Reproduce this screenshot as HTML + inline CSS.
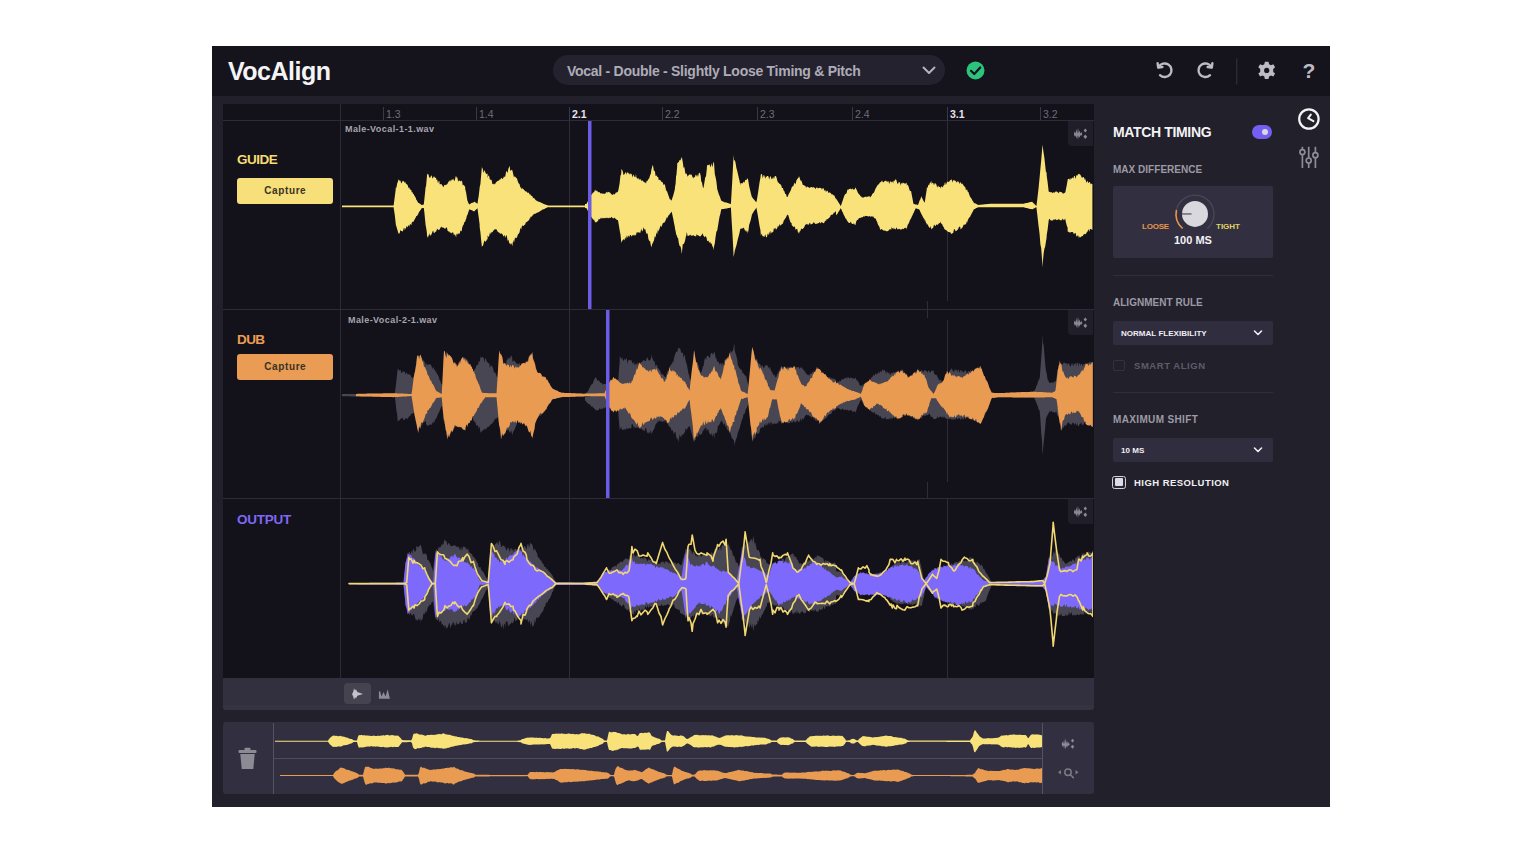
<!DOCTYPE html>
<html><head><meta charset="utf-8">
<style>
*{box-sizing:border-box;margin:0;padding:0}
html,body{width:1540px;height:850px;background:#fff;overflow:hidden;font-family:"Liberation Sans",sans-serif}
.a{position:absolute}
#win{left:212px;top:46px;width:1118px;height:761px;background:#22202b}
#hdr{left:212px;top:46px;width:1118px;height:50px;background:#15131c}
#logo{left:228px;top:56.7px;font-size:25px;font-weight:bold;color:#f4f3f6;letter-spacing:-0.5px}
#preset{left:553px;top:55px;width:392px;height:30px;border-radius:15px;background:#24222e}
#presettxt{left:567px;top:62.5px;font-size:14px;font-weight:bold;color:#aeacb7;letter-spacing:-0.27px;white-space:nowrap}
#lp{left:223px;top:104px;width:871px;height:606px;background:#131119;border-radius:3px;overflow:hidden}
#ruler{left:223px;top:104px;width:871px;height:17px;background:#131119;border-bottom:1px solid #2d2b37}
.tick{width:1px;background:#3a3845;top:107px;height:13px}
.tl{top:107.5px;font-size:10.5px;color:#6f6c7a}
.tlb{top:107.5px;font-size:10.5px;color:#e6e4ea;font-weight:bold}
.vline{width:1px;background:#2e2c38}
.hline{height:1px;background:#2e2c39}
.tname{font-size:13.5px;font-weight:bold}
.cap{width:96px;height:26px;border-radius:3px;font-size:10px;font-weight:bold;color:#3a3325;text-align:center;line-height:26px;letter-spacing:0.6px;text-indent:0.6px}
.fname{font-size:9px;font-weight:bold;color:#a7a5b0;letter-spacing:0.42px}
.ibox{width:25px;height:25px;background:#201e29;border-radius:0 0 0 4px}
#tb{left:223px;top:678px;width:871px;height:32px;background:#322f3e;border-radius:0 0 3px 3px}
#ov{left:223px;top:722px;width:871px;height:72px;background:#322f40;border-radius:3px}
.lbl{font-size:10px;font-weight:bold;color:#9c9aa5;letter-spacing:0.02px}
.dd{width:160px;height:24px;background:#302d3e;border-radius:2px}
.ddt{font-size:8px;font-weight:bold;color:#f0eff3;letter-spacing:0.03px}
</style></head><body>
<div id="win" class="a"></div>
<div id="hdr" class="a"></div>
<div id="logo" class="a">VocAlign</div>
<div id="preset" class="a"></div>
<div id="presettxt" class="a">Vocal - Double - Slightly Loose Timing &amp; Pitch</div>
<svg class="a" style="left:0;top:0" width="1540" height="850" viewBox="0 0 1540 850">
  <!-- chevron preset -->
  <path d="M923.5,67.5 L929,73 L934.5,67.5" fill="none" stroke="#b4b2bc" stroke-width="2" stroke-linecap="round" stroke-linejoin="round"/>
  <!-- green check -->
  <circle cx="975.5" cy="70.5" r="9" fill="#2cc47c"/>
  <path d="M971,70.8 L974.3,74 L980.2,67.5" fill="none" stroke="#15131c" stroke-width="2.2" stroke-linecap="round" stroke-linejoin="round"/>
  <!-- undo -->
  <g fill="none" stroke="#bdbbc3" stroke-width="2.4" stroke-linecap="round" stroke-linejoin="round">
    <path d="M1158.6,67.2 A6.8,6.8 0 1 1 1160,75.2"/>
    <path d="M1157.6,63.2 L1158.2,67.6 L1162.4,67"/>
    <path d="M1211.4,67.2 A6.8,6.8 0 1 0 1210,75.2"/>
    <path d="M1212.4,63.2 L1211.8,67.6 L1207.6,67"/>
  </g>
  <rect x="1236" y="58.5" width="1.5" height="26" fill="#2b2935"/>
  <!-- gear -->
  <g transform="translate(1266.7,70.4)" fill="#bdbbc3">
    <path d="M-1.8,-8.6 L1.8,-8.6 L2.4,-6.2 L4.3,-5.2 L6.6,-6.2 L8.4,-3.1 L6.5,-1.5 L6.5,1.5 L8.4,3.1 L6.6,6.2 L4.3,5.2 L2.4,6.2 L1.8,8.6 L-1.8,8.6 L-2.4,6.2 L-4.3,5.2 L-6.6,6.2 L-8.4,3.1 L-6.5,1.5 L-6.5,-1.5 L-8.4,-3.1 L-6.6,-6.2 L-4.3,-5.2 L-2.4,-6.2 Z"/>
    <circle r="2.6" fill="#15131c"/>
  </g>
  <!-- ? -->
  <text x="1309" y="78.4" font-family="Liberation Sans" font-weight="bold" font-size="21" fill="#bdbbc3" text-anchor="middle">?</text>
</svg>

<div id="lp" class="a"></div>
<div id="ruler" class="a"></div>

<!-- ruler ticks -->
<div class="a tick" style="left:383px"></div><div class="a tl" style="left:386px">1.3</div>
<div class="a tick" style="left:476px"></div><div class="a tl" style="left:479px">1.4</div>
<div class="a tick" style="left:569px"></div><div class="a tlb" style="left:572px">2.1</div>
<div class="a tick" style="left:662px"></div><div class="a tl" style="left:665px">2.2</div>
<div class="a tick" style="left:757px"></div><div class="a tl" style="left:760px">2.3</div>
<div class="a tick" style="left:852px"></div><div class="a tl" style="left:855px">2.4</div>
<div class="a tick" style="left:947px"></div><div class="a tlb" style="left:950px">3.1</div>
<div class="a tick" style="left:1040px"></div><div class="a tl" style="left:1043px">3.2</div>

<!-- column divider + gridlines -->
<div class="a vline" style="left:340px;top:104px;height:574px;background:#2c2a36"></div>
<div class="a vline" style="left:569px;top:121px;height:557px"></div>
<div class="a vline" style="left:947px;top:121px;height:180px"></div>
<div class="a vline" style="left:947px;top:320px;height:162px"></div>
<div class="a vline" style="left:947px;top:499px;height:179px"></div>
<div class="a hline" style="left:223px;top:309px;width:871px"></div>
<div class="a hline" style="left:223px;top:498px;width:871px"></div>
<div class="a vline" style="left:927px;top:301px;height:17px"></div>
<div class="a vline" style="left:927px;top:482px;height:17px"></div>

<svg class="a" style="left:0;top:0" width="1540" height="850" viewBox="0 0 1540 850">
  <defs>
    <clipPath id="cg"><rect x="341" y="121" width="752" height="187"/></clipPath>
    <clipPath id="cd"><rect x="341" y="310" width="752" height="187"/></clipPath>
    <clipPath id="co"><rect x="341" y="499" width="752" height="179"/></clipPath>
  </defs>
  <g clip-path="url(#cg)"><path d="M342.0,205.4 342.8,205.4 343.6,205.4 344.4,205.4 345.2,205.4 346.0,205.4 346.8,205.4 347.6,205.4 348.4,205.4 349.2,205.4 350.0,205.4 350.8,205.4 351.6,205.4 352.4,205.4 353.2,205.4 354.0,205.4 354.8,205.4 355.6,205.4 356.4,205.4 357.2,205.4 358.0,205.4 358.8,205.4 359.6,205.4 360.4,205.4 361.2,205.4 362.0,205.4 362.8,205.4 363.6,205.4 364.4,205.4 365.2,205.4 366.0,205.4 366.8,205.4 367.6,205.4 368.4,205.4 369.2,205.4 370.0,205.4 370.8,205.4 371.6,205.4 372.4,205.4 373.2,205.4 374.0,205.4 374.8,205.4 375.6,205.4 376.4,205.4 377.2,205.4 378.0,205.4 378.8,205.4 379.6,205.4 380.4,205.4 381.2,205.4 382.0,205.4 382.8,205.4 383.6,205.4 384.4,205.4 385.2,205.4 386.0,205.4 386.8,205.4 387.6,205.4 388.4,205.4 389.2,205.4 390.0,205.4 390.8,205.4 391.6,205.4 392.4,205.4 393.2,205.4 393.6,205.4 394.0,202.6 394.8,196.4 395.6,190.3 395.9,187.1 396.4,188.0 397.2,183.2 398.0,181.6 398.6,179.2 398.8,179.4 399.6,180.8 400.4,180.4 401.2,183.6 402.0,182.2 402.8,180.8 403.6,181.0 404.4,183.0 404.8,181.5 405.2,181.9 406.0,183.7 406.8,184.2 407.6,184.9 408.4,187.5 409.2,188.4 409.3,187.1 410.0,189.7 410.8,189.6 411.5,190.4 411.6,192.3 412.4,192.1 413.2,194.3 413.8,193.8 414.0,194.9 414.8,196.3 415.6,197.4 416.4,200.0 417.1,200.5 417.2,201.0 418.0,202.5 418.2,202.7 418.8,203.1 419.6,203.6 420.4,204.1 421.2,204.7 421.6,204.9 422.0,204.9 422.8,204.7 423.6,204.5 423.8,204.5 424.4,199.1 425.2,191.3 425.6,187.1 426.0,186.4 426.8,177.8 427.2,173.6 427.6,174.3 428.4,174.2 429.2,177.2 430.0,178.0 430.8,176.3 431.6,175.2 432.4,178.4 433.2,177.8 433.9,175.9 434.0,176.3 434.8,177.6 435.6,177.8 436.1,178.1 436.4,179.9 437.2,179.6 438.0,183.5 438.8,180.8 439.5,181.5 439.6,184.2 440.4,184.3 441.2,184.1 442.0,184.8 442.8,186.5 442.8,185.9 443.6,187.3 444.4,184.7 445.2,185.2 446.0,184.6 446.8,184.8 447.6,183.5 448.4,182.1 449.2,180.6 449.5,180.4 450.0,181.9 450.8,179.8 451.6,180.8 451.8,178.9 452.4,179.9 453.2,178.5 454.0,180.7 454.8,180.4 455.6,176.4 456.2,175.9 456.4,177.6 457.2,177.2 458.0,180.4 458.8,181.4 459.6,180.2 460.4,181.2 461.2,181.3 461.8,180.4 462.0,180.8 462.8,185.5 463.6,184.8 464.4,185.8 465.2,187.1 465.2,189.0 466.0,191.9 466.3,193.8 466.8,197.1 467.4,200.5 467.6,201.0 468.4,203.0 469.2,204.5 469.2,204.5 470.0,204.0 470.8,203.4 471.6,203.0 471.9,202.7 472.4,202.8 473.2,202.5 474.0,202.2 474.1,201.6 474.8,202.1 475.6,202.6 476.4,203.1 477.2,203.6 477.5,203.8 478.0,200.1 478.8,195.2 479.6,188.1 479.7,187.1 480.4,184.0 481.2,174.6 482.0,165.8 482.0,167.5 482.8,169.0 483.6,173.1 484.4,170.1 485.2,171.9 486.0,173.8 486.8,174.0 487.6,173.6 487.6,177.9 488.4,175.2 489.2,176.2 490.0,180.0 490.8,179.4 491.6,179.9 492.4,183.9 493.2,184.2 494.0,183.4 494.3,183.7 494.8,184.7 495.6,182.9 496.4,181.9 497.2,181.2 498.0,180.7 498.8,180.8 499.6,179.6 500.4,179.4 501.2,177.8 502.0,178.6 502.8,179.3 503.2,175.9 503.6,178.4 504.4,176.5 505.2,176.7 506.0,172.2 506.8,170.7 507.6,173.3 508.4,168.4 509.2,167.3 509.9,165.8 510.0,169.9 510.8,170.8 511.6,169.8 512.1,169.9 512.4,170.4 513.2,174.1 514.0,177.6 514.8,175.9 515.6,177.3 516.4,177.9 516.6,178.1 517.2,179.3 518.0,182.0 518.8,183.6 519.6,184.2 520.4,187.7 521.1,187.1 521.2,189.4 522.0,187.8 522.8,188.9 523.6,189.2 524.4,190.2 525.2,190.9 526.0,191.8 526.8,191.4 527.6,193.0 528.4,192.6 529.2,193.6 530.0,195.1 530.0,193.8 530.8,195.3 531.6,195.9 532.3,196.0 532.4,196.6 533.2,198.2 534.0,197.8 534.8,199.1 535.6,200.0 536.4,200.8 536.7,200.5 537.2,201.1 538.0,201.5 538.8,201.8 539.6,202.0 540.4,202.3 541.2,202.7 542.0,203.1 542.8,203.5 543.4,203.8 543.6,203.9 544.4,204.2 545.2,204.4 546.0,204.7 546.8,205.0 547.6,205.3 547.9,205.4 548.4,205.4 549.2,205.4 550.0,205.4 550.8,205.4 551.6,205.4 552.4,205.4 553.2,205.4 554.0,205.4 554.8,205.4 555.6,205.4 556.4,205.4 557.2,205.4 558.0,205.4 558.8,205.4 559.6,205.4 560.4,205.4 561.2,205.4 562.0,205.4 562.8,205.4 563.6,205.4 564.4,205.4 565.2,205.4 566.0,205.4 566.8,205.4 567.6,205.4 568.4,205.4 569.2,205.4 570.0,205.4 570.8,205.4 571.6,205.4 572.4,205.4 573.2,205.4 574.0,205.4 574.8,205.4 575.6,205.4 576.4,205.4 577.2,205.4 578.0,205.4 578.8,205.4 579.6,205.4 580.4,205.4 581.2,205.4 582.0,205.4 582.8,205.4 583.6,205.4 584.4,205.4 585.0,205.4 585.0,204.1 585.2,204.1 586.0,203.9 586.7,203.8 586.8,203.6 587.6,201.7 588.4,199.9 589.2,198.4 590.0,196.5 590.1,196.0 590.8,195.1 591.6,194.7 592.4,193.4 593.2,192.3 594.0,192.4 594.8,190.3 595.6,190.9 595.6,189.3 596.4,191.1 597.2,190.7 598.0,192.3 598.8,192.3 599.6,192.1 600.4,193.5 601.2,193.3 602.0,193.5 602.4,193.8 602.8,193.6 603.6,193.8 604.4,193.8 605.2,193.8 606.0,192.4 606.8,192.0 607.6,192.7 607.9,191.5 608.4,191.9 609.2,192.3 610.0,192.6 610.8,193.6 611.6,194.5 612.4,194.8 613.2,194.7 613.5,193.8 614.0,193.7 614.8,194.7 615.6,192.8 616.4,192.6 617.2,192.2 618.0,191.6 618.0,191.5 618.8,188.0 619.6,183.4 620.4,175.7 621.2,174.1 621.4,169.2 622.0,169.6 622.8,171.5 623.6,175.2 624.4,174.2 625.2,172.9 626.0,172.0 626.8,175.0 627.0,172.5 627.6,172.6 628.4,172.8 629.2,174.8 630.0,173.1 630.8,174.3 631.6,173.8 632.4,177.5 633.2,174.4 634.0,175.8 634.8,177.3 635.6,176.7 635.9,173.6 636.4,177.4 637.2,178.0 638.0,179.6 638.8,177.7 639.6,179.9 640.4,178.8 641.2,181.0 642.0,180.3 642.8,180.7 643.6,181.7 644.4,182.2 644.8,182.6 645.2,182.3 646.0,183.5 646.8,180.6 647.6,181.1 648.4,179.0 649.2,178.4 649.3,178.1 650.0,175.6 650.8,173.8 651.5,169.2 651.6,169.1 652.4,165.9 652.7,164.7 653.2,166.6 654.0,171.6 654.8,170.4 655.6,176.0 656.4,175.4 657.1,175.9 657.2,176.9 658.0,176.9 658.2,177.2 658.8,180.3 659.6,179.8 660.4,179.9 661.2,182.1 662.0,181.4 662.8,182.8 663.6,184.9 664.4,184.3 665.0,184.8 665.2,185.9 666.0,189.9 666.8,191.3 667.2,191.5 667.6,192.9 668.4,195.2 669.2,197.6 669.4,198.2 670.0,199.5 670.8,199.6 671.6,200.8 671.7,200.5 672.4,197.8 673.2,195.8 674.0,192.6 674.8,189.5 675.0,187.1 675.6,183.8 676.1,175.3 676.4,175.7 677.2,165.8 677.2,163.6 678.0,162.6 678.8,161.9 679.6,160.1 680.4,160.3 681.2,158.5 681.7,156.9 682.0,158.0 682.8,162.3 683.6,168.0 684.4,166.9 685.2,172.5 686.0,174.4 686.2,173.6 686.8,173.7 687.6,176.7 688.4,175.6 689.2,174.6 690.0,174.5 690.8,174.8 691.6,174.5 692.4,176.7 693.2,178.4 694.0,176.8 694.8,177.6 695.6,174.8 696.2,174.8 696.4,176.7 697.2,174.4 698.0,176.9 698.8,173.3 699.6,172.9 700.0,172.5 700.4,174.9 700.7,175.6 701.2,181.2 702.0,182.5 702.8,187.1 703.4,188.2 703.6,187.3 704.4,182.4 705.2,177.4 706.0,176.3 706.8,168.9 707.0,165.4 707.6,165.1 708.4,165.3 709.2,164.3 710.0,165.4 710.8,167.5 711.6,163.1 712.4,167.5 713.2,162.9 713.9,161.8 714.0,162.6 714.8,173.9 715.6,177.3 716.4,181.5 717.2,188.7 717.5,190.0 718.0,191.4 718.8,194.2 719.6,196.1 720.4,198.3 721.2,200.5 721.3,200.7 722.0,201.0 722.8,201.4 723.6,201.7 724.4,202.3 725.2,202.4 726.0,202.3 726.8,202.7 727.6,202.9 728.4,203.2 729.2,203.5 730.0,203.7 730.8,204.0 730.9,204.0 731.6,192.1 732.4,178.3 733.2,162.6 733.6,154.7 734.0,160.8 734.8,159.9 735.6,163.0 736.4,168.0 737.2,170.8 738.0,174.2 738.8,177.7 739.6,181.0 740.4,185.6 740.5,183.0 741.2,183.2 742.0,183.2 742.8,183.3 743.6,181.6 744.4,182.7 745.2,180.1 746.0,180.1 746.8,179.4 747.6,178.5 747.7,177.7 748.4,181.3 749.2,186.2 750.0,189.6 750.8,193.0 751.6,196.0 751.9,196.9 752.4,197.5 753.2,198.7 754.0,199.4 754.8,200.6 755.6,201.4 756.4,202.3 756.4,202.2 757.2,198.1 758.0,192.9 758.8,187.4 759.6,182.0 760.4,178.1 760.9,173.9 761.2,174.0 762.0,174.3 762.8,178.5 763.6,175.0 764.4,175.5 765.2,178.8 766.0,176.3 766.8,177.3 766.9,175.9 767.6,175.9 768.4,176.3 769.2,179.6 770.0,176.8 770.8,176.3 771.6,179.3 772.4,178.8 773.2,176.8 774.0,179.1 774.8,176.1 775.6,176.0 775.8,175.9 776.4,176.9 777.2,180.3 778.0,182.6 778.8,182.8 779.6,184.0 780.4,184.3 781.2,185.2 782.0,187.9 782.8,187.9 783.0,188.2 783.6,190.4 784.4,191.2 785.2,194.0 786.0,194.1 786.8,196.9 787.5,196.9 787.6,196.7 788.4,194.8 789.2,193.3 790.0,191.7 790.8,190.2 791.6,187.7 791.7,187.3 792.4,186.2 793.2,186.6 794.0,183.9 794.8,182.5 795.6,184.5 796.4,180.6 797.2,179.1 798.0,178.3 798.8,177.3 798.9,175.9 799.6,177.5 800.4,180.6 801.2,180.4 802.0,182.3 802.8,184.9 803.6,185.0 804.4,185.4 805.2,186.0 805.8,186.4 806.0,188.1 806.8,186.6 807.6,186.7 808.4,187.3 809.2,187.7 810.0,187.7 810.8,187.0 811.6,187.0 812.4,187.5 813.2,187.3 814.0,187.2 814.8,188.1 815.6,189.0 816.4,187.5 817.2,187.5 818.0,188.6 818.8,187.9 819.6,187.8 820.4,187.9 821.2,188.0 822.0,189.7 822.8,188.1 823.6,188.5 823.7,188.2 824.4,191.0 825.2,189.8 826.0,192.0 826.8,190.8 827.6,190.8 828.4,193.0 829.2,192.2 830.0,192.8 830.8,193.0 831.6,194.6 832.4,194.2 833.2,195.1 834.0,195.5 834.2,195.3 834.8,196.5 835.6,198.8 836.0,198.3 836.0,198.3 836.4,198.9 837.2,200.4 837.5,200.5 838.0,201.4 838.8,203.0 839.6,204.0 840.4,205.4 840.8,206.1 841.2,204.9 842.0,202.6 842.8,200.2 843.6,197.8 844.2,196.0 844.4,195.6 845.2,194.1 845.3,193.8 846.0,194.2 846.8,192.3 847.5,189.3 847.6,189.6 848.4,190.2 848.6,189.0 849.2,189.0 850.0,188.7 850.8,188.7 851.6,189.4 852.4,188.2 853.2,189.9 854.0,189.0 854.8,189.4 855.4,187.1 855.6,187.8 856.4,189.2 857.2,191.0 858.0,192.9 858.7,193.8 858.8,194.1 859.6,194.7 860.4,196.0 861.2,196.4 862.0,197.4 862.1,197.1 862.8,197.7 863.6,197.6 864.4,196.9 865.2,196.8 866.0,196.8 866.5,196.6 866.8,197.5 867.6,196.5 868.4,196.4 869.2,196.2 870.0,196.6 870.8,197.4 871.0,196.0 871.6,195.7 872.4,193.8 873.2,193.2 874.0,192.6 874.8,190.6 875.5,188.5 875.6,188.8 876.4,187.0 877.2,186.0 877.7,184.8 878.0,184.8 878.8,184.2 879.6,183.0 880.0,182.6 880.4,182.3 881.2,181.7 882.0,180.6 882.2,180.4 882.8,182.2 883.6,182.3 884.4,181.2 885.2,180.7 886.0,180.8 886.6,180.9 886.8,182.1 887.6,181.4 888.4,181.1 889.2,184.0 890.0,181.6 890.8,181.5 891.1,181.5 891.6,182.5 892.4,181.3 893.2,183.6 893.4,180.4 894.0,181.5 894.8,180.3 895.6,179.2 896.4,180.1 897.2,183.2 898.0,183.9 898.8,181.7 899.6,182.6 900.1,182.6 900.4,185.7 901.2,182.7 902.0,184.1 902.8,182.6 903.6,183.1 904.4,183.4 905.2,183.6 906.0,183.6 906.8,182.6 906.8,185.7 907.6,184.6 908.4,186.1 909.2,188.7 910.0,191.2 910.8,190.7 911.2,191.6 911.6,193.9 912.4,198.0 913.2,202.6 913.5,203.8 914.0,204.0 914.8,204.2 915.6,204.4 915.7,204.4 916.4,204.6 917.2,204.8 918.0,204.9 918.0,204.8 918.8,203.0 919.1,202.0 919.6,200.6 920.4,199.2 921.2,196.4 921.3,196.0 922.0,198.2 922.4,198.2 922.8,199.5 923.6,201.0 924.4,202.2 924.7,202.7 925.2,199.6 926.0,193.9 926.8,189.0 926.9,187.1 927.6,187.9 928.4,184.8 929.2,185.0 930.0,182.5 930.8,182.4 931.4,180.4 931.6,183.9 932.4,182.8 933.2,183.1 934.0,185.2 934.8,182.9 935.6,183.6 936.4,184.4 937.2,187.7 938.0,185.6 938.8,186.8 939.6,186.9 940.3,187.1 940.4,188.7 941.2,186.4 942.0,186.5 942.8,187.5 943.6,185.3 944.4,185.0 944.8,182.6 945.2,182.5 946.0,184.9 946.8,182.4 947.6,181.5 948.4,181.9 949.2,181.8 950.0,180.2 950.8,180.1 951.5,179.2 951.6,179.3 952.4,182.4 953.2,179.7 954.0,180.7 954.8,180.2 955.6,181.1 956.4,182.8 957.2,180.7 958.0,182.4 958.8,181.3 959.6,183.9 960.4,182.1 960.4,181.5 961.2,184.1 962.0,183.3 962.8,184.3 963.6,185.5 964.4,186.4 965.2,187.0 966.0,190.3 966.8,189.6 967.1,189.3 967.6,191.6 968.4,192.1 969.2,194.6 970.0,196.5 970.8,197.8 971.6,198.8 972.4,200.5 973.2,201.6 973.8,202.7 974.0,202.9 974.8,203.2 975.6,203.6 976.4,204.0 977.2,204.4 978.0,204.8 978.3,204.9 978.8,204.9 979.6,204.8 980.4,204.7 981.2,204.7 982.0,204.6 982.8,204.5 983.6,204.4 984.4,204.3 985.2,204.3 986.0,204.2 986.8,204.1 987.6,204.0 988.4,203.9 989.2,203.9 989.5,203.8 990.0,203.8 990.8,203.8 991.6,203.8 992.4,203.8 993.2,203.8 994.0,203.8 994.8,203.8 995.6,203.8 996.4,203.8 997.2,203.8 998.0,203.8 998.8,203.8 999.6,203.8 1000.4,203.8 1001.2,203.8 1002.0,203.8 1002.8,203.8 1003.6,203.8 1004.4,203.8 1005.2,203.8 1006.0,203.8 1006.8,203.8 1007.6,203.8 1008.4,203.8 1009.2,203.8 1010.0,203.8 1010.8,203.8 1011.6,203.8 1012.4,203.8 1013.2,203.8 1014.0,203.8 1014.8,203.8 1015.6,203.8 1016.4,203.8 1017.2,203.8 1018.0,203.8 1018.8,203.8 1019.6,203.8 1020.4,203.8 1021.2,203.8 1022.0,203.8 1022.8,203.8 1023.0,203.8 1023.6,203.7 1024.4,203.5 1025.2,203.3 1026.0,203.1 1026.8,202.9 1027.6,203.0 1028.4,202.5 1029.2,202.4 1030.0,202.1 1030.8,202.1 1031.6,201.9 1032.0,201.6 1032.4,202.0 1033.2,203.0 1034.0,203.6 1034.8,204.4 1035.6,205.2 1036.4,206.0 1036.4,206.1 1037.2,200.1 1038.0,193.0 1038.7,187.1 1038.8,185.7 1039.6,177.5 1040.4,168.7 1041.2,160.5 1042.0,150.8 1042.5,144.6 1042.8,147.2 1043.6,152.7 1044.4,158.0 1045.2,165.5 1046.0,172.7 1046.5,171.4 1046.8,176.6 1047.6,182.0 1048.4,188.9 1048.7,191.5 1049.2,191.9 1050.0,191.7 1050.8,192.4 1051.6,191.9 1052.4,193.2 1053.2,191.9 1054.0,192.9 1054.8,192.2 1055.6,191.5 1056.4,191.5 1057.2,191.8 1058.0,192.4 1058.8,193.2 1059.6,191.5 1060.4,192.0 1061.2,192.0 1062.0,192.4 1062.8,193.4 1063.6,193.5 1064.4,192.9 1065.2,192.5 1065.5,191.5 1066.0,188.8 1066.8,184.9 1067.6,180.2 1067.7,179.2 1068.4,179.1 1069.2,178.6 1070.0,180.3 1070.8,177.8 1071.6,178.9 1072.4,177.2 1073.2,178.7 1074.0,176.2 1074.8,175.7 1075.6,179.1 1076.4,174.9 1077.2,175.8 1078.0,174.2 1078.8,174.1 1078.9,173.6 1079.6,174.2 1080.4,174.7 1081.2,176.3 1082.0,178.3 1082.8,177.0 1083.6,177.0 1084.4,178.6 1085.2,180.7 1085.6,178.1 1086.0,181.2 1086.8,182.7 1087.6,180.5 1088.4,183.3 1089.2,182.0 1090.0,182.2 1090.8,184.6 1091.6,183.6 1092.4,184.3 1092.4,229.9 1091.6,229.4 1090.8,229.1 1090.0,229.0 1089.2,231.8 1088.4,228.9 1087.6,231.4 1086.8,232.2 1086.0,233.7 1085.6,234.0 1085.2,234.2 1084.4,234.0 1083.6,234.5 1082.8,235.9 1082.0,236.2 1081.2,236.6 1080.4,237.4 1079.6,236.6 1078.9,238.5 1078.8,237.2 1078.0,235.1 1077.2,236.2 1076.4,236.4 1075.6,233.1 1074.8,232.9 1074.0,234.6 1073.2,232.6 1072.4,231.9 1071.6,231.9 1070.8,232.0 1070.0,233.1 1069.2,232.1 1068.4,231.7 1067.7,231.8 1067.6,227.6 1066.8,225.8 1066.0,222.6 1065.5,220.6 1065.2,218.6 1064.4,219.7 1063.6,220.3 1062.8,218.6 1062.0,219.8 1061.2,220.4 1060.4,220.3 1059.6,219.8 1058.8,218.7 1058.0,220.3 1057.2,219.5 1056.4,220.3 1055.6,218.9 1054.8,220.0 1054.0,219.1 1053.2,220.3 1052.4,220.5 1051.6,220.6 1050.8,220.5 1050.0,219.6 1049.2,218.7 1048.7,220.6 1048.4,223.1 1047.6,229.7 1046.8,234.5 1046.5,238.5 1046.0,241.3 1045.2,246.6 1044.4,248.8 1043.6,253.7 1042.8,262.4 1042.5,267.5 1042.0,258.6 1041.2,248.1 1040.4,244.4 1039.6,234.2 1038.8,227.4 1038.7,227.2 1038.0,220.9 1037.2,213.9 1036.4,207.2 1036.4,207.2 1035.6,207.6 1034.8,208.0 1034.0,208.4 1033.2,208.8 1032.4,209.2 1032.0,209.4 1031.6,209.1 1030.8,209.1 1030.0,208.9 1029.2,208.7 1028.4,208.5 1027.6,208.3 1026.8,208.1 1026.0,207.9 1025.2,207.7 1024.4,207.5 1023.6,207.3 1023.0,207.2 1022.8,207.2 1022.0,207.2 1021.2,207.2 1020.4,207.2 1019.6,207.2 1018.8,207.2 1018.0,207.2 1017.2,207.2 1016.4,207.2 1015.6,207.2 1014.8,207.2 1014.0,207.2 1013.2,207.2 1012.4,207.2 1011.6,207.2 1010.8,207.2 1010.0,207.2 1009.2,207.2 1008.4,207.2 1007.6,207.2 1006.8,207.2 1006.0,207.2 1005.2,207.2 1004.4,207.2 1003.6,207.2 1002.8,207.2 1002.0,207.2 1001.2,207.2 1000.4,207.2 999.6,207.2 998.8,207.2 998.0,207.2 997.2,207.2 996.4,207.2 995.6,207.2 994.8,207.2 994.0,207.2 993.2,207.2 992.4,207.2 991.6,207.2 990.8,207.2 990.0,207.2 989.5,207.2 989.2,207.2 988.4,207.2 987.6,207.2 986.8,207.2 986.0,207.2 985.2,207.2 984.4,207.2 983.6,207.2 982.8,207.2 982.0,207.2 981.2,207.2 980.4,207.2 979.6,207.2 978.8,207.2 978.3,207.2 978.0,207.3 977.2,207.7 976.4,208.1 975.6,208.5 974.8,208.9 974.0,209.3 973.8,209.4 973.2,210.7 972.4,212.3 971.6,213.8 970.8,215.3 970.0,217.1 969.2,217.6 968.4,219.0 967.6,220.7 967.1,222.8 966.8,221.6 966.0,224.0 965.2,224.6 964.4,224.8 963.6,224.7 962.8,227.1 962.0,227.9 961.2,228.7 960.4,229.5 960.4,227.3 959.6,226.6 958.8,227.3 958.0,229.4 957.2,230.1 956.4,231.0 955.6,231.3 954.8,229.6 954.0,229.0 953.2,233.0 952.4,233.2 951.6,233.9 951.5,234.0 950.8,233.3 950.0,232.1 949.2,232.2 948.4,231.9 947.6,231.4 946.8,230.8 946.0,230.1 945.2,229.8 944.8,229.5 944.4,228.9 943.6,226.9 942.8,226.1 942.0,223.8 941.2,223.8 940.4,221.3 940.3,222.8 939.6,223.1 938.8,223.4 938.0,224.6 937.2,225.1 936.4,224.3 935.6,226.3 934.8,225.5 934.0,224.6 933.2,227.7 932.4,228.2 931.6,229.3 931.4,229.5 930.8,226.1 930.0,228.2 929.2,227.2 928.4,226.2 927.6,224.0 926.9,225.1 926.8,223.8 926.0,222.8 925.2,220.2 924.7,220.6 924.4,218.9 923.6,218.3 922.8,216.8 922.4,216.1 922.0,215.1 921.3,213.9 921.2,213.4 920.4,212.1 919.6,210.0 919.1,209.4 918.8,209.2 918.0,209.0 918.0,209.0 917.2,208.8 916.4,208.5 915.7,208.3 915.6,208.6 914.8,210.3 914.0,212.1 913.5,213.3 913.2,213.6 912.4,215.6 911.6,217.0 911.2,218.3 910.8,218.7 910.0,220.0 909.2,222.3 908.4,224.1 907.6,225.1 906.8,229.1 906.8,229.5 906.0,227.3 905.2,228.2 904.4,228.1 903.6,229.3 902.8,228.6 902.0,229.3 901.2,229.4 900.4,229.5 900.1,229.5 899.6,229.1 898.8,228.7 898.0,229.5 897.2,229.0 896.4,227.3 895.6,229.5 894.8,229.0 894.0,228.3 893.4,229.5 893.2,227.6 892.4,228.7 891.6,227.0 891.1,230.3 890.8,229.6 890.0,229.1 889.2,229.8 888.4,230.8 887.6,231.2 886.8,230.9 886.6,231.8 886.0,230.7 885.2,230.7 884.4,230.5 883.6,230.7 882.8,229.4 882.2,230.3 882.0,229.1 881.2,229.3 880.4,229.7 880.0,229.5 879.6,227.3 878.8,226.0 878.0,224.6 877.7,223.9 877.2,222.1 876.4,220.4 875.6,218.4 875.5,218.4 874.8,218.2 874.0,217.9 873.2,216.3 872.4,216.8 871.6,216.0 871.0,217.2 870.8,217.0 870.0,216.0 869.2,216.2 868.4,216.6 867.6,216.2 866.8,216.1 866.5,216.1 866.0,216.1 865.2,215.8 864.4,216.7 863.6,216.3 862.8,217.1 862.1,217.4 862.0,217.4 861.2,217.3 860.4,217.9 859.6,218.1 858.8,218.2 858.7,218.4 858.0,219.8 857.2,220.1 856.4,221.1 855.6,224.2 855.4,225.1 854.8,224.9 854.0,223.2 853.2,224.0 852.4,224.0 851.6,223.6 850.8,221.4 850.0,223.1 849.2,223.0 848.6,222.8 848.4,222.2 847.6,221.4 847.5,221.3 846.8,220.3 846.0,218.4 845.3,218.4 845.2,217.8 844.4,216.0 844.2,215.8 843.6,214.5 842.8,212.5 842.0,210.9 841.2,208.9 840.8,208.3 840.4,208.7 839.6,210.2 838.8,211.4 838.0,212.5 837.5,213.9 837.2,214.1 836.4,214.7 836.0,215.4 836.0,211.3 835.6,211.4 834.8,212.3 834.2,213.0 834.0,212.3 833.2,213.9 832.4,214.7 831.6,214.8 830.8,214.9 830.0,217.1 829.2,217.7 828.4,218.6 827.6,219.3 826.8,219.1 826.0,221.0 825.2,220.5 824.4,222.6 823.7,223.3 823.6,223.2 822.8,223.0 822.0,221.9 821.2,222.4 820.4,223.5 819.6,222.1 818.8,223.0 818.0,223.2 817.2,223.8 816.4,223.8 815.6,224.0 814.8,223.5 814.0,222.2 813.2,222.8 812.4,224.0 811.6,224.0 810.8,224.7 810.0,222.8 809.2,223.5 808.4,225.0 807.6,224.2 806.8,224.5 806.0,223.6 805.8,225.3 805.2,224.4 804.4,226.9 803.6,228.0 802.8,229.0 802.0,229.1 801.2,228.6 800.4,231.1 799.6,231.4 798.9,234.0 798.8,232.3 798.0,232.8 797.2,228.8 796.4,229.0 795.6,229.9 794.8,226.3 794.0,227.0 793.2,226.7 792.4,225.7 791.7,225.1 791.6,223.1 790.8,222.7 790.0,220.9 789.2,218.5 788.4,215.5 787.6,214.6 787.5,214.8 786.8,215.4 786.0,217.5 785.2,218.5 784.4,219.8 783.6,220.9 783.0,223.5 782.8,223.5 782.0,224.3 781.2,224.8 780.4,225.7 779.6,223.9 778.8,227.1 778.0,225.5 777.2,228.3 776.4,229.2 775.8,229.8 775.6,227.4 774.8,229.3 774.0,227.8 773.2,232.0 772.4,232.3 771.6,233.3 770.8,230.8 770.0,234.7 769.2,231.6 768.4,235.2 767.6,233.5 766.9,237.6 766.8,237.5 766.0,236.8 765.2,234.2 764.4,236.9 763.6,236.3 762.8,236.5 762.0,235.1 761.2,233.5 760.9,236.0 760.4,230.0 759.6,226.3 758.8,221.4 758.0,216.6 757.2,211.9 756.4,207.7 756.4,207.6 755.6,208.9 754.8,210.1 754.0,211.1 753.2,212.6 752.4,213.8 751.9,214.8 751.6,216.2 750.8,219.7 750.0,222.6 749.2,224.7 748.4,230.7 747.7,234.0 747.6,230.8 746.8,232.3 746.0,229.7 745.2,231.5 744.4,229.0 743.6,227.6 742.8,228.6 742.0,228.3 741.2,228.8 740.5,228.9 740.4,228.2 739.6,232.5 738.8,235.8 738.0,238.6 737.2,242.0 736.4,245.4 735.6,247.9 734.8,250.7 734.0,255.3 733.6,257.0 733.2,247.8 732.4,233.0 731.6,220.3 730.9,207.6 730.8,207.6 730.0,207.8 729.2,207.9 728.4,208.1 727.6,208.2 726.8,208.4 726.0,208.5 725.2,208.7 724.4,208.8 723.6,209.0 722.8,209.0 722.0,208.9 721.3,209.4 721.2,209.4 720.4,213.7 719.6,216.6 718.8,221.1 718.0,226.1 717.5,228.9 717.2,230.4 716.4,231.7 715.6,236.7 714.8,243.4 714.0,246.5 713.9,250.1 713.2,247.6 712.4,246.3 711.6,243.6 710.8,243.8 710.0,241.5 709.2,243.0 708.4,240.5 707.6,241.1 707.0,240.8 706.8,238.8 706.0,236.6 705.2,236.2 704.4,237.3 703.6,235.8 703.4,236.0 702.8,233.2 702.0,234.4 701.2,235.4 700.7,236.2 700.4,236.2 700.0,236.2 699.6,236.2 698.8,236.0 698.0,234.7 697.2,235.6 696.4,234.1 696.2,236.2 695.6,236.2 694.8,236.2 694.0,235.8 693.2,234.9 692.4,235.8 691.6,236.1 690.8,234.4 690.0,235.8 689.2,235.0 688.4,235.9 687.6,236.1 686.8,232.1 686.2,236.2 686.0,236.1 685.2,239.9 684.4,242.7 683.6,244.2 682.8,244.1 682.0,252.0 681.7,254.1 681.2,249.2 680.4,246.3 679.6,246.0 678.8,243.1 678.0,237.4 677.2,238.0 677.2,236.6 676.4,234.8 676.1,234.0 675.6,231.3 675.0,228.4 674.8,226.8 674.0,223.1 673.2,218.7 672.4,215.1 671.7,211.6 671.6,211.7 670.8,212.9 670.0,213.4 669.4,215.0 669.2,214.5 668.4,215.7 667.6,217.3 667.2,218.4 666.8,217.1 666.0,219.6 665.2,221.2 665.0,221.7 664.4,222.5 663.6,222.8 662.8,223.3 662.0,225.5 661.2,227.2 660.4,225.4 659.6,228.8 658.8,230.4 658.2,231.8 658.0,229.0 657.2,234.0 657.1,234.4 656.4,232.2 655.6,237.4 654.8,236.1 654.0,240.5 653.2,242.0 652.7,244.8 652.4,242.2 651.6,246.8 651.5,247.4 650.8,245.2 650.0,240.6 649.3,241.4 649.2,240.9 648.4,239.0 647.6,233.3 646.8,233.9 646.0,232.5 645.2,229.1 644.8,229.5 644.4,229.5 643.6,227.2 642.8,230.4 642.0,231.6 641.2,228.6 640.4,232.8 639.6,232.8 638.8,232.1 638.0,233.0 637.2,232.0 636.4,233.1 635.9,236.2 635.6,234.4 634.8,235.8 634.0,234.6 633.2,235.7 632.4,235.1 631.6,236.8 630.8,234.9 630.0,235.1 629.2,237.6 628.4,235.6 627.6,236.5 627.0,238.5 626.8,234.9 626.0,239.2 625.2,236.9 624.4,240.5 623.6,239.1 622.8,240.2 622.0,241.1 621.4,242.9 621.2,241.5 620.4,234.1 619.6,230.1 618.8,225.1 618.0,220.6 618.0,219.9 617.2,219.9 616.4,219.5 615.6,219.1 614.8,217.5 614.0,218.3 613.5,218.4 613.2,218.2 612.4,218.0 611.6,216.8 610.8,217.8 610.0,218.3 609.2,217.4 608.4,218.3 607.9,218.4 607.6,217.5 606.8,218.2 606.0,217.6 605.2,218.3 604.4,218.2 603.6,217.9 602.8,218.3 602.4,218.4 602.0,217.2 601.2,218.9 600.4,218.0 599.6,219.6 598.8,218.7 598.0,221.0 597.2,221.6 596.4,222.2 595.6,222.8 595.6,221.9 594.8,221.8 594.0,219.4 593.2,219.7 592.4,218.5 591.6,217.3 590.8,216.3 590.1,216.1 590.0,216.0 589.2,214.1 588.4,212.1 587.6,210.4 586.8,208.5 586.7,208.3 586.0,208.2 585.2,208.1 585.0,208.1 585.0,207.2 584.4,207.2 583.6,207.2 582.8,207.2 582.0,207.2 581.2,207.2 580.4,207.2 579.6,207.2 578.8,207.2 578.0,207.2 577.2,207.2 576.4,207.2 575.6,207.2 574.8,207.2 574.0,207.2 573.2,207.2 572.4,207.2 571.6,207.2 570.8,207.2 570.0,207.2 569.2,207.2 568.4,207.2 567.6,207.2 566.8,207.2 566.0,207.2 565.2,207.2 564.4,207.2 563.6,207.2 562.8,207.2 562.0,207.2 561.2,207.2 560.4,207.2 559.6,207.2 558.8,207.2 558.0,207.2 557.2,207.2 556.4,207.2 555.6,207.2 554.8,207.2 554.0,207.2 553.2,207.2 552.4,207.2 551.6,207.2 550.8,207.2 550.0,207.2 549.2,207.2 548.4,207.2 547.9,207.2 547.6,207.3 546.8,207.7 546.0,208.1 545.2,208.5 544.4,208.9 543.6,209.3 543.4,209.4 542.8,209.3 542.0,209.9 541.2,210.5 540.4,210.9 539.6,211.4 538.8,212.0 538.0,212.4 537.2,212.5 536.7,213.3 536.4,212.7 535.6,213.8 534.8,213.8 534.0,214.0 533.2,214.7 532.4,215.7 532.3,216.1 531.6,216.7 530.8,216.6 530.0,218.8 530.0,217.7 529.2,219.8 528.4,220.7 527.6,221.3 526.8,222.2 526.0,221.9 525.2,224.6 524.4,225.0 523.6,225.9 522.8,225.7 522.0,225.6 521.2,229.4 521.1,229.5 520.4,227.4 519.6,232.2 518.8,233.7 518.0,234.2 517.2,236.8 516.6,237.9 516.4,238.3 515.6,237.6 514.8,238.5 514.0,242.7 513.2,239.9 512.4,245.6 512.1,246.3 511.6,243.1 510.8,244.7 510.0,242.9 509.9,243.8 509.2,242.9 508.4,239.4 507.6,241.1 506.8,235.5 506.0,235.4 505.2,238.0 504.4,234.7 503.6,236.5 503.2,236.2 502.8,234.4 502.0,234.2 501.2,233.1 500.4,234.0 499.6,232.9 498.8,232.2 498.0,232.2 497.2,230.8 496.4,229.3 495.6,229.2 494.8,229.6 494.3,229.5 494.0,229.7 493.2,231.1 492.4,232.2 491.6,231.9 490.8,234.2 490.0,232.3 489.2,236.1 488.4,237.0 487.6,235.2 487.6,239.3 486.8,239.5 486.0,241.5 485.2,241.5 484.4,240.5 483.6,243.6 482.8,246.2 482.0,245.9 482.0,247.4 481.2,240.4 480.4,232.3 479.7,227.3 479.6,224.2 478.8,217.9 478.0,212.5 477.5,208.3 477.2,208.6 476.4,209.3 475.6,209.9 474.8,210.8 474.1,211.6 474.0,211.6 473.2,211.0 472.4,210.5 471.9,210.5 471.6,210.1 470.8,210.1 470.0,209.4 469.2,209.4 469.2,209.5 468.4,211.9 467.6,214.4 467.4,214.9 466.8,216.0 466.3,218.4 466.0,218.9 465.2,221.4 465.2,221.7 464.4,222.0 463.6,224.7 462.8,225.8 462.0,228.4 461.8,231.8 461.2,230.5 460.4,230.7 459.6,233.8 458.8,233.9 458.0,233.0 457.2,235.0 456.4,233.6 456.2,237.4 455.6,236.0 454.8,234.1 454.0,235.6 453.2,232.5 452.4,232.2 451.8,234.0 451.6,232.8 450.8,232.8 450.0,232.5 449.5,232.3 449.2,231.3 448.4,231.4 447.6,230.7 446.8,227.1 446.0,228.2 445.2,228.4 444.4,228.5 443.6,227.7 442.8,227.3 442.8,227.3 442.0,227.8 441.2,226.4 440.4,227.9 439.6,229.4 439.5,229.5 438.8,230.0 438.0,229.8 437.2,228.6 436.4,230.7 436.1,231.8 435.6,231.5 434.8,232.5 434.0,233.3 433.9,233.4 433.2,230.4 432.4,231.7 431.6,234.2 430.8,235.3 430.0,235.7 429.2,233.3 428.4,236.7 427.6,236.2 427.2,238.5 426.8,231.9 426.0,226.9 425.6,225.0 425.2,220.9 424.4,212.8 423.8,207.8 423.6,207.9 422.8,208.1 422.0,208.2 421.6,208.3 421.2,209.0 420.4,210.2 419.6,211.3 418.8,212.5 418.2,214.2 418.0,214.2 417.2,215.8 417.1,216.1 416.4,216.1 415.6,217.8 414.8,219.1 414.0,220.8 413.8,221.5 413.2,221.6 412.4,222.1 411.6,222.9 411.5,225.1 410.8,224.4 410.0,224.0 409.3,226.9 409.2,225.6 408.4,225.2 407.6,227.4 406.8,225.8 406.0,227.9 405.2,229.0 404.8,230.6 404.4,227.7 403.6,228.4 402.8,231.7 402.0,230.9 401.2,231.0 400.4,230.0 399.6,233.4 398.8,233.3 398.6,234.0 398.0,232.1 397.2,229.2 396.4,226.6 395.9,225.1 395.6,222.6 394.8,215.3 394.0,209.9 393.6,207.2 393.2,207.2 392.4,207.2 391.6,207.2 390.8,207.2 390.0,207.2 389.2,207.2 388.4,207.2 387.6,207.2 386.8,207.2 386.0,207.2 385.2,207.2 384.4,207.2 383.6,207.2 382.8,207.2 382.0,207.2 381.2,207.2 380.4,207.2 379.6,207.2 378.8,207.2 378.0,207.2 377.2,207.2 376.4,207.2 375.6,207.2 374.8,207.2 374.0,207.2 373.2,207.2 372.4,207.2 371.6,207.2 370.8,207.2 370.0,207.2 369.2,207.2 368.4,207.2 367.6,207.2 366.8,207.2 366.0,207.2 365.2,207.2 364.4,207.2 363.6,207.2 362.8,207.2 362.0,207.2 361.2,207.2 360.4,207.2 359.6,207.2 358.8,207.2 358.0,207.2 357.2,207.2 356.4,207.2 355.6,207.2 354.8,207.2 354.0,207.2 353.2,207.2 352.4,207.2 351.6,207.2 350.8,207.2 350.0,207.2 349.2,207.2 348.4,207.2 347.6,207.2 346.8,207.2 346.0,207.2 345.2,207.2 344.4,207.2 343.6,207.2 342.8,207.2 342.0,207.2Z" fill="#f9e27a"/></g>
  <g clip-path="url(#cd)"><path d="M342.0,394.0 342.2,394.0 342.8,394.0 343.6,394.0 344.4,394.0 345.2,394.0 346.0,394.0 346.8,394.0 347.6,394.0 348.4,394.0 349.2,394.0 350.0,394.0 350.8,394.0 351.6,394.0 352.4,394.0 353.2,394.0 354.0,393.9 354.8,393.9 355.6,393.9 356.4,393.9 357.2,393.9 358.0,393.9 358.8,393.9 359.6,393.9 360.4,393.9 361.2,393.9 362.0,393.9 362.8,393.9 363.6,393.9 364.4,393.9 365.2,393.9 366.0,393.8 366.8,393.8 367.6,393.8 368.4,393.8 369.2,393.8 370.0,393.8 370.8,393.8 371.6,393.8 372.4,393.8 373.2,393.8 374.0,393.8 374.8,393.8 375.6,393.8 376.4,393.8 377.2,393.7 378.0,393.7 378.8,393.7 379.6,393.7 380.4,393.7 381.2,393.7 382.0,393.7 382.8,393.7 383.6,393.7 384.4,393.7 385.2,393.7 386.0,393.7 386.8,393.7 387.6,393.7 388.4,393.7 389.2,393.6 390.0,393.6 390.8,393.6 391.6,393.6 392.4,393.6 393.2,393.6 394.0,393.6 394.8,393.6 394.8,393.4 395.6,387.4 396.4,380.6 397.2,373.4 397.7,368.1 398.0,370.6 398.8,369.1 399.6,371.0 400.4,369.4 401.2,372.7 402.0,372.9 402.8,371.5 403.6,371.4 404.4,371.7 404.8,371.5 405.2,374.5 406.0,373.1 406.8,372.7 407.1,372.9 407.6,374.7 408.4,373.9 409.2,374.5 410.0,374.8 410.8,375.5 411.6,377.3 412.4,378.5 413.2,376.7 413.8,377.1 414.0,376.2 414.8,372.1 415.6,365.7 416.4,364.7 417.1,355.8 417.2,356.5 418.0,355.8 418.2,355.4 418.8,355.5 419.6,356.4 420.4,354.9 420.5,354.7 421.2,357.7 422.0,357.2 422.8,361.7 423.6,359.3 424.4,363.0 424.9,361.0 425.2,363.4 426.0,366.7 426.1,362.5 426.8,364.9 427.2,363.0 427.6,365.5 428.4,364.6 429.2,364.2 430.0,364.3 430.8,364.7 431.6,367.5 431.7,364.8 432.4,369.3 433.2,367.3 433.9,367.6 434.0,370.8 434.8,368.7 435.6,372.2 436.1,370.4 436.4,373.1 437.2,374.1 438.0,375.3 438.8,377.1 439.6,380.2 440.4,380.7 441.2,384.2 441.7,383.8 442.0,384.2 442.8,386.3 443.3,386.0 443.6,369.6 444.0,350.2 444.4,351.2 445.2,355.8 446.0,352.1 446.8,352.5 447.3,352.9 447.6,353.2 448.4,353.9 449.2,354.9 449.5,354.7 450.0,355.5 450.8,360.4 451.6,357.5 452.4,360.0 453.2,361.0 454.0,363.7 454.8,363.6 455.6,364.6 456.2,363.6 456.4,364.3 457.2,365.0 458.0,365.9 458.8,364.6 459.6,364.7 460.4,360.4 461.2,360.6 462.0,361.6 462.8,357.1 463.0,356.9 463.6,357.3 464.4,357.7 465.2,358.1 465.2,358.1 466.0,360.4 466.8,363.5 467.4,359.2 467.6,363.9 468.4,361.0 469.2,363.2 470.0,366.0 470.8,366.0 471.6,366.4 471.9,366.6 472.4,368.9 473.2,372.4 474.0,373.2 474.1,370.3 474.8,369.2 475.6,368.6 476.4,365.4 477.2,364.7 478.0,365.1 478.8,360.8 479.6,362.3 480.4,358.0 480.8,355.8 481.2,358.1 482.0,357.1 482.8,357.6 483.6,357.3 484.4,362.4 485.2,358.3 485.3,358.1 486.0,358.9 486.8,361.8 487.6,362.2 488.4,363.2 489.2,363.0 490.0,367.9 490.8,365.5 491.6,365.5 492.0,365.9 492.4,366.8 493.2,368.7 494.0,372.9 494.8,371.8 495.6,373.5 496.4,375.8 497.2,377.4 497.6,377.1 498.0,370.6 498.8,361.9 499.2,350.3 499.6,351.3 500.4,353.3 501.0,354.1 501.2,354.9 502.0,358.5 502.8,359.8 503.6,364.3 504.4,365.6 505.2,364.1 505.4,363.6 506.0,364.3 506.8,359.8 507.6,359.9 507.7,356.9 508.4,358.8 509.2,358.7 510.0,355.9 510.8,359.3 511.0,354.7 511.6,356.5 512.1,356.5 512.4,361.3 513.2,361.8 514.0,360.0 514.8,361.6 515.6,362.0 516.4,363.7 516.6,363.6 517.2,363.6 518.0,363.9 518.8,364.7 518.9,363.1 519.6,363.0 520.4,366.0 521.2,366.5 522.0,362.9 522.8,365.9 523.6,363.3 524.4,362.0 525.2,365.4 525.5,361.4 526.0,362.6 526.8,363.0 527.6,360.5 528.4,357.1 529.2,356.6 530.0,354.8 530.8,355.1 531.6,356.6 532.3,351.4 532.4,353.8 533.2,359.3 534.0,362.9 534.8,365.1 535.6,367.1 536.4,369.1 536.7,370.3 537.2,372.9 538.0,372.2 538.8,373.4 539.6,373.8 540.4,373.4 541.2,373.7 542.0,377.1 542.8,375.9 543.6,378.1 544.4,376.2 545.2,378.6 545.7,377.1 546.0,377.7 546.8,379.9 547.6,380.9 548.4,382.7 549.2,383.9 550.0,385.1 550.8,385.6 551.6,387.4 552.4,388.2 552.4,388.3 553.2,388.8 554.0,389.3 554.8,389.7 555.6,390.4 556.4,390.8 557.2,391.2 558.0,391.1 558.8,391.7 559.6,391.9 560.4,392.2 561.2,392.6 561.3,392.7 562.0,392.7 562.8,392.8 563.6,392.8 564.4,392.9 565.2,392.9 566.0,392.9 566.8,393.0 567.6,393.0 568.4,393.0 569.2,393.1 570.0,393.1 570.8,393.2 571.6,393.2 572.4,393.2 573.2,393.3 574.0,393.3 574.8,393.3 575.6,393.4 576.4,393.4 577.2,393.5 578.0,393.5 578.8,393.5 579.6,393.6 580.4,393.6 581.2,393.7 582.0,393.7 582.8,393.7 583.6,393.8 584.4,393.8 584.8,393.8 585.0,393.2 585.0,393.0 585.2,393.0 586.0,392.8 586.7,392.7 586.8,392.5 587.6,391.7 588.4,390.4 589.2,388.4 590.0,387.0 590.8,385.6 591.6,384.2 592.4,384.3 593.2,382.2 594.0,379.9 594.8,378.6 595.6,377.6 595.6,377.1 596.4,377.9 597.2,380.5 598.0,380.6 598.8,380.4 599.6,381.4 600.4,383.1 601.2,382.6 602.0,383.6 602.4,383.8 602.8,385.1 603.6,383.9 604.4,383.8 605.2,383.9 606.0,383.9 606.8,383.8 606.8,383.8 607.6,383.8 608.4,384.6 609.2,384.1 610.0,384.0 610.8,385.1 611.6,383.8 612.4,384.5 613.2,383.9 614.0,384.1 614.8,383.8 615.6,383.8 616.4,384.5 617.2,385.1 618.0,384.5 618.0,383.7 618.8,372.9 619.6,362.8 619.8,355.9 620.4,357.1 621.2,359.4 622.0,357.2 622.8,359.8 623.6,361.3 624.4,358.4 625.2,360.5 626.0,358.3 626.8,358.6 627.6,363.8 628.4,360.2 629.2,359.9 630.0,359.8 630.8,360.4 631.4,360.3 631.6,360.4 632.4,363.0 633.2,363.9 634.0,361.2 634.8,365.7 635.6,363.8 636.4,364.5 637.2,361.8 638.0,366.3 638.8,362.2 639.2,362.2 639.6,364.9 640.4,362.5 640.4,363.5 641.2,362.0 642.0,362.1 642.8,360.7 643.6,360.0 644.4,360.4 645.2,361.4 646.0,360.6 646.8,357.5 647.6,357.7 648.4,360.1 649.2,360.8 650.0,360.3 650.8,358.7 651.5,353.6 651.6,357.2 652.4,357.8 653.2,361.0 654.0,360.4 654.8,362.6 655.6,366.4 656.4,364.6 657.2,366.1 658.0,368.6 658.2,368.1 658.8,368.9 659.6,370.0 660.4,371.1 661.2,374.6 662.0,373.3 662.8,374.7 663.6,375.3 664.4,376.6 665.0,377.1 665.2,377.1 666.0,377.1 666.8,372.9 667.2,372.0 667.6,371.1 668.4,371.5 669.2,369.5 669.4,367.0 670.0,366.5 670.8,364.8 671.6,364.3 672.4,362.3 673.2,362.3 674.0,358.3 674.8,355.1 675.6,353.1 676.4,351.4 677.2,352.0 678.0,349.0 678.4,346.9 678.8,348.4 679.6,348.3 680.4,349.3 681.2,352.7 682.0,353.0 682.8,352.3 683.6,358.0 684.4,355.3 685.1,354.7 685.2,358.7 686.0,362.3 686.8,364.6 687.6,368.6 688.4,373.2 689.2,375.4 689.5,377.0 690.0,379.6 690.8,380.5 691.6,381.3 692.4,383.2 692.9,383.7 693.2,377.2 694.0,350.7 694.0,350.3 694.8,354.3 695.6,359.2 696.4,363.0 697.2,362.1 698.0,363.9 698.8,366.2 699.6,371.7 700.4,372.7 700.7,372.6 701.2,372.5 702.0,370.3 702.8,366.8 703.6,365.8 704.4,359.9 705.2,357.0 705.2,357.7 706.0,359.9 706.8,356.0 707.6,356.0 708.4,355.8 709.2,358.0 710.0,357.3 710.8,353.5 711.6,353.0 712.4,353.4 713.2,355.0 714.0,351.6 714.1,351.4 714.8,353.1 715.6,357.7 716.4,358.2 717.2,361.8 718.0,361.5 718.8,361.9 719.6,365.4 719.7,363.6 720.4,363.6 720.8,362.8 721.2,366.1 722.0,362.0 722.8,364.6 723.6,364.4 724.4,360.3 725.2,359.6 725.3,359.2 726.0,358.3 726.8,360.6 727.6,358.8 728.4,356.7 729.2,355.3 729.8,352.5 730.0,353.6 730.8,350.5 731.6,352.8 732.4,350.9 733.2,350.2 734.0,344.7 734.3,343.5 734.8,350.8 735.6,353.5 736.4,356.1 737.2,359.3 738.0,365.9 738.7,365.9 738.8,367.5 739.6,368.0 740.4,369.8 741.0,369.1 741.2,369.8 742.0,370.6 742.8,373.7 743.6,372.9 744.4,375.1 745.2,375.2 746.0,376.4 746.5,377.1 746.8,379.4 747.6,382.3 748.4,385.7 749.2,390.0 749.9,392.6 750.0,391.3 750.8,374.4 751.6,358.7 752.1,346.9 752.4,348.8 753.2,349.8 754.0,353.7 754.8,355.4 755.6,359.6 756.4,359.1 757.2,359.6 758.0,362.4 758.8,363.8 758.9,363.6 759.6,364.0 760.4,364.3 761.2,367.4 762.0,365.0 762.8,365.8 763.6,368.5 764.4,367.2 765.2,365.6 765.5,365.0 766.0,365.1 766.8,365.4 767.6,365.4 768.4,367.5 769.2,367.5 770.0,369.4 770.0,365.9 770.8,369.9 771.6,371.6 772.4,372.6 773.2,375.4 774.0,374.4 774.5,374.8 774.8,376.1 775.6,377.7 775.6,377.0 776.4,376.7 777.2,374.2 778.0,373.0 778.8,371.4 779.6,370.1 780.4,368.1 781.2,365.9 782.0,367.0 782.8,367.5 783.6,366.5 784.4,369.9 785.2,369.2 786.0,366.3 786.8,368.7 787.6,367.2 788.4,367.2 789.2,367.0 790.0,367.4 790.8,366.3 791.6,367.3 792.4,369.8 793.2,366.6 794.0,367.3 794.6,365.9 794.8,369.2 795.6,366.9 796.4,367.3 797.2,367.5 798.0,366.9 798.8,367.1 799.6,369.3 800.4,366.9 801.2,368.7 801.3,365.9 802.0,368.8 802.8,368.6 803.6,370.3 804.4,371.1 805.2,371.5 806.0,373.9 806.8,373.4 807.6,375.2 808.0,374.8 808.4,374.8 809.2,375.9 810.0,373.5 810.8,373.4 811.6,374.1 812.4,371.4 813.2,372.5 814.0,370.3 814.8,372.4 815.6,370.3 816.4,367.5 817.0,367.0 817.2,367.3 818.0,368.7 818.8,369.4 819.2,369.0 819.6,371.3 820.4,370.0 821.2,371.9 822.0,371.4 822.8,372.1 823.6,374.0 824.4,375.4 825.2,374.6 825.9,374.8 826.0,376.9 826.8,377.1 827.6,378.2 828.4,377.5 829.2,377.6 830.0,376.8 830.8,379.2 831.6,377.7 832.4,379.1 833.2,378.3 834.0,378.7 834.8,379.6 835.6,379.7 836.0,379.6 836.0,382.3 836.4,383.2 837.2,381.8 838.0,381.4 838.8,382.6 839.6,380.6 840.4,381.7 841.2,379.9 842.0,379.3 842.8,379.4 843.6,378.9 844.4,378.4 845.2,378.2 846.0,377.4 846.4,377.1 846.8,379.6 847.6,377.3 848.4,377.1 849.2,378.7 850.0,378.0 850.8,377.4 851.6,377.7 852.4,378.4 853.2,378.7 854.0,378.0 854.8,379.3 855.4,377.1 855.6,377.5 856.4,380.3 857.2,380.1 858.0,381.6 858.8,382.6 859.6,385.3 860.4,385.3 860.9,386.0 861.2,385.9 862.0,385.4 862.8,384.8 863.6,384.4 864.3,383.8 864.4,384.8 865.2,383.4 866.0,382.9 866.8,382.8 867.6,381.1 868.4,382.5 869.2,380.4 869.9,379.3 870.0,380.5 870.8,378.4 871.6,377.3 872.4,377.0 873.2,375.3 874.0,374.5 874.8,376.2 875.5,372.6 875.6,373.3 876.4,374.7 877.2,373.1 878.0,374.2 878.8,371.1 879.6,373.5 880.4,370.6 881.2,372.0 882.0,371.7 882.2,369.2 882.8,369.5 883.6,370.5 884.4,370.2 884.4,370.1 885.2,370.5 886.0,374.1 886.8,371.0 887.6,372.2 888.4,373.6 889.2,372.1 890.0,375.3 890.8,373.9 891.1,372.6 891.6,373.1 892.4,373.5 893.2,372.4 894.0,371.7 894.8,373.1 895.6,372.3 896.4,371.4 897.2,372.5 897.8,370.6 898.0,370.5 898.8,370.8 899.6,372.9 900.4,370.6 901.2,369.6 902.0,370.7 902.3,369.2 902.8,371.8 903.6,371.0 904.4,372.6 905.2,373.3 906.0,373.6 906.8,374.4 906.8,376.8 907.6,375.5 908.4,377.6 909.0,377.1 909.2,377.3 910.0,376.4 910.8,375.5 911.6,374.8 912.4,376.6 913.2,374.1 914.0,373.7 914.8,372.0 915.6,371.5 916.4,371.7 917.2,370.2 918.0,369.2 918.0,369.3 918.8,372.9 919.6,369.8 920.4,372.5 921.2,370.6 922.0,369.8 922.8,372.2 923.6,371.7 924.4,370.1 925.2,370.1 926.0,371.6 926.8,370.9 926.9,370.4 927.6,373.0 928.4,370.5 929.2,370.4 930.0,373.3 930.8,371.7 931.6,370.5 932.4,371.0 933.2,370.5 933.6,370.4 934.0,373.4 934.8,374.4 935.6,374.7 936.4,374.7 937.2,375.9 938.0,378.6 938.1,377.1 938.8,379.8 939.6,380.6 940.3,379.3 940.4,380.4 941.2,380.3 942.0,381.4 942.5,381.5 942.8,382.2 943.6,380.9 944.4,380.2 945.2,379.9 946.0,378.6 946.8,376.0 947.6,374.1 948.4,373.7 949.2,372.6 949.2,371.5 950.0,370.5 950.8,369.5 951.5,368.1 951.6,368.4 952.4,369.7 953.2,371.4 954.0,371.9 954.8,369.1 955.6,370.6 956.4,369.3 957.2,372.3 958.0,369.5 958.8,370.0 959.6,372.9 960.4,370.3 961.2,370.1 962.0,372.8 962.7,370.4 962.8,370.8 963.6,372.9 964.4,370.9 965.2,370.4 966.0,370.5 966.8,373.4 967.6,372.3 968.4,370.8 969.2,372.2 970.0,370.8 970.8,370.5 971.6,373.5 971.6,370.4 972.4,372.0 973.2,370.1 974.0,371.5 974.8,369.8 975.6,370.1 976.4,368.0 977.2,367.7 978.0,368.2 978.8,370.2 979.6,366.5 980.4,369.7 980.5,365.9 981.2,367.5 982.0,371.8 982.8,372.1 983.6,374.2 984.4,376.1 985.2,377.3 986.0,379.5 986.8,380.5 987.3,381.5 987.6,382.7 988.4,384.5 989.2,387.2 990.0,388.6 990.8,390.8 991.6,392.4 991.7,392.7 992.4,392.8 993.2,392.8 994.0,392.9 994.8,392.9 995.6,393.0 996.4,393.0 997.2,393.1 998.0,393.1 998.4,393.2 998.8,393.1 999.6,393.1 1000.4,393.1 1001.2,393.0 1002.0,393.0 1002.8,393.0 1003.6,392.9 1004.4,392.9 1005.2,392.9 1006.0,392.8 1006.8,392.8 1007.6,392.8 1008.4,392.7 1009.2,392.7 1010.0,392.6 1010.8,392.6 1011.6,392.6 1012.4,392.5 1013.2,392.5 1014.0,392.5 1014.8,392.4 1015.6,392.4 1016.4,392.4 1017.2,392.3 1018.0,392.3 1018.8,392.3 1019.6,392.2 1020.4,392.2 1021.2,392.2 1022.0,392.1 1022.8,392.1 1023.6,392.1 1024.4,392.0 1025.2,392.2 1026.0,392.1 1026.8,392.3 1027.6,392.1 1028.4,391.9 1029.2,391.8 1030.0,392.0 1030.8,392.1 1031.6,391.8 1032.4,392.1 1033.2,391.7 1034.0,392.0 1034.2,391.6 1034.8,390.1 1035.6,388.5 1036.4,386.0 1037.2,384.4 1038.0,381.8 1038.8,379.7 1039.6,378.4 1039.8,377.1 1040.4,369.0 1041.2,358.4 1042.0,347.6 1042.5,333.5 1042.8,342.4 1043.6,345.0 1044.4,354.0 1045.2,363.8 1046.0,371.0 1046.5,372.6 1046.8,373.8 1047.6,379.4 1048.4,380.5 1048.7,381.5 1049.2,382.4 1050.0,382.9 1050.8,383.0 1051.6,382.3 1052.4,381.9 1053.2,383.4 1054.0,381.5 1054.8,381.6 1055.4,381.5 1055.6,382.3 1056.4,377.2 1057.2,372.9 1057.7,370.3 1058.0,368.9 1058.8,365.3 1059.6,362.0 1059.9,360.3 1060.4,365.0 1061.0,360.8 1061.2,364.2 1062.0,363.7 1062.8,365.0 1063.6,362.5 1064.4,362.5 1065.2,363.6 1066.0,363.3 1066.8,363.6 1067.6,364.9 1067.7,363.6 1068.4,363.6 1069.2,363.6 1070.0,366.3 1070.8,366.4 1071.6,363.6 1072.4,363.2 1073.2,366.8 1074.0,363.1 1074.8,364.6 1075.6,362.7 1076.4,366.5 1076.7,362.5 1077.2,362.7 1078.0,362.9 1078.8,367.3 1078.9,362.9 1079.6,363.3 1080.4,365.5 1081.2,363.4 1082.0,364.0 1082.8,366.3 1083.4,363.6 1083.6,364.4 1084.4,364.4 1085.2,363.3 1085.6,363.1 1086.0,364.2 1086.8,363.8 1087.6,364.1 1088.4,362.7 1089.2,362.4 1090.0,362.2 1090.8,361.9 1091.6,361.8 1092.4,365.2 1092.4,426.7 1091.6,426.0 1090.8,426.8 1090.0,422.9 1089.2,425.9 1088.4,425.6 1087.6,425.2 1086.8,424.1 1086.0,421.3 1085.6,424.0 1085.2,420.1 1084.4,422.0 1083.6,424.4 1083.4,424.7 1082.8,424.7 1082.0,425.0 1081.2,422.0 1080.4,423.9 1079.6,424.1 1078.9,426.2 1078.8,426.0 1078.0,426.0 1077.2,423.2 1076.7,425.8 1076.4,425.2 1075.6,422.4 1074.8,425.1 1074.0,423.7 1073.2,422.6 1072.4,422.9 1071.6,424.8 1070.8,424.6 1070.0,424.1 1069.2,423.3 1068.4,422.2 1067.7,424.0 1067.6,422.1 1066.8,424.8 1066.0,425.1 1065.2,426.4 1064.4,425.0 1063.6,427.4 1062.8,427.5 1062.0,429.5 1061.2,430.5 1061.0,430.7 1060.4,425.9 1059.9,424.0 1059.6,420.4 1058.8,417.3 1058.0,415.5 1057.7,415.8 1057.2,415.2 1056.4,411.8 1055.6,411.6 1055.4,412.8 1054.8,412.8 1054.0,412.0 1053.2,412.0 1052.4,412.3 1051.6,410.4 1050.8,412.6 1050.0,410.5 1049.2,412.3 1048.7,412.8 1048.4,413.4 1047.6,415.1 1046.8,416.4 1046.5,417.3 1046.0,418.3 1045.2,427.6 1044.4,435.8 1043.6,443.3 1042.8,452.1 1042.5,455.3 1042.0,440.8 1041.2,432.6 1040.4,419.6 1039.8,412.8 1039.6,410.3 1038.8,410.1 1038.0,406.8 1037.2,405.1 1036.4,403.0 1035.6,400.8 1034.8,399.2 1034.2,397.6 1034.0,397.6 1033.2,397.6 1032.4,397.6 1031.6,397.6 1030.8,397.6 1030.0,397.6 1029.2,397.6 1028.4,397.6 1027.6,397.5 1026.8,397.5 1026.0,397.5 1025.2,397.5 1024.4,397.5 1023.6,397.5 1022.8,397.5 1022.0,397.5 1021.2,397.5 1020.4,397.5 1019.6,397.4 1018.8,397.4 1018.0,397.4 1017.2,397.4 1016.4,397.4 1015.6,397.4 1014.8,397.4 1014.0,397.4 1013.2,397.4 1012.4,397.4 1011.6,397.3 1010.8,397.3 1010.0,397.3 1009.2,397.3 1008.4,397.3 1007.6,397.3 1006.8,397.3 1006.0,397.3 1005.2,397.3 1004.4,397.3 1003.6,397.2 1002.8,397.2 1002.0,397.2 1001.2,397.2 1000.4,397.2 999.6,397.2 998.8,397.2 998.4,397.2 998.0,397.2 997.2,397.4 996.4,397.5 995.6,397.6 994.8,397.8 994.0,397.9 993.2,397.8 992.4,398.0 991.7,398.3 991.6,398.5 990.8,400.7 990.0,402.2 989.2,404.8 988.4,407.4 987.6,409.6 987.3,410.6 986.8,410.5 986.0,411.5 985.2,414.5 984.4,414.8 983.6,417.3 982.8,417.5 982.0,421.1 981.2,422.2 980.5,424.0 980.4,423.9 979.6,423.2 978.8,419.8 978.0,422.7 977.2,421.1 976.4,421.4 975.6,421.3 974.8,419.1 974.0,420.5 973.2,419.2 972.4,419.8 971.6,419.5 971.6,417.6 970.8,418.4 970.0,417.1 969.2,416.7 968.4,417.7 967.6,417.1 966.8,416.4 966.0,418.8 965.2,419.1 964.4,416.8 963.6,419.3 962.8,419.4 962.7,419.5 962.0,417.0 961.2,419.5 960.4,419.4 959.6,418.1 958.8,417.9 958.0,419.1 957.2,419.5 956.4,417.2 955.6,419.5 954.8,419.1 954.0,419.5 953.2,419.5 952.4,419.5 951.6,418.9 951.5,419.5 950.8,419.5 950.0,418.1 949.2,419.5 949.2,418.9 948.4,419.1 947.6,418.5 946.8,418.8 946.0,418.2 945.2,418.4 944.4,416.4 943.6,418.1 942.8,415.5 942.5,417.9 942.0,417.3 941.2,417.3 940.4,415.7 940.3,417.3 939.6,417.0 938.8,417.6 938.1,418.0 938.0,415.9 937.2,417.4 936.4,418.6 935.6,418.9 934.8,419.1 934.0,419.1 933.6,419.5 933.2,418.2 932.4,417.1 931.6,416.5 930.8,417.6 930.0,414.1 929.2,413.7 928.4,414.7 927.6,415.2 926.9,415.1 926.8,414.8 926.0,415.6 925.2,416.1 924.4,415.6 923.6,415.5 922.8,415.7 922.0,418.1 921.2,418.5 920.4,416.9 919.6,418.3 918.8,418.5 918.0,420.3 918.0,420.6 917.2,419.7 916.4,418.4 915.6,417.4 914.8,418.7 914.0,418.6 913.2,418.2 912.4,416.8 911.6,417.2 910.8,417.1 910.0,415.5 909.2,413.9 909.0,416.2 908.4,415.6 907.6,414.3 906.8,413.6 906.8,415.1 906.0,413.4 905.2,415.3 904.4,414.6 903.6,414.6 902.8,417.0 902.3,417.3 902.0,416.2 901.2,417.6 900.4,417.9 899.6,418.4 898.8,419.0 898.0,417.8 897.8,419.5 897.2,417.7 896.4,417.6 895.6,416.6 894.8,418.6 894.0,418.1 893.2,417.3 892.4,419.3 891.6,417.6 891.1,419.5 890.8,419.4 890.0,417.5 889.2,419.4 888.4,419.0 887.6,419.1 886.8,419.5 886.0,419.1 885.2,416.6 884.4,419.5 884.4,417.8 883.6,418.4 882.8,418.7 882.2,418.4 882.0,418.1 881.2,417.9 880.4,415.7 879.6,417.0 878.8,415.1 878.0,415.5 877.2,414.5 876.4,413.9 875.6,414.8 875.5,415.1 874.8,412.5 874.0,412.1 873.2,413.2 872.4,412.1 871.6,411.7 870.8,411.2 870.0,409.2 869.9,410.6 869.2,410.0 868.4,408.8 867.6,408.7 866.8,407.3 866.0,406.7 865.2,406.7 864.4,405.3 864.3,406.1 863.6,404.6 862.8,402.7 862.0,401.2 861.2,399.9 860.9,399.4 860.4,400.6 859.6,402.6 858.8,404.2 858.0,405.6 857.2,407.8 856.4,410.1 855.6,412.2 855.4,412.8 854.8,411.7 854.0,410.7 853.2,412.0 852.4,411.8 851.6,410.3 850.8,410.0 850.0,410.8 849.2,410.1 848.4,411.1 847.6,410.0 846.8,409.6 846.4,410.6 846.0,409.8 845.2,409.4 844.4,410.2 843.6,410.0 842.8,408.4 842.0,409.1 841.2,409.7 840.4,409.4 839.6,408.9 838.8,407.6 838.0,409.2 837.2,407.2 836.4,408.8 836.0,408.9 836.0,409.6 835.6,409.4 834.8,410.5 834.0,410.7 833.2,410.2 832.4,411.1 831.6,413.3 830.8,413.9 830.0,414.6 829.2,414.1 828.4,415.3 827.6,415.8 826.8,417.4 826.0,418.2 825.9,418.2 825.2,418.3 824.4,419.3 823.6,420.0 822.8,420.6 822.0,421.1 821.2,422.2 820.4,422.9 819.6,423.5 819.2,424.0 818.8,420.4 818.0,420.2 817.2,418.6 817.0,422.2 816.4,418.7 815.6,420.7 814.8,420.1 814.0,416.4 813.2,419.2 812.4,416.3 811.6,417.9 810.8,416.5 810.0,416.4 809.2,415.8 808.4,415.3 808.0,415.1 807.6,415.2 806.8,415.0 806.0,414.7 805.2,415.7 804.4,417.2 803.6,419.5 802.8,418.1 802.0,420.1 801.3,421.8 801.2,418.0 800.4,419.2 799.6,421.4 798.8,421.9 798.0,421.5 797.2,419.8 796.4,421.5 795.6,422.2 794.8,422.5 794.6,422.5 794.0,420.9 793.2,420.7 792.4,422.8 791.6,422.8 790.8,420.6 790.0,422.9 789.2,422.9 788.4,423.2 787.6,423.3 786.8,422.0 786.0,420.3 785.2,423.0 784.4,420.4 783.6,420.3 782.8,421.2 782.0,421.3 781.2,424.0 780.4,420.1 779.6,421.8 778.8,420.5 778.0,424.0 777.2,422.3 776.4,424.0 775.6,424.0 775.6,423.6 774.8,423.5 774.5,424.0 774.0,422.8 773.2,424.3 772.4,424.5 771.6,422.8 770.8,421.5 770.0,425.1 770.0,421.9 769.2,425.3 768.4,422.0 767.6,424.6 766.8,425.9 766.0,422.6 765.5,426.2 765.2,426.1 764.4,423.9 763.6,428.4 762.8,426.5 762.0,427.0 761.2,428.6 760.4,427.8 759.6,431.5 758.9,434.1 758.8,433.8 758.0,432.8 757.2,434.6 756.4,432.3 755.6,436.7 754.8,438.6 754.0,437.0 753.2,440.6 752.4,439.1 752.1,441.9 751.6,431.2 750.8,414.3 750.0,401.2 749.9,399.5 749.2,401.2 748.4,403.2 747.6,405.7 746.8,407.8 746.5,408.6 746.0,408.4 745.2,411.6 744.4,414.3 743.6,413.9 742.8,418.5 742.0,419.6 741.2,422.3 741.0,424.0 740.4,425.0 739.6,428.4 738.8,429.8 738.7,431.4 738.0,431.8 737.2,436.0 736.4,438.6 735.6,440.7 734.8,443.3 734.3,446.3 734.0,440.8 733.2,439.5 732.4,438.5 731.6,437.5 730.8,434.8 730.0,431.5 729.8,433.0 729.2,429.3 728.4,431.2 727.6,430.0 726.8,429.0 726.0,424.6 725.3,427.3 725.2,427.1 724.4,422.9 723.6,424.9 722.8,422.7 722.0,421.4 721.2,420.3 720.8,421.8 720.4,422.3 719.7,424.8 719.6,423.3 718.8,426.2 718.0,424.9 717.2,431.4 716.4,433.5 715.6,432.4 714.8,434.1 714.1,439.6 714.0,436.5 713.2,432.8 712.4,437.4 711.6,433.0 710.8,435.8 710.0,432.9 709.2,433.7 708.4,429.4 707.6,429.3 706.8,431.2 706.0,426.6 705.2,429.1 705.2,430.7 704.4,428.1 703.6,430.3 702.8,431.0 702.0,433.7 701.2,434.6 700.7,435.2 700.4,434.2 699.6,435.1 698.8,431.7 698.0,437.8 697.2,436.1 696.4,434.9 695.6,440.3 694.8,438.7 694.0,441.9 694.0,441.5 693.2,438.4 692.9,438.0 692.4,436.1 691.6,433.0 690.8,430.6 690.0,426.7 689.5,426.2 689.2,426.1 688.4,427.2 687.6,428.1 686.8,430.0 686.0,429.2 685.2,428.5 685.1,432.5 684.4,432.3 683.6,434.3 682.8,435.3 682.0,434.0 681.2,437.4 680.4,436.3 679.6,434.5 678.8,441.1 678.4,441.9 678.0,437.2 677.2,440.0 676.4,437.8 675.6,432.6 674.8,431.6 674.0,434.8 673.2,432.1 672.4,429.7 671.6,431.1 670.8,427.7 670.0,426.7 669.4,427.6 669.2,425.8 668.4,425.7 667.6,420.9 667.2,424.0 666.8,420.4 666.0,419.8 665.2,421.6 665.0,423.4 664.4,419.5 663.6,421.3 662.8,422.2 662.0,421.3 661.2,421.8 660.4,421.1 659.6,420.6 658.8,421.8 658.2,421.8 658.0,420.2 657.2,422.9 656.4,423.2 655.6,424.4 654.8,427.0 654.0,429.4 653.2,430.1 652.4,432.2 651.6,433.2 651.5,435.2 650.8,429.6 650.0,434.3 649.2,431.4 648.4,433.5 647.6,433.0 646.8,431.7 646.0,427.4 645.2,428.7 644.4,431.3 643.6,430.8 642.8,429.4 642.0,429.8 641.2,428.3 640.4,429.0 640.4,429.1 639.6,428.1 639.2,428.5 638.8,428.4 638.0,426.7 637.2,428.3 636.4,427.1 635.6,428.4 634.8,426.3 634.0,428.4 633.2,425.9 632.4,423.9 631.6,424.4 631.4,428.5 630.8,428.6 630.0,427.9 629.2,428.3 628.4,428.4 627.6,429.2 626.8,427.5 626.0,429.5 625.2,429.5 624.4,429.3 623.6,429.5 622.8,430.1 622.0,429.8 621.2,427.0 620.4,428.2 619.8,430.7 619.6,428.3 618.8,418.9 618.0,409.5 618.0,408.6 617.2,409.1 616.4,407.8 615.6,407.5 614.8,409.2 614.0,409.1 613.2,407.8 612.4,407.4 611.6,408.7 610.8,406.8 610.0,406.9 609.2,406.7 608.4,407.0 607.6,407.8 606.8,408.4 606.8,407.5 606.0,407.5 605.2,407.2 604.4,408.8 603.6,407.2 602.8,409.2 602.4,409.2 602.0,408.1 601.2,409.4 600.4,409.0 599.6,408.0 598.8,409.9 598.0,410.1 597.2,410.3 596.4,410.4 595.6,410.6 595.6,408.9 594.8,409.7 594.0,407.7 593.2,408.0 592.4,406.3 591.6,406.8 590.8,406.1 590.0,404.3 589.2,404.3 588.4,403.9 587.6,402.9 586.8,402.5 586.7,402.4 586.0,401.3 585.2,400.3 585.0,400.9 585.0,396.7 584.8,396.3 584.4,396.3 583.6,396.3 582.8,396.4 582.0,396.4 581.2,396.4 580.4,396.4 579.6,396.5 578.8,396.5 578.0,396.5 577.2,396.6 576.4,396.6 575.6,396.6 574.8,396.7 574.0,396.7 573.2,396.7 572.4,396.8 571.6,396.8 570.8,396.8 570.0,396.8 569.2,396.9 568.4,396.9 567.6,396.9 566.8,397.0 566.0,397.0 565.2,397.0 564.4,397.1 563.6,397.1 562.8,397.1 562.0,397.2 561.3,397.2 561.2,397.2 560.4,397.4 559.6,397.6 558.8,397.8 558.0,397.6 557.2,398.2 556.4,398.4 555.6,398.6 554.8,398.3 554.0,398.8 553.2,399.1 552.4,399.3 552.4,399.4 551.6,400.6 550.8,402.0 550.0,403.2 549.2,404.6 548.4,405.0 547.6,406.5 546.8,408.6 546.0,409.7 545.7,410.6 545.2,408.9 544.4,410.2 543.6,412.0 542.8,413.4 542.0,414.2 541.2,415.1 540.4,415.8 539.6,416.3 538.8,415.1 538.0,416.3 537.2,417.2 536.7,419.5 536.4,420.3 535.6,420.3 534.8,426.5 534.0,431.1 533.2,433.8 532.4,436.2 532.3,438.5 531.6,432.6 530.8,434.0 530.0,429.7 529.2,432.1 528.4,430.2 527.6,429.1 526.8,425.2 526.0,426.9 525.5,426.2 525.2,425.8 524.4,423.9 523.6,421.7 522.8,421.1 522.0,422.5 521.2,420.8 520.4,418.1 519.6,420.1 518.9,419.5 518.8,416.6 518.0,420.6 517.2,420.6 516.6,424.8 516.4,425.1 515.6,427.0 514.8,429.0 514.0,430.5 513.2,431.8 512.4,434.4 512.1,435.2 511.6,429.4 511.0,434.1 510.8,430.4 510.0,433.0 509.2,431.6 508.4,429.5 507.7,430.7 507.6,429.5 506.8,430.4 506.0,429.9 505.4,433.7 505.2,433.3 504.4,434.2 503.6,434.9 502.8,435.8 502.0,435.8 501.2,439.1 501.0,439.6 500.4,431.4 499.6,428.5 499.2,426.2 498.8,422.2 498.0,417.3 497.6,417.3 497.2,417.8 496.4,418.7 495.6,418.8 494.8,419.1 494.0,421.3 493.2,422.1 492.4,423.1 492.0,424.0 491.6,423.8 490.8,424.3 490.0,425.5 489.2,426.3 488.4,427.0 487.6,426.8 486.8,429.1 486.0,427.4 485.3,430.7 485.2,429.9 484.4,428.4 483.6,430.1 482.8,430.0 482.0,432.1 481.2,431.2 480.8,432.9 480.4,432.1 479.6,426.1 478.8,429.2 478.0,426.0 477.2,425.0 476.4,426.0 475.6,423.2 474.8,420.4 474.1,422.9 474.0,422.2 473.2,419.3 472.4,417.1 471.9,419.5 471.6,420.0 470.8,421.0 470.0,422.0 469.2,423.9 468.4,421.7 467.6,426.7 467.4,427.0 466.8,425.5 466.0,424.9 465.2,428.3 465.2,430.7 464.4,430.0 463.6,429.9 463.0,429.6 462.8,429.5 462.0,429.0 461.2,426.0 460.4,427.5 459.6,425.8 458.8,425.3 458.0,426.0 457.2,426.4 456.4,425.1 456.2,426.2 455.6,426.5 454.8,427.4 454.0,428.4 453.2,428.7 452.4,431.0 451.6,430.7 450.8,432.4 450.0,435.1 449.5,436.3 449.2,436.6 448.4,434.9 447.6,439.0 447.3,439.6 446.8,436.4 446.0,428.6 445.2,425.2 444.4,424.1 444.0,421.8 443.6,417.4 443.3,417.0 442.8,411.9 442.0,406.8 441.7,406.1 441.2,406.8 440.4,409.0 439.6,410.9 438.8,412.4 438.0,414.2 437.2,416.2 436.4,417.7 436.1,418.9 435.6,418.8 434.8,420.4 434.0,423.3 433.9,424.0 433.2,421.1 432.4,423.0 431.7,424.7 431.6,424.4 430.8,425.0 430.0,424.0 429.2,425.5 428.4,425.3 427.6,425.6 427.2,426.2 426.8,424.9 426.1,424.0 426.0,422.6 425.2,420.6 424.9,421.8 424.4,422.1 423.6,422.8 422.8,422.4 422.0,425.7 421.2,424.7 420.5,429.2 420.4,428.3 419.6,428.3 418.8,427.6 418.2,432.9 418.0,430.9 417.2,427.9 417.1,427.9 416.4,424.6 415.6,420.6 414.8,417.1 414.0,413.8 413.8,412.8 413.2,412.8 412.4,413.8 411.6,413.8 410.8,414.4 410.0,416.6 409.2,415.9 408.4,417.7 407.6,418.5 407.1,419.5 406.8,418.6 406.0,418.4 405.2,418.3 404.8,420.1 404.4,419.8 403.6,420.3 402.8,418.3 402.0,417.7 401.2,418.6 400.4,419.3 399.6,420.1 398.8,421.0 398.0,420.4 397.7,421.8 397.2,415.1 396.4,410.4 395.6,402.7 394.8,397.0 394.8,396.7 394.0,396.7 393.2,396.7 392.4,396.7 391.6,396.7 390.8,396.7 390.0,396.7 389.2,396.7 388.4,396.7 387.6,396.7 386.8,396.7 386.0,396.7 385.2,396.6 384.4,396.6 383.6,396.6 382.8,396.6 382.0,396.6 381.2,396.6 380.4,396.6 379.6,396.6 378.8,396.6 378.0,396.6 377.2,396.6 376.4,396.6 375.6,396.6 374.8,396.6 374.0,396.6 373.2,396.5 372.4,396.5 371.6,396.5 370.8,396.5 370.0,396.5 369.2,396.5 368.4,396.5 367.6,396.5 366.8,396.5 366.0,396.5 365.2,396.5 364.4,396.5 363.6,396.5 362.8,396.5 362.0,396.5 361.2,396.4 360.4,396.4 359.6,396.4 358.8,396.4 358.0,396.4 357.2,396.4 356.4,396.4 355.6,396.4 354.8,396.4 354.0,396.4 353.2,396.4 352.4,396.4 351.6,396.4 350.8,396.4 350.0,396.3 349.2,396.3 348.4,396.3 347.6,396.3 346.8,396.3 346.0,396.3 345.2,396.3 344.4,396.3 343.6,396.3 342.8,396.3 342.2,396.3 342.0,396.3Z" fill="#484652"/><path d="M356.0,393.9 356.8,393.9 357.6,393.8 357.9,393.8 358.4,393.8 359.2,393.8 360.0,393.8 360.8,393.8 361.6,393.8 362.4,393.7 363.2,393.7 364.0,393.7 364.8,393.7 365.6,393.7 366.4,393.7 367.2,393.6 368.0,393.6 368.8,393.6 369.6,393.6 370.4,393.6 371.2,393.6 372.0,393.6 372.8,393.5 373.6,393.5 374.4,393.5 375.2,393.5 376.0,393.5 376.8,393.5 377.6,393.5 378.4,393.4 379.2,393.4 380.0,393.4 380.8,393.4 381.6,393.4 382.4,393.4 383.2,393.3 384.0,393.3 384.8,393.3 385.6,393.3 386.4,393.3 387.2,393.3 388.0,393.3 388.8,393.2 389.6,393.2 390.4,393.2 391.2,393.2 392.0,393.2 392.8,393.2 393.6,393.2 393.6,393.2 394.4,393.2 395.2,393.2 396.0,393.3 396.8,393.3 397.6,393.4 398.4,393.4 399.2,393.4 400.0,393.5 400.8,393.5 401.6,393.6 402.4,393.6 403.2,393.6 404.0,393.7 404.8,393.7 405.6,393.8 406.4,393.8 407.2,393.8 408.0,393.9 408.8,393.9 409.6,394.0 410.4,394.0 411.2,394.0 411.5,394.0 412.0,390.9 412.8,384.8 413.6,378.6 413.8,377.1 414.4,373.7 415.2,370.8 416.0,366.0 416.8,358.4 417.1,355.8 417.6,355.7 418.2,355.4 418.4,356.1 419.2,359.4 420.0,354.9 420.5,354.7 420.8,355.6 421.6,358.2 422.4,361.3 423.2,362.0 424.0,367.3 424.8,367.1 424.9,366.6 425.6,368.8 426.4,370.6 427.2,372.6 427.2,374.0 428.0,375.0 428.8,376.3 429.6,378.4 430.4,380.8 431.2,380.6 432.0,383.4 432.8,384.0 433.6,385.5 434.4,387.0 435.2,389.1 436.0,390.6 436.1,390.5 436.8,391.5 437.6,391.5 438.4,392.2 439.2,392.4 440.0,392.9 440.8,393.5 441.6,394.0 441.7,394.0 442.4,381.1 443.2,365.0 444.0,350.2 444.0,351.0 444.8,351.3 445.6,356.0 446.4,358.1 447.2,354.2 447.3,352.9 448.0,354.7 448.8,355.8 449.5,354.7 449.6,355.6 450.4,356.0 451.2,356.9 452.0,358.1 452.8,360.8 453.6,363.9 454.4,362.5 455.2,362.5 456.0,365.2 456.2,363.6 456.8,367.2 457.6,365.7 458.4,364.8 459.2,360.7 460.0,364.1 460.8,360.3 461.6,358.6 462.4,357.5 463.0,356.9 463.2,360.1 464.0,357.7 464.8,360.4 465.2,358.1 465.6,362.6 466.4,358.7 467.2,363.4 467.4,359.2 468.0,363.5 468.8,363.9 469.6,364.4 470.4,364.2 471.2,366.9 471.9,366.6 472.0,368.4 472.8,369.1 473.6,372.2 474.1,370.4 474.4,373.3 475.2,374.4 476.0,378.0 476.8,380.1 477.6,381.2 478.4,383.4 479.2,384.8 480.0,387.3 480.8,389.9 480.8,389.5 481.6,391.8 482.0,392.7 482.4,392.7 483.2,392.8 484.0,392.9 484.8,392.9 485.3,393.0 485.6,393.0 486.4,393.1 487.2,393.1 487.6,393.2 488.0,393.2 488.8,393.2 489.6,393.2 490.4,393.2 491.2,393.2 492.0,393.2 492.8,393.2 493.6,393.2 494.4,393.2 495.2,393.2 496.0,393.2 496.5,393.2 496.8,388.8 497.6,376.8 498.4,363.4 499.2,350.3 499.2,350.8 500.0,353.9 500.8,354.2 501.0,354.1 501.6,355.5 502.4,357.3 503.2,363.6 504.0,363.7 504.8,362.7 505.4,363.6 505.6,364.5 506.4,366.0 507.2,364.8 508.0,364.4 508.8,364.9 509.6,367.8 510.4,364.7 511.2,367.6 512.0,365.7 512.1,365.0 512.8,365.1 513.6,365.5 514.4,368.8 515.2,366.1 516.0,368.0 516.6,365.9 516.8,368.0 517.6,367.0 518.4,367.7 519.2,367.1 520.0,365.5 520.8,365.5 521.6,363.4 522.4,363.5 523.2,363.0 524.0,362.9 524.8,363.4 525.5,361.4 525.6,364.2 526.4,361.5 527.2,361.6 528.0,361.9 528.8,358.2 529.6,355.7 530.4,355.6 531.2,353.0 532.0,355.1 532.3,351.4 532.8,357.8 533.6,360.2 534.4,362.0 535.2,364.5 536.0,369.3 536.7,370.3 536.8,371.0 537.6,372.6 538.4,373.3 539.2,372.7 540.0,372.9 540.8,373.4 541.6,375.0 542.4,377.1 543.2,375.9 544.0,377.5 544.8,376.6 545.6,377.4 545.7,377.1 546.4,380.0 547.2,379.6 548.0,381.0 548.8,382.7 549.6,383.6 550.4,385.7 551.2,386.7 552.0,388.1 552.4,388.2 552.8,388.9 553.6,389.2 554.4,389.4 555.2,390.0 556.0,390.2 556.8,390.6 557.6,390.8 558.4,391.5 559.2,391.9 560.0,392.0 560.8,392.4 561.3,392.7 561.6,392.7 562.4,392.8 563.2,392.8 564.0,392.8 564.8,392.9 565.6,392.9 566.4,392.9 567.2,393.0 568.0,393.0 568.8,393.0 569.6,393.1 570.4,393.1 571.2,393.2 572.0,393.2 572.8,393.2 573.6,393.3 574.4,393.3 575.2,393.3 576.0,393.4 576.8,393.4 577.6,393.4 578.4,393.5 579.2,393.5 580.0,393.6 580.8,393.6 581.6,393.6 582.4,393.7 583.2,393.7 584.0,393.7 584.8,393.8 585.0,393.8 585.0,393.7 585.6,393.7 586.4,393.6 587.2,393.6 588.0,393.6 588.8,393.6 589.6,393.6 590.4,393.5 591.2,393.5 592.0,393.5 592.8,393.5 593.6,393.5 594.4,393.4 595.2,393.4 596.0,393.4 596.8,393.4 597.6,393.3 598.4,393.3 599.2,393.3 600.0,393.3 600.8,393.3 601.6,393.2 602.4,393.2 603.2,393.2 604.0,393.2 604.6,393.2 604.8,392.6 605.6,390.5 606.4,388.6 607.2,387.2 608.0,384.9 608.8,383.2 609.1,381.5 609.6,382.8 610.4,380.2 611.2,379.5 612.0,380.4 612.8,378.0 613.5,377.1 613.6,377.1 614.4,378.7 615.2,378.3 616.0,378.9 616.8,379.7 617.6,380.1 618.4,381.0 619.2,381.8 620.0,382.8 620.8,382.9 621.6,383.4 622.4,384.0 622.5,383.8 623.2,383.7 624.0,383.8 624.7,383.2 624.8,383.2 625.6,383.2 626.4,383.4 627.2,382.8 628.0,382.7 628.8,383.8 629.6,382.1 630.4,383.4 631.2,383.0 631.4,381.5 632.0,381.2 632.8,379.9 633.6,376.9 634.4,374.4 635.2,374.7 636.0,371.1 636.8,368.6 637.6,369.3 638.4,365.2 639.2,363.1 639.2,362.5 640.0,363.6 640.8,364.5 641.6,365.0 642.4,367.4 643.2,366.8 644.0,368.6 644.8,368.1 645.6,369.7 646.4,370.3 647.1,370.4 647.2,370.6 648.0,370.3 648.8,372.3 649.6,370.3 650.4,369.7 651.2,372.6 652.0,369.5 652.8,369.6 653.6,369.4 654.4,369.1 655.2,369.1 656.0,371.1 656.0,368.1 656.8,369.5 657.6,371.3 658.4,372.4 659.2,374.6 660.0,374.5 660.8,377.2 661.6,378.5 662.4,378.1 662.7,378.2 663.2,379.1 664.0,381.9 664.8,381.3 665.0,381.5 665.6,379.8 666.4,378.7 667.2,374.3 667.2,374.5 668.0,374.6 668.8,370.6 669.4,367.0 669.6,368.0 670.4,371.0 671.2,370.6 672.0,371.9 672.8,369.8 673.6,371.5 673.9,370.7 674.4,371.3 675.2,372.0 676.0,372.5 676.1,372.6 676.8,376.1 677.6,374.1 678.4,377.2 679.2,375.9 680.0,377.9 680.8,377.8 681.6,378.1 682.4,380.6 683.2,380.2 684.0,382.0 684.8,381.3 685.1,381.5 685.6,383.4 686.4,384.6 687.2,386.9 688.0,387.8 688.8,389.1 689.5,390.5 689.6,390.2 690.4,382.8 691.2,375.6 692.0,368.5 692.8,363.0 693.6,355.2 694.0,350.3 694.4,351.7 695.2,357.3 696.0,361.9 696.8,362.5 697.6,367.3 698.4,369.8 699.2,370.5 700.0,373.0 700.7,374.8 700.8,375.3 701.6,375.7 702.4,375.5 703.2,376.2 704.0,377.8 704.8,377.2 705.6,376.7 706.4,377.0 707.2,377.8 707.4,377.1 708.0,376.8 708.8,375.5 709.6,373.6 710.4,373.9 711.2,371.3 712.0,372.0 712.8,369.4 713.6,367.2 714.1,365.9 714.4,366.4 715.2,371.2 716.0,371.2 716.8,371.8 717.6,373.0 718.4,375.8 719.2,377.6 720.0,377.6 720.8,379.7 720.8,379.3 721.6,376.0 722.4,373.7 723.2,370.3 724.0,365.8 724.8,365.0 725.3,359.2 725.6,361.0 726.4,359.7 727.2,356.9 728.0,359.5 728.8,356.4 729.6,353.3 729.8,352.5 730.4,355.9 731.2,359.0 732.0,359.9 732.8,363.8 733.6,365.3 734.3,365.9 734.4,369.6 735.2,369.3 736.0,372.3 736.8,375.9 737.6,378.3 738.4,382.9 739.2,384.3 740.0,387.0 740.8,390.1 741.0,390.5 741.6,391.0 742.4,391.7 743.2,391.7 744.0,392.1 744.8,392.5 745.6,392.9 746.4,393.4 747.2,393.8 747.7,394.0 748.0,390.6 748.8,382.7 749.6,374.0 750.4,365.3 751.2,356.8 752.0,348.8 752.1,346.9 752.8,349.1 753.6,351.6 754.4,355.8 755.2,361.1 756.0,359.4 756.6,361.4 756.8,361.7 757.6,363.2 758.4,368.2 758.9,365.1 759.2,369.8 760.0,367.6 760.8,368.6 761.6,370.3 762.4,371.4 763.2,375.5 763.3,372.6 764.0,375.0 764.8,378.6 765.6,380.1 766.4,380.3 767.2,382.5 767.8,383.8 768.0,385.7 768.8,386.8 769.6,388.3 770.0,389.4 770.4,390.1 771.2,390.2 772.0,390.2 772.3,389.9 772.8,390.3 773.6,390.2 774.4,390.7 774.5,390.5 775.2,388.2 776.0,385.1 776.7,382.3 776.8,382.4 777.6,379.2 778.4,377.6 779.2,373.3 780.0,370.7 780.8,371.0 781.2,365.9 781.6,368.5 782.4,368.7 783.2,369.9 784.0,366.8 784.8,366.8 785.6,368.1 786.4,369.3 787.2,368.3 788.0,371.0 788.8,368.3 789.6,368.3 790.1,368.1 790.4,368.0 791.2,367.6 792.0,368.1 792.8,367.7 793.6,366.6 794.4,366.2 794.6,365.9 795.2,370.0 796.0,369.6 796.8,374.8 797.6,374.7 798.4,376.7 799.2,379.2 800.0,380.9 800.8,382.8 801.3,383.8 801.6,384.3 802.4,385.1 803.2,384.8 804.0,385.9 804.8,386.4 805.6,386.3 805.8,386.0 806.4,386.2 807.2,383.6 808.0,382.9 808.8,381.7 809.6,381.0 810.4,378.5 811.2,377.8 812.0,378.2 812.8,374.4 813.6,373.8 814.4,371.7 815.2,371.9 816.0,369.4 816.8,368.8 817.0,367.0 817.6,369.3 818.4,368.5 819.2,368.9 819.2,369.0 820.0,369.6 820.8,370.6 821.6,372.9 822.4,373.3 823.2,372.6 824.0,374.1 824.8,374.2 825.6,374.5 825.9,374.8 826.4,375.7 827.2,377.2 828.0,377.2 828.8,378.9 829.6,378.8 830.4,379.3 830.4,380.1 831.2,380.1 832.0,381.1 832.6,381.5 832.8,382.7 833.6,382.5 834.4,382.2 835.2,381.6 836.0,381.5 836.0,383.0 836.8,383.4 837.5,382.6 837.6,383.2 838.4,383.6 839.2,384.9 840.0,384.5 840.8,384.7 841.6,385.2 842.4,386.3 843.2,386.2 844.0,386.8 844.8,387.6 845.6,387.7 846.4,388.3 846.4,388.2 847.2,389.1 848.0,388.9 848.8,389.6 849.6,390.1 850.4,389.7 851.2,390.6 852.0,391.0 852.8,390.9 853.6,391.0 854.4,391.3 855.2,392.0 855.4,391.6 856.0,391.9 856.8,392.2 857.6,392.5 858.4,392.8 859.2,393.1 860.0,393.4 860.8,393.8 860.9,393.8 861.6,392.0 862.4,390.0 863.2,387.1 864.0,385.9 864.3,383.8 864.8,383.7 865.6,382.7 866.4,382.4 867.2,382.2 868.0,381.3 868.8,381.3 869.6,379.6 869.9,379.3 870.4,380.0 871.2,381.1 872.0,381.7 872.8,381.8 873.6,382.0 874.4,381.9 875.2,382.7 876.0,382.8 876.8,383.3 877.6,383.7 877.7,383.8 878.4,384.5 879.2,383.5 880.0,384.5 880.8,383.5 881.6,383.2 882.4,383.2 883.2,383.1 884.0,382.3 884.8,382.1 885.6,382.1 886.4,381.6 886.6,381.5 887.2,381.4 888.0,381.1 888.8,379.4 889.6,379.6 890.4,377.8 891.2,377.1 892.0,376.4 892.8,375.5 893.6,376.6 894.4,373.8 895.2,375.5 895.6,372.6 896.0,373.3 896.8,372.0 897.6,371.7 897.8,371.5 898.4,371.2 899.2,372.9 900.0,371.9 900.8,370.8 901.6,371.2 902.3,369.2 902.4,370.9 903.2,373.3 904.0,372.9 904.8,372.7 905.6,375.1 906.4,374.3 906.8,374.4 907.2,375.4 908.0,378.1 908.8,376.8 909.0,377.1 909.6,376.6 910.4,375.8 911.2,375.6 912.0,376.0 912.8,373.9 913.6,373.1 914.4,372.4 915.2,372.4 916.0,373.9 916.8,371.7 917.6,369.6 918.0,369.2 918.4,370.0 919.2,372.2 920.0,371.5 920.8,371.6 921.6,373.9 922.4,373.6 923.2,374.8 924.0,375.6 924.7,374.8 924.8,377.2 925.6,378.1 926.4,380.1 926.9,381.5 927.2,382.9 928.0,386.1 928.8,388.0 929.1,388.2 929.6,389.1 930.4,390.0 931.2,390.9 931.4,391.1 932.0,392.1 932.8,393.0 933.6,394.0 934.4,392.2 935.2,390.9 935.8,388.9 936.0,389.3 936.8,386.7 937.6,385.2 938.1,383.8 938.4,384.8 939.2,383.2 939.2,384.8 940.0,382.8 940.8,383.6 941.6,383.1 942.4,381.9 942.5,381.5 943.2,380.9 944.0,379.3 944.8,376.0 945.6,373.9 946.4,373.4 947.0,370.4 947.2,371.6 948.0,372.6 948.8,374.6 949.2,371.8 949.6,372.4 950.4,373.0 951.2,375.3 952.0,376.3 952.8,374.6 953.6,376.5 953.7,374.8 954.4,375.1 955.2,376.7 956.0,375.9 956.8,377.5 957.6,375.8 958.4,376.2 959.2,376.3 960.0,376.6 960.8,377.4 961.6,377.1 962.4,378.6 962.7,377.1 963.2,376.7 964.0,376.2 964.8,375.9 965.6,375.3 966.4,374.4 967.2,373.7 968.0,373.9 968.8,374.7 969.6,372.3 970.4,373.3 971.2,372.3 971.6,370.4 972.0,371.4 972.8,369.9 973.6,371.9 974.4,369.5 975.2,369.0 976.0,368.2 976.8,368.5 977.6,367.6 978.4,367.8 979.2,369.1 980.0,366.3 980.5,365.9 980.8,368.5 981.6,368.4 982.4,371.2 983.2,373.8 984.0,376.0 984.8,376.2 985.6,379.5 986.4,380.5 987.2,381.7 987.3,381.5 988.0,383.6 988.8,386.0 989.6,388.3 990.4,389.9 991.2,391.4 991.7,392.7 992.0,392.7 992.8,392.8 993.6,392.8 994.4,392.9 995.2,392.9 996.0,393.0 996.8,393.0 997.6,393.1 998.4,393.2 998.4,393.2 999.2,393.1 1000.0,393.1 1000.8,393.0 1001.6,393.0 1002.4,393.0 1003.2,392.9 1004.0,392.9 1004.8,392.9 1005.6,392.8 1006.4,392.8 1007.2,392.8 1008.0,392.7 1008.8,392.7 1009.6,392.7 1010.4,392.6 1011.2,392.6 1012.0,392.6 1012.8,392.5 1013.6,392.5 1014.4,392.5 1015.2,392.4 1016.0,392.4 1016.8,392.3 1017.6,392.3 1018.4,392.3 1019.2,392.2 1020.0,392.2 1020.8,392.2 1021.6,392.1 1022.4,392.1 1023.2,392.1 1024.0,392.0 1024.8,392.1 1025.6,392.0 1026.4,392.3 1027.2,391.9 1028.0,392.0 1028.8,392.1 1029.6,392.1 1030.4,391.8 1031.2,391.7 1032.0,391.7 1032.8,391.8 1033.6,391.6 1034.2,391.6 1034.4,391.8 1035.2,391.7 1036.0,392.0 1036.8,391.8 1037.6,392.2 1038.4,391.9 1039.2,392.1 1040.0,392.0 1040.8,392.0 1041.6,392.1 1042.4,392.1 1043.2,392.2 1044.0,392.2 1044.8,392.3 1045.6,392.3 1046.4,392.4 1047.2,392.4 1048.0,392.5 1048.8,392.5 1049.6,392.6 1050.4,392.6 1051.2,392.7 1052.0,392.7 1052.1,392.7 1052.8,392.2 1053.6,391.7 1054.4,391.7 1055.2,391.0 1055.4,390.5 1056.0,386.6 1056.6,380.4 1056.8,380.1 1057.6,371.7 1057.7,370.3 1058.4,367.9 1058.8,365.3 1059.2,365.2 1059.9,360.3 1060.0,364.0 1060.8,363.0 1061.0,363.6 1061.6,365.5 1062.4,371.5 1063.2,371.3 1064.0,373.7 1064.8,375.7 1065.5,377.1 1065.6,377.1 1066.4,378.4 1067.2,376.8 1068.0,379.1 1068.8,378.5 1069.6,376.6 1070.4,376.6 1071.2,376.2 1072.0,376.6 1072.8,377.5 1073.6,377.2 1074.4,375.6 1075.2,375.9 1076.0,376.2 1076.8,377.4 1077.6,375.7 1078.4,375.1 1078.9,374.8 1079.2,374.4 1080.0,374.1 1080.8,372.0 1081.6,371.1 1082.4,369.7 1083.2,371.4 1084.0,368.3 1084.8,367.1 1085.6,364.3 1085.6,363.7 1086.4,363.9 1087.2,363.2 1088.0,365.3 1088.8,365.7 1089.6,363.6 1090.4,364.8 1091.2,363.9 1092.0,362.1 1092.8,362.4 1092.8,427.1 1092.0,426.4 1091.2,426.0 1090.4,424.5 1089.6,425.8 1088.8,425.1 1088.0,425.4 1087.2,425.0 1086.4,424.5 1085.6,424.0 1085.6,421.2 1084.8,422.4 1084.0,420.5 1083.2,417.3 1082.4,417.2 1081.6,417.1 1080.8,414.7 1080.0,413.3 1079.2,412.0 1078.9,412.8 1078.4,410.8 1077.6,411.1 1076.8,410.7 1076.0,412.8 1075.2,412.6 1074.4,413.2 1073.6,412.0 1072.8,413.7 1072.0,412.1 1071.2,411.5 1070.4,414.2 1069.6,414.2 1068.8,413.0 1068.0,414.6 1067.2,414.7 1066.4,413.7 1065.6,414.7 1065.5,415.1 1064.8,416.1 1064.0,420.1 1063.2,420.0 1062.4,422.1 1061.6,428.5 1061.0,430.7 1060.8,426.1 1060.0,421.7 1059.9,424.0 1059.2,419.2 1058.8,417.3 1058.4,414.0 1057.7,408.4 1057.6,406.7 1056.8,401.3 1056.6,399.4 1056.0,399.1 1055.4,398.9 1055.2,398.3 1054.4,398.3 1053.6,397.9 1052.8,397.5 1052.1,397.2 1052.0,397.2 1051.2,397.2 1050.4,397.2 1049.6,397.2 1048.8,397.3 1048.0,397.3 1047.2,397.3 1046.4,397.3 1045.6,397.3 1044.8,397.4 1044.0,397.4 1043.2,397.4 1042.4,397.4 1041.6,397.4 1040.8,397.5 1040.0,397.5 1039.2,397.5 1038.4,397.5 1037.6,397.5 1036.8,397.6 1036.0,397.6 1035.2,397.6 1034.4,397.6 1034.2,397.6 1033.6,397.6 1032.8,397.6 1032.0,397.6 1031.2,397.6 1030.4,397.6 1029.6,397.6 1028.8,397.6 1028.0,397.5 1027.2,397.5 1026.4,397.5 1025.6,397.5 1024.8,397.5 1024.0,397.5 1023.2,397.5 1022.4,397.5 1021.6,397.5 1020.8,397.5 1020.0,397.4 1019.2,397.4 1018.4,397.4 1017.6,397.4 1016.8,397.4 1016.0,397.4 1015.2,397.4 1014.4,397.4 1013.6,397.4 1012.8,397.4 1012.0,397.3 1011.2,397.3 1010.4,397.3 1009.6,397.3 1008.8,397.3 1008.0,397.3 1007.2,397.3 1006.4,397.3 1005.6,397.3 1004.8,397.3 1004.0,397.2 1003.2,397.2 1002.4,397.2 1001.6,397.2 1000.8,397.2 1000.0,397.2 999.2,397.2 998.4,397.2 998.4,397.2 997.6,397.3 996.8,397.4 996.0,397.6 995.2,397.7 994.4,397.8 993.6,398.0 992.8,397.8 992.0,397.9 991.7,398.3 991.2,399.2 990.4,401.4 989.6,404.0 988.8,405.9 988.0,408.2 987.3,410.6 987.2,408.8 986.4,411.7 985.6,412.2 984.8,413.8 984.0,416.9 983.2,418.3 982.4,419.9 981.6,421.9 980.8,423.4 980.5,424.0 980.0,423.6 979.2,422.9 978.4,422.3 977.6,422.4 976.8,421.9 976.0,418.6 975.2,420.7 974.4,420.8 973.6,420.1 972.8,417.6 972.0,419.3 971.6,419.5 971.2,419.1 970.4,419.2 969.6,418.4 968.8,418.8 968.0,415.6 967.2,417.7 966.4,416.6 965.6,417.8 964.8,415.3 964.0,414.5 963.2,416.8 962.7,417.3 962.4,415.9 961.6,415.4 960.8,415.3 960.0,416.3 959.2,414.5 958.4,414.3 957.6,415.4 956.8,414.9 956.0,417.3 955.2,417.2 954.4,415.2 953.7,417.3 953.6,417.3 952.8,417.0 952.0,417.0 951.2,416.8 950.4,416.7 949.6,416.8 949.2,417.3 948.8,414.8 948.0,415.4 947.2,412.0 947.0,414.3 946.4,413.1 945.6,411.0 944.8,410.1 944.0,408.8 943.2,407.4 942.5,408.3 942.4,406.4 941.6,406.7 940.8,405.9 940.0,404.4 939.2,403.6 939.2,403.9 938.4,401.9 938.1,402.0 937.6,401.2 936.8,399.7 936.0,398.2 935.8,398.3 935.2,398.2 934.4,398.2 933.6,398.3 932.8,398.3 932.0,398.2 931.4,398.3 931.2,398.4 930.4,401.1 929.6,403.1 929.1,405.6 928.8,406.5 928.0,407.7 927.2,411.5 926.9,412.8 926.4,412.6 925.6,413.2 924.8,412.1 924.7,414.8 924.0,412.7 923.2,414.3 922.4,415.8 921.6,414.6 920.8,417.1 920.0,418.3 919.2,419.2 918.4,418.4 918.0,420.6 917.6,418.4 916.8,418.4 916.0,419.5 915.2,418.6 914.4,416.9 913.6,417.8 912.8,415.7 912.0,416.2 911.2,416.0 910.4,416.6 909.6,414.9 909.0,416.2 908.8,414.6 908.0,415.7 907.2,415.2 906.8,415.1 906.4,412.7 905.6,415.3 904.8,416.0 904.0,413.7 903.2,414.8 902.4,414.7 902.3,417.3 901.6,417.2 900.8,417.6 900.0,418.4 899.2,418.3 898.4,418.2 897.8,419.5 897.6,417.7 896.8,418.7 896.0,415.4 895.6,417.7 895.2,416.6 894.4,416.8 893.6,415.3 892.8,415.5 892.0,413.8 891.2,413.9 890.4,412.2 889.6,412.6 888.8,410.1 888.0,411.6 887.2,410.9 886.6,410.6 886.4,408.3 885.6,409.5 884.8,408.5 884.0,408.5 883.2,408.0 882.4,406.2 881.6,405.7 880.8,404.8 880.0,405.3 879.2,404.8 878.4,404.0 877.7,403.9 877.6,403.5 876.8,403.4 876.0,404.7 875.2,405.2 874.4,406.4 873.6,405.7 872.8,407.9 872.0,408.3 871.2,407.5 870.4,408.8 869.9,410.6 869.6,409.6 868.8,409.1 868.0,408.8 867.2,407.6 866.4,407.3 865.6,407.2 864.8,405.4 864.3,406.1 864.0,404.5 863.2,402.4 862.4,400.4 861.6,398.6 860.9,396.7 860.8,396.8 860.0,397.2 859.2,397.6 858.4,398.0 857.6,398.2 856.8,398.5 856.0,399.1 855.4,399.4 855.2,399.4 854.4,399.6 853.6,399.9 852.8,400.0 852.0,399.8 851.2,400.2 850.4,400.6 849.6,400.7 848.8,400.9 848.0,401.2 847.2,400.7 846.4,401.6 846.4,401.5 845.6,401.5 844.8,402.3 844.0,402.5 843.2,402.2 842.4,403.6 841.6,403.2 840.8,404.0 840.0,403.8 839.2,405.1 838.4,404.8 837.6,406.0 837.5,406.1 836.8,405.9 836.0,406.9 836.0,408.0 835.2,408.2 834.4,408.7 833.6,409.0 832.8,407.8 832.6,409.5 832.0,409.8 831.2,410.1 830.4,410.0 830.4,410.6 829.6,411.1 828.8,412.4 828.0,412.4 827.2,412.3 826.4,414.3 825.9,415.9 825.6,416.2 824.8,414.9 824.0,416.8 823.2,418.7 822.4,420.1 821.6,421.1 820.8,422.0 820.0,421.6 819.2,424.0 819.2,421.3 818.4,420.2 817.6,419.4 817.0,421.4 816.8,418.1 816.0,418.8 815.2,417.7 814.4,417.6 813.6,417.1 812.8,416.5 812.0,415.0 811.2,412.5 810.4,412.1 809.6,412.2 808.8,410.5 808.0,408.8 807.2,409.8 806.4,409.0 805.8,408.4 805.6,406.7 804.8,407.2 804.0,406.5 803.2,404.8 802.4,404.9 801.6,402.9 801.3,403.9 800.8,403.8 800.0,406.8 799.2,408.8 798.4,410.6 797.6,412.6 796.8,414.2 796.0,413.4 795.2,418.1 794.6,419.5 794.4,417.2 793.6,419.8 792.8,417.4 792.0,419.4 791.2,419.6 790.4,420.9 790.1,421.0 789.6,418.7 788.8,419.6 788.0,421.7 787.2,421.7 786.4,422.2 785.6,422.4 784.8,421.4 784.0,422.1 783.2,423.3 782.4,423.1 781.6,420.0 781.2,424.0 780.8,418.2 780.0,416.3 779.2,412.0 778.4,408.4 777.6,404.1 776.8,399.4 776.7,399.4 776.0,399.3 775.2,399.4 774.5,399.4 774.4,399.4 773.6,399.3 772.8,399.3 772.3,399.4 772.0,399.8 771.2,403.4 770.4,406.7 770.0,408.3 769.6,408.0 768.8,412.6 768.0,416.4 767.8,417.3 767.2,417.1 766.4,418.5 765.6,419.4 764.8,420.3 764.0,417.8 763.3,421.8 763.2,420.0 762.4,419.1 761.6,422.3 760.8,423.0 760.0,421.1 759.2,424.1 758.9,426.2 758.4,425.1 757.6,427.0 756.8,427.2 756.6,431.5 756.0,432.5 755.2,434.7 754.4,431.8 753.6,434.5 752.8,435.4 752.1,441.9 752.0,437.6 751.2,428.8 750.4,424.4 749.6,415.9 748.8,408.0 748.0,400.3 747.7,397.2 747.2,397.3 746.4,397.6 745.6,397.9 744.8,397.8 744.0,398.4 743.2,398.7 742.4,398.9 741.6,398.6 741.0,399.4 740.8,399.9 740.0,402.6 739.2,405.0 738.4,407.6 737.6,410.6 736.8,410.8 736.0,415.1 735.2,415.5 734.4,418.2 734.3,421.8 733.6,422.0 732.8,422.1 732.0,426.8 731.2,425.7 730.4,430.3 729.8,432.9 729.6,432.3 728.8,427.4 728.0,425.3 727.2,425.8 726.4,422.8 725.6,419.8 725.3,420.6 724.8,418.3 724.0,415.8 723.2,414.8 722.4,412.4 721.6,410.0 720.8,408.4 720.8,407.5 720.0,409.9 719.2,409.7 718.4,412.5 717.6,412.9 716.8,415.9 716.0,415.7 715.2,418.0 714.4,419.8 714.1,421.8 713.6,421.8 712.8,420.3 712.0,418.7 711.2,422.5 710.4,422.0 709.6,421.9 708.8,423.0 708.0,420.2 707.4,424.0 707.2,422.7 706.4,424.3 705.6,420.5 704.8,424.8 704.0,425.0 703.2,421.2 702.4,425.6 701.6,425.2 700.8,425.7 700.7,426.2 700.0,427.8 699.2,429.3 698.4,431.6 697.6,433.2 696.8,432.6 696.0,437.2 695.2,436.3 694.4,438.5 694.0,441.9 693.6,437.5 692.8,425.8 692.0,419.5 691.2,412.9 690.4,407.5 689.6,399.9 689.5,399.4 688.8,400.9 688.0,402.1 687.2,404.0 686.4,405.7 685.6,407.1 685.1,408.4 684.8,408.6 684.0,408.7 683.2,408.6 682.4,408.7 681.6,410.8 680.8,410.6 680.0,411.6 679.2,412.8 678.4,413.0 677.6,412.1 676.8,415.0 676.1,415.5 676.0,415.0 675.2,415.3 674.4,415.0 673.9,417.3 673.6,417.3 672.8,417.8 672.0,416.4 671.2,419.6 670.4,417.5 669.6,420.6 669.4,421.8 668.8,422.4 668.0,422.6 667.2,423.2 667.2,424.0 666.4,420.6 665.6,419.2 665.0,420.6 664.8,420.3 664.0,418.2 663.2,417.9 662.7,417.3 662.4,417.1 661.6,416.7 660.8,416.7 660.0,416.1 659.2,417.7 658.4,416.1 657.6,417.5 656.8,416.2 656.0,419.2 656.0,418.1 655.2,419.1 654.4,417.5 653.6,418.6 652.8,420.1 652.0,419.3 651.2,417.2 650.4,418.7 649.6,420.9 648.8,421.3 648.0,421.5 647.2,421.6 647.1,421.8 646.4,422.3 645.6,422.5 644.8,422.4 644.0,424.4 643.2,424.7 642.4,422.0 641.6,426.2 640.8,427.1 640.0,427.7 639.2,428.5 639.2,424.9 638.4,426.9 637.6,422.1 636.8,424.7 636.0,423.4 635.2,422.1 634.4,420.6 633.6,419.7 632.8,419.0 632.0,418.4 631.4,417.6 631.2,417.3 630.4,414.3 629.6,412.8 628.8,414.0 628.0,412.2 627.2,411.0 626.4,409.8 625.6,408.2 624.8,407.1 624.7,408.4 624.0,408.6 623.2,408.0 622.5,409.2 622.4,409.2 621.6,409.3 620.8,409.5 620.0,408.3 619.2,410.5 618.4,410.8 617.6,410.2 616.8,411.5 616.0,411.7 615.2,410.2 614.4,410.6 613.6,412.3 613.5,412.8 612.8,411.3 612.0,410.8 611.2,410.5 610.4,408.6 609.6,407.1 609.1,408.3 608.8,407.6 608.0,405.5 607.2,402.5 606.4,400.5 605.6,399.0 604.8,396.8 604.6,396.3 604.0,396.3 603.2,396.3 602.4,396.3 601.6,396.3 600.8,396.2 600.0,396.2 599.2,396.2 598.4,396.2 597.6,396.2 596.8,396.2 596.0,396.2 595.2,396.2 594.4,396.2 593.6,396.2 592.8,396.2 592.0,396.2 591.2,396.2 590.4,396.2 589.6,396.1 588.8,396.1 588.0,396.1 587.2,396.1 586.4,396.1 585.6,396.1 585.0,396.1 585.0,396.3 584.8,396.3 584.0,396.4 583.2,396.4 582.4,396.4 581.6,396.4 580.8,396.5 580.0,396.5 579.2,396.5 578.4,396.6 577.6,396.6 576.8,396.6 576.0,396.6 575.2,396.7 574.4,396.7 573.6,396.7 572.8,396.8 572.0,396.8 571.2,396.8 570.4,396.8 569.6,396.9 568.8,396.9 568.0,396.9 567.2,397.0 566.4,397.0 565.6,397.0 564.8,397.1 564.0,397.1 563.2,397.1 562.4,397.1 561.6,397.2 561.3,397.2 560.8,397.3 560.0,397.5 559.2,397.7 558.4,397.9 557.6,397.9 556.8,398.3 556.0,398.5 555.2,398.7 554.4,398.9 553.6,399.1 552.8,399.2 552.4,399.4 552.0,399.4 551.2,401.3 550.4,402.7 549.6,403.2 548.8,404.0 548.0,405.8 547.2,406.8 546.4,408.9 545.7,410.6 545.6,408.7 544.8,411.4 544.0,411.3 543.2,413.1 542.4,413.2 541.6,414.1 540.8,412.8 540.0,413.5 539.2,414.7 538.4,416.7 537.6,418.0 536.8,419.5 536.7,419.5 536.0,421.4 535.2,423.2 534.4,429.4 533.6,431.9 532.8,436.1 532.3,438.5 532.0,436.8 531.2,435.9 530.4,430.6 529.6,432.6 528.8,432.0 528.0,429.2 527.2,426.6 526.4,425.2 525.6,425.5 525.5,426.2 524.8,424.6 524.0,422.7 523.2,424.1 522.4,424.4 521.6,422.3 520.8,424.1 520.0,421.6 519.2,423.1 518.4,422.4 517.6,420.0 516.8,422.1 516.6,423.3 516.0,423.0 515.2,420.6 514.4,422.5 513.6,422.2 512.8,421.0 512.1,421.8 512.0,421.9 511.2,422.5 510.4,421.9 509.6,425.8 508.8,427.1 508.0,427.9 507.2,427.2 506.4,429.3 505.6,432.2 505.4,432.5 504.8,433.5 504.0,434.5 503.2,435.7 502.4,433.0 501.6,436.0 501.0,439.6 500.8,435.3 500.0,428.1 499.2,425.0 499.2,426.2 498.4,417.7 497.6,408.8 496.8,400.5 496.5,397.2 496.0,397.2 495.2,397.2 494.4,397.2 493.6,397.2 492.8,397.2 492.0,397.2 491.2,397.2 490.4,397.2 489.6,397.2 488.8,397.2 488.0,397.2 487.6,397.2 487.2,397.2 486.4,397.2 485.6,397.2 485.3,397.2 484.8,397.9 484.0,399.1 483.2,400.3 482.4,401.0 482.0,402.2 481.6,402.6 480.8,403.9 480.8,402.7 480.0,404.4 479.2,406.4 478.4,407.9 477.6,407.9 476.8,410.7 476.0,411.9 475.2,413.3 474.4,414.5 474.1,415.6 473.6,416.1 472.8,416.0 472.0,418.1 471.9,419.5 471.2,420.7 470.4,420.0 469.6,423.1 468.8,422.8 468.0,424.0 467.4,427.0 467.2,424.3 466.4,424.8 465.6,427.3 465.2,430.7 464.8,429.6 464.0,430.1 463.2,429.1 463.0,429.6 462.4,428.3 461.6,427.6 460.8,426.8 460.0,427.8 459.2,426.6 458.4,427.2 457.6,426.8 456.8,426.5 456.2,426.2 456.0,425.8 455.2,425.3 454.4,425.7 453.6,429.0 452.8,430.9 452.0,432.6 451.2,430.1 450.4,433.2 449.6,434.9 449.5,436.3 448.8,437.2 448.0,433.6 447.3,439.6 447.2,438.6 446.4,431.6 445.6,429.7 444.8,423.1 444.0,418.7 444.0,421.8 443.2,413.3 442.4,404.7 441.7,397.2 441.6,397.2 440.8,397.4 440.0,397.5 439.2,397.7 438.4,397.8 437.6,397.8 436.8,397.9 436.1,398.3 436.0,398.1 435.2,399.9 434.4,401.2 433.6,402.6 432.8,402.8 432.0,404.9 431.2,406.2 430.4,408.0 429.6,408.0 428.8,410.0 428.0,410.1 427.2,411.2 427.2,413.5 426.4,413.4 425.6,414.3 424.9,417.3 424.8,417.2 424.0,419.4 423.2,421.2 422.4,423.2 421.6,421.8 420.8,424.1 420.5,427.7 420.0,427.5 419.2,425.8 418.4,431.6 418.2,432.9 417.6,429.6 417.1,427.4 416.8,425.1 416.0,421.5 415.2,417.7 414.4,413.7 413.8,410.6 413.6,409.3 412.8,403.9 412.0,399.0 411.5,396.1 411.2,396.1 410.4,396.1 409.6,396.2 408.8,396.2 408.0,396.3 407.2,396.3 406.4,396.4 405.6,396.4 404.8,396.5 404.0,396.5 403.2,396.6 402.4,396.6 401.6,396.7 400.8,396.7 400.0,396.8 399.2,396.8 398.4,396.9 397.6,396.9 396.8,397.0 396.0,397.0 395.2,397.1 394.4,397.1 393.6,397.2 393.6,397.2 392.8,397.2 392.0,397.1 391.2,397.1 390.4,397.1 389.6,397.1 388.8,397.1 388.0,397.0 387.2,397.0 386.4,397.0 385.6,397.0 384.8,397.0 384.0,396.9 383.2,396.9 382.4,396.9 381.6,396.9 380.8,396.9 380.0,396.8 379.2,396.8 378.4,396.8 377.6,396.8 376.8,396.8 376.0,396.7 375.2,396.7 374.4,396.7 373.6,396.7 372.8,396.7 372.0,396.6 371.2,396.6 370.4,396.6 369.6,396.6 368.8,396.6 368.0,396.5 367.2,396.5 366.4,396.5 365.6,396.5 364.8,396.5 364.0,396.4 363.2,396.4 362.4,396.4 361.6,396.4 360.8,396.4 360.0,396.3 359.2,396.3 358.4,396.3 357.9,396.3 357.6,396.3 356.8,396.3 356.0,396.2Z" fill="#e99b52"/></g>
  <g clip-path="url(#co)"><path d="M349.0,583.0 349.8,583.0 350.6,583.0 351.4,583.0 352.2,583.0 353.0,583.0 353.8,583.0 354.6,583.0 355.4,583.0 356.2,583.0 357.0,582.9 357.8,582.9 358.6,582.9 359.4,582.9 360.2,582.9 361.0,582.9 361.8,582.9 362.6,582.9 363.4,582.9 364.2,582.9 365.0,582.9 365.8,582.9 366.6,582.9 367.4,582.9 368.2,582.9 369.0,582.9 369.8,582.8 370.6,582.8 371.4,582.8 372.2,582.8 373.0,582.8 373.8,582.8 374.6,582.8 375.4,582.8 376.2,582.8 377.0,582.8 377.8,582.8 378.6,582.8 379.4,582.8 380.2,582.8 381.0,582.8 381.8,582.8 382.6,582.7 383.4,582.7 384.2,582.7 385.0,582.7 385.8,582.7 386.6,582.7 387.4,582.7 388.2,582.7 389.0,582.7 389.8,582.7 390.6,582.7 391.4,582.7 392.2,582.7 393.0,582.7 393.8,582.7 394.6,582.7 395.4,582.7 396.2,582.6 397.0,582.6 397.8,582.6 398.6,582.6 399.4,582.6 400.2,582.6 401.0,582.6 401.8,582.6 402.6,582.6 403.4,582.6 403.5,582.6 404.2,575.8 405.0,568.9 405.6,561.4 405.8,562.2 406.6,559.1 407.4,554.9 407.8,553.0 408.2,554.5 409.0,552.0 409.8,551.7 410.6,554.8 411.4,550.2 412.2,553.8 413.0,549.1 413.8,549.3 414.6,551.6 415.4,551.6 416.2,549.9 416.2,546.6 417.0,546.3 417.8,547.6 418.6,546.5 419.4,546.3 420.2,545.1 420.5,544.5 421.0,545.7 421.8,548.9 422.6,553.0 423.4,554.1 424.2,554.4 425.0,552.7 425.8,553.9 426.6,554.7 426.8,555.1 427.4,559.9 428.2,560.1 429.0,561.1 429.8,562.6 430.6,563.9 431.4,566.6 432.2,568.0 433.0,571.4 433.2,569.9 433.8,564.2 434.6,559.7 435.3,550.8 435.4,551.4 436.2,549.8 437.0,549.0 437.8,551.4 438.6,546.8 439.4,547.4 440.2,547.3 441.0,546.2 441.8,543.9 442.6,545.1 443.4,543.9 444.2,540.8 444.8,539.2 445.0,540.3 445.8,541.5 445.9,540.2 446.6,541.7 447.4,545.8 448.2,542.7 449.0,543.5 449.8,544.6 450.1,544.5 450.6,546.1 451.4,546.2 452.2,546.1 453.0,545.7 453.8,545.3 454.6,545.2 455.4,545.4 456.2,547.3 457.0,546.1 457.8,547.0 458.6,546.5 459.4,549.9 460.2,546.8 461.0,551.5 461.8,546.4 462.6,550.7 462.8,546.6 463.4,546.8 464.2,546.7 465.0,546.9 465.8,548.4 466.6,549.7 467.0,546.6 467.4,550.2 468.2,548.4 469.0,552.7 469.8,552.3 470.6,553.2 471.4,553.7 472.2,554.4 473.0,557.1 473.8,556.8 474.6,558.0 475.4,559.3 475.5,559.3 476.2,560.4 477.0,562.4 477.6,562.7 477.8,563.0 478.6,566.8 479.4,567.6 480.2,567.0 480.8,567.8 481.0,570.2 481.8,570.3 482.6,571.2 483.4,572.2 484.2,573.7 485.0,575.3 485.8,577.2 486.6,577.9 487.4,579.7 488.2,580.5 488.2,580.4 489.0,569.2 489.8,558.5 490.3,548.7 490.6,548.5 491.4,549.1 492.2,547.3 493.0,546.5 493.8,550.2 494.6,544.8 495.4,543.9 496.2,543.2 497.0,542.0 497.8,543.8 498.6,545.3 498.8,540.2 499.4,541.1 500.2,542.0 501.0,546.3 501.8,547.3 502.6,545.4 503.0,544.5 503.4,545.9 504.2,545.7 505.0,547.5 505.1,546.6 505.8,548.8 506.6,551.3 507.4,548.2 508.2,547.5 509.0,549.2 509.8,552.1 510.6,548.3 511.4,548.0 512.2,550.8 513.0,548.3 513.8,552.4 514.6,548.9 515.4,548.8 516.2,549.0 517.0,550.7 517.8,549.7 518.6,551.4 519.4,549.8 520.0,548.7 520.2,553.0 521.0,550.6 521.8,548.3 522.6,548.3 523.4,547.4 524.2,546.2 525.0,546.1 525.8,548.0 526.6,549.6 527.4,544.5 528.2,543.8 529.0,548.1 529.8,544.8 530.5,542.4 530.6,542.6 531.4,544.1 532.2,544.8 532.7,545.5 533.0,547.4 533.8,551.1 534.6,548.5 534.8,548.7 535.4,549.8 536.2,551.9 537.0,553.1 537.8,556.7 538.6,558.1 539.4,557.9 540.2,560.8 541.0,559.6 541.8,562.2 542.6,563.6 543.3,563.5 543.4,564.0 544.2,566.1 545.0,567.2 545.8,566.9 546.6,569.2 547.4,569.1 547.5,568.8 548.2,570.6 549.0,571.2 549.8,572.1 550.6,573.1 551.4,574.3 551.7,574.1 552.2,575.1 553.0,576.8 553.8,578.7 554.6,579.7 555.4,581.1 556.0,582.2 556.2,582.2 557.0,582.2 557.8,582.2 558.6,582.2 559.4,582.2 560.2,582.2 561.0,582.2 561.8,582.2 562.6,582.2 563.4,582.2 564.2,582.2 565.0,582.3 565.8,582.3 566.6,582.3 567.4,582.3 568.2,582.3 569.0,582.3 569.8,582.3 570.6,582.3 571.4,582.3 572.2,582.3 573.0,582.3 573.8,582.3 574.6,582.3 575.4,582.4 576.2,582.4 577.0,582.4 577.8,582.4 578.6,582.4 579.4,582.4 580.2,582.4 581.0,582.4 581.8,582.4 582.6,582.4 583.4,582.4 584.2,582.4 585.0,582.4 585.0,582.3 585.8,582.3 586.6,582.2 587.4,582.2 588.2,582.1 589.0,582.1 589.8,582.0 590.6,582.0 591.4,582.0 592.2,581.9 593.0,581.9 593.8,581.8 594.6,581.8 595.4,581.7 596.2,581.7 597.0,581.6 597.8,581.6 598.6,581.6 599.1,581.5 599.4,580.8 600.2,579.2 601.0,577.2 601.8,575.4 602.6,573.6 603.3,572.0 603.4,572.0 604.2,571.5 605.0,571.7 605.8,572.0 606.6,571.9 607.4,570.0 608.2,570.5 609.0,570.1 609.8,569.2 610.6,570.3 611.4,569.0 611.8,567.8 612.2,567.5 613.0,567.0 613.8,566.4 614.6,566.1 615.4,565.6 616.2,566.9 617.0,564.6 617.8,563.7 618.6,563.8 619.4,562.4 620.2,562.3 621.0,561.3 621.8,561.7 622.6,562.4 623.4,560.3 624.2,559.9 625.0,558.7 625.8,558.6 626.6,559.0 627.4,558.7 628.2,559.7 629.0,558.0 629.8,555.1 630.6,555.4 631.4,554.1 632.2,557.6 632.9,552.9 633.0,553.3 633.8,553.6 634.6,556.3 635.4,556.7 636.2,555.8 637.0,555.2 637.8,554.9 638.6,557.4 639.4,555.6 640.2,558.4 641.0,558.2 641.8,557.9 642.6,558.2 643.4,559.7 643.5,557.2 644.2,557.5 645.0,557.9 645.8,558.1 646.6,559.6 647.4,561.8 648.2,559.2 649.0,559.6 649.8,559.7 650.6,560.2 651.4,560.4 652.2,563.5 653.0,561.1 653.8,562.9 654.1,561.4 654.6,563.5 655.4,561.6 656.2,563.4 657.0,561.7 657.8,564.5 658.6,563.6 659.4,563.5 660.2,564.4 661.0,561.5 661.8,562.2 662.6,561.5 663.4,561.6 664.2,564.2 665.0,561.5 665.8,561.6 666.6,561.7 667.4,561.6 668.2,564.0 669.0,561.4 669.8,563.5 670.6,564.2 671.4,561.4 672.2,563.7 673.0,562.1 673.2,561.4 673.8,562.3 674.6,562.9 675.4,562.4 676.2,564.6 677.0,563.7 677.8,563.1 678.6,563.0 679.4,564.0 680.2,565.1 681.0,565.3 681.6,563.5 681.8,565.7 682.6,560.3 683.4,558.4 684.2,555.1 685.0,553.0 685.8,549.5 685.9,548.7 686.6,548.7 687.4,548.7 688.2,550.0 689.0,549.4 689.8,548.8 690.1,548.7 690.6,550.5 691.4,550.9 692.2,554.8 693.0,550.9 693.8,551.9 694.6,552.7 695.4,555.4 696.2,556.4 697.0,554.0 697.8,557.5 698.6,555.1 698.6,555.4 699.4,554.9 700.2,554.7 701.0,556.6 701.8,556.2 702.6,555.0 703.4,554.9 704.2,554.3 705.0,554.9 705.8,553.5 706.6,555.5 707.0,552.9 707.4,555.1 708.2,554.7 709.0,553.5 709.8,555.8 710.6,555.7 711.4,551.2 712.2,554.5 713.0,552.7 713.8,552.3 714.6,549.2 715.4,549.0 716.2,551.3 717.0,548.0 717.8,547.8 718.6,550.4 719.4,547.5 720.2,546.5 721.0,551.1 721.8,545.6 722.6,545.2 723.4,545.6 724.2,545.5 725.0,546.4 725.8,543.6 726.6,546.9 727.4,544.5 728.2,545.2 728.2,542.4 729.0,545.4 729.8,547.3 730.6,550.1 731.4,549.7 732.2,551.7 733.0,556.3 733.8,554.9 734.6,557.6 735.4,560.2 736.2,563.4 736.7,561.4 737.0,562.7 737.8,563.1 738.6,566.4 739.4,566.1 740.2,566.8 740.9,567.8 741.0,566.1 741.8,550.7 742.0,546.6 742.6,546.4 743.4,548.7 744.2,544.9 745.0,543.9 745.8,545.3 746.6,546.5 747.4,547.1 748.2,541.1 749.0,543.6 749.8,540.7 750.6,540.1 751.4,538.5 752.2,542.2 753.0,538.3 753.6,536.0 753.8,538.2 754.6,543.8 755.4,542.7 756.2,547.0 757.0,550.3 757.8,549.9 758.6,549.9 759.4,551.9 760.0,552.9 760.2,555.7 761.0,557.2 761.8,557.4 762.6,560.0 763.4,557.7 764.2,558.9 765.0,559.4 765.8,560.2 766.6,563.4 767.4,562.8 768.2,565.2 768.4,563.5 769.0,564.5 769.8,564.2 770.6,565.7 771.4,564.0 772.2,565.0 772.7,563.5 773.0,563.8 773.8,564.7 774.6,563.4 775.4,562.2 776.2,564.3 777.0,563.1 777.8,563.4 778.6,560.9 779.4,560.6 780.2,560.6 781.0,562.4 781.8,559.2 782.6,558.7 783.4,558.6 784.2,561.4 785.0,560.0 785.8,557.0 786.6,556.9 787.4,557.1 788.2,556.5 789.0,557.6 789.8,556.0 790.6,554.7 791.4,554.3 792.2,553.8 793.0,553.4 793.8,556.6 793.8,552.9 794.6,557.2 795.4,556.8 796.2,556.9 797.0,559.8 797.8,559.7 798.6,562.3 799.4,563.8 800.2,563.5 801.0,563.3 801.8,564.3 802.6,564.3 803.4,561.9 804.2,561.5 805.0,562.8 805.8,563.2 806.6,561.0 807.4,560.4 808.2,562.1 809.0,559.5 809.8,560.8 810.6,559.0 811.4,558.2 812.2,558.0 813.0,559.2 813.8,559.2 814.6,557.6 815.4,558.1 816.2,555.5 817.0,558.8 817.1,555.1 817.8,555.4 818.6,555.9 819.4,556.3 820.2,556.7 821.0,557.0 821.8,557.6 822.6,558.0 823.4,558.6 824.2,562.0 825.0,560.9 825.8,559.7 826.6,561.6 827.4,561.0 828.2,560.6 829.0,562.3 829.8,561.5 829.8,561.4 830.6,563.6 831.4,562.8 832.2,563.6 833.0,563.5 833.8,562.5 834.6,562.4 835.4,564.0 836.0,562.7 836.0,570.6 836.2,570.7 837.0,572.0 837.8,571.1 838.6,571.8 839.4,571.5 840.2,571.7 841.0,572.7 841.5,572.0 841.8,572.4 842.6,574.4 843.4,574.7 844.2,575.5 845.0,576.5 845.8,577.6 846.6,578.4 847.4,579.5 848.2,580.4 849.0,581.4 849.8,582.4 849.9,582.6 850.6,581.6 851.4,580.4 852.2,579.2 853.0,578.4 853.8,577.3 854.2,576.2 854.6,576.1 855.4,576.0 856.2,574.9 857.0,574.4 857.8,573.9 858.6,573.3 859.4,573.0 860.2,572.8 860.5,572.0 861.0,572.4 861.8,572.4 862.6,573.0 863.4,573.3 864.2,573.5 865.0,572.9 865.8,573.1 866.6,573.8 867.4,573.8 868.2,574.1 869.0,574.1 869.8,574.4 870.6,574.8 871.1,574.1 871.4,574.1 872.2,574.0 873.0,574.0 873.8,574.0 874.6,574.2 875.4,573.5 876.2,574.3 877.0,573.4 877.8,573.3 878.6,572.9 879.4,572.7 880.2,572.6 881.0,572.8 881.8,573.5 882.6,572.3 883.4,572.2 883.8,572.0 884.2,571.7 885.0,571.7 885.8,570.6 886.6,570.6 887.4,570.5 888.2,569.7 889.0,567.9 889.8,569.2 890.6,566.5 891.4,566.7 892.2,566.9 893.0,564.6 893.8,565.4 894.6,563.1 895.4,562.4 896.2,564.3 896.5,561.4 897.0,561.6 897.8,563.0 898.6,562.0 899.4,562.1 900.2,563.7 901.0,562.8 901.8,560.9 902.6,561.1 903.4,561.0 904.2,560.8 905.0,563.2 905.8,562.4 906.6,562.8 907.4,561.5 908.2,560.9 909.0,560.3 909.8,560.2 910.6,560.3 911.4,560.3 912.2,561.6 913.0,560.4 913.8,560.6 914.6,560.8 915.4,560.7 916.2,562.1 917.0,562.0 917.8,559.6 918.6,559.8 919.4,559.4 919.8,559.3 920.2,562.9 921.0,565.5 921.8,569.6 921.9,569.9 922.6,573.8 923.4,577.4 924.0,580.5 924.2,580.7 925.0,579.0 925.8,578.0 926.2,577.3 926.6,576.7 927.4,576.5 928.2,575.2 928.3,574.1 929.0,574.5 929.8,572.6 930.6,572.2 931.4,571.0 932.2,570.2 933.0,570.7 933.8,568.7 934.6,568.6 934.6,567.8 935.4,568.1 936.2,568.1 937.0,568.7 937.8,567.3 938.6,566.9 939.4,568.6 940.2,567.7 941.0,566.9 941.8,568.0 942.6,567.3 943.1,565.6 943.4,565.6 944.2,565.9 945.0,565.2 945.8,567.3 946.6,564.6 947.4,564.6 948.2,566.2 949.0,565.9 949.8,564.2 950.6,564.9 951.4,563.6 952.2,564.1 953.0,565.5 953.8,563.2 954.6,562.3 955.4,562.9 956.2,561.6 957.0,562.3 957.8,562.3 958.6,561.9 959.4,560.9 960.2,560.5 961.0,563.2 961.8,559.9 962.6,559.7 963.4,560.6 964.2,560.9 965.0,561.4 965.8,560.0 966.6,561.6 967.4,561.1 968.2,561.4 969.0,557.9 969.8,557.5 970.6,557.5 970.6,557.2 971.4,557.7 972.2,559.3 973.0,559.3 973.8,559.1 974.6,562.0 975.4,562.1 976.2,563.6 977.0,561.6 977.8,562.2 978.6,563.6 979.4,563.9 980.2,565.4 981.0,565.5 981.2,563.5 981.8,565.8 982.6,566.1 983.4,568.9 984.2,568.8 985.0,570.8 985.4,570.9 985.8,572.8 986.6,573.6 987.4,574.5 988.2,576.0 989.0,577.6 989.7,578.4 989.8,579.3 990.6,580.3 991.4,581.8 991.8,582.6 992.2,582.6 993.0,582.5 993.8,582.5 994.6,582.5 995.4,582.5 996.2,582.4 997.0,582.4 997.8,582.4 998.6,582.4 999.4,582.3 1000.2,582.3 1001.0,582.3 1001.8,582.3 1002.6,582.2 1003.4,582.2 1004.2,582.2 1005.0,582.1 1005.8,582.1 1006.6,582.1 1007.4,582.1 1008.2,582.0 1009.0,582.0 1009.8,582.0 1010.6,582.0 1011.4,581.9 1012.2,581.9 1013.0,581.9 1013.8,581.9 1014.6,581.8 1015.4,581.8 1016.2,581.8 1017.0,581.7 1017.8,581.7 1018.6,581.7 1019.4,581.7 1020.2,581.6 1021.0,581.6 1021.8,581.6 1022.6,581.6 1023.4,581.5 1023.5,581.5 1024.2,581.5 1025.0,581.4 1025.8,581.4 1026.6,581.4 1027.4,581.3 1028.2,581.3 1029.0,581.2 1029.8,581.2 1030.6,581.1 1031.4,581.1 1032.2,581.0 1033.0,581.0 1033.8,581.0 1034.6,580.9 1035.4,580.9 1036.2,580.8 1037.0,580.8 1037.8,580.7 1038.6,580.7 1039.4,580.6 1040.2,580.6 1041.0,580.9 1041.8,580.6 1042.6,580.9 1042.6,580.5 1043.4,579.6 1044.2,578.4 1045.0,577.6 1045.8,576.2 1045.8,576.9 1046.6,572.2 1047.4,568.1 1048.2,562.9 1049.0,557.2 1049.0,559.1 1049.8,556.2 1050.6,555.3 1051.4,556.6 1052.2,556.6 1053.0,554.0 1053.8,550.9 1054.6,554.2 1055.3,548.7 1055.4,549.3 1056.2,553.0 1057.0,553.4 1057.4,551.7 1057.8,552.2 1058.6,553.4 1059.4,554.6 1060.2,557.8 1061.0,557.4 1061.8,557.9 1062.6,561.0 1063.4,560.7 1064.2,562.1 1065.0,562.9 1065.8,564.4 1065.9,563.5 1066.6,563.3 1067.4,563.3 1068.2,562.2 1069.0,562.0 1069.8,561.4 1070.6,560.7 1071.4,562.0 1072.2,559.7 1073.0,559.3 1073.8,560.2 1074.6,561.4 1075.4,558.0 1076.2,557.7 1077.0,557.1 1077.8,556.1 1078.6,555.8 1079.4,555.5 1080.2,557.8 1081.0,557.7 1081.8,553.6 1082.6,554.4 1082.8,552.9 1083.4,552.9 1084.2,554.5 1085.0,552.5 1085.8,555.7 1086.6,556.3 1087.4,555.1 1088.2,551.8 1089.0,551.7 1089.8,552.7 1090.6,552.3 1091.4,554.1 1092.2,551.0 1093.0,550.8 1093.0,614.4 1092.2,614.1 1091.4,612.2 1090.6,614.5 1089.8,613.8 1089.0,610.9 1088.2,614.0 1087.4,614.4 1086.6,610.9 1085.8,614.3 1085.0,612.7 1084.2,612.4 1083.4,614.9 1082.8,615.0 1082.6,614.6 1081.8,613.9 1081.0,614.8 1080.2,613.8 1079.4,614.9 1078.6,615.2 1077.8,614.6 1077.0,614.3 1076.2,615.3 1075.4,615.3 1074.6,615.4 1073.8,614.4 1073.0,615.5 1072.2,615.4 1071.4,611.7 1070.6,613.8 1069.8,614.8 1069.0,611.6 1068.2,615.8 1067.4,615.1 1066.6,615.6 1065.9,616.0 1065.8,613.2 1065.0,616.0 1064.2,616.1 1063.4,616.1 1062.6,616.2 1061.8,615.4 1061.0,613.0 1060.2,616.1 1059.4,614.8 1058.6,615.3 1057.8,616.4 1057.4,616.5 1057.0,613.7 1056.2,612.8 1055.4,613.3 1055.3,614.9 1054.6,612.6 1053.8,613.7 1053.0,613.1 1052.2,609.4 1051.4,611.4 1050.6,611.3 1049.8,609.5 1049.0,608.9 1049.0,610.1 1048.2,604.2 1047.4,600.4 1046.6,594.5 1045.8,590.2 1045.8,591.1 1045.0,589.3 1044.2,588.7 1043.4,587.9 1042.6,586.8 1042.6,586.6 1041.8,586.6 1041.0,586.7 1040.2,586.7 1039.4,586.4 1038.6,586.3 1037.8,586.6 1037.0,586.5 1036.2,586.5 1035.4,586.4 1034.6,586.4 1033.8,586.3 1033.0,586.3 1032.2,586.2 1031.4,586.2 1030.6,586.2 1029.8,586.1 1029.0,586.1 1028.2,586.0 1027.4,586.0 1026.6,585.9 1025.8,585.9 1025.0,585.8 1024.2,585.8 1023.5,585.8 1023.4,585.8 1022.6,585.7 1021.8,585.7 1021.0,585.7 1020.2,585.7 1019.4,585.6 1018.6,585.6 1017.8,585.6 1017.0,585.5 1016.2,585.5 1015.4,585.5 1014.6,585.5 1013.8,585.4 1013.0,585.4 1012.2,585.4 1011.4,585.4 1010.6,585.3 1009.8,585.3 1009.0,585.3 1008.2,585.3 1007.4,585.2 1006.6,585.2 1005.8,585.2 1005.0,585.1 1004.2,585.1 1003.4,585.1 1002.6,585.1 1001.8,585.0 1001.0,585.0 1000.2,585.0 999.4,585.0 998.6,584.9 997.8,584.9 997.0,584.9 996.2,584.9 995.4,584.8 994.6,584.8 993.8,584.8 993.0,584.7 992.2,584.7 991.8,584.7 991.4,585.8 990.6,587.9 989.8,589.9 989.7,590.3 989.0,591.3 988.2,594.0 987.4,595.4 986.6,598.4 985.8,600.7 985.4,601.6 985.0,600.8 984.2,602.1 983.4,602.3 982.6,601.7 981.8,602.8 981.2,604.1 981.0,601.9 980.2,603.4 979.4,605.0 978.6,605.5 977.8,605.7 977.0,603.5 976.2,604.7 975.4,607.3 974.6,606.5 973.8,608.0 973.0,608.8 972.2,608.4 971.4,609.4 970.6,610.1 970.6,607.0 969.8,609.6 969.0,609.6 968.2,608.3 967.4,607.8 966.6,607.8 965.8,608.4 965.0,605.2 964.2,608.1 963.4,606.1 962.6,605.9 961.8,606.8 961.0,603.9 960.2,603.7 959.4,604.4 958.6,605.0 957.8,605.9 957.0,604.6 956.2,605.0 955.4,604.9 954.6,604.0 953.8,604.8 953.0,604.6 952.2,603.5 951.4,602.8 950.6,604.0 949.8,603.6 949.0,603.4 948.2,602.0 947.4,602.5 946.6,600.8 945.8,599.9 945.0,601.8 944.2,601.8 943.4,601.3 943.1,601.6 942.6,600.9 941.8,600.0 941.0,598.8 940.2,598.5 939.4,599.7 938.6,598.6 937.8,598.9 937.0,598.3 936.2,598.2 935.4,597.4 934.6,597.4 934.6,597.0 933.8,594.7 933.0,593.8 932.2,594.3 931.4,592.2 930.6,592.4 929.8,590.8 929.0,590.0 928.3,589.5 928.2,588.7 927.4,588.0 926.6,587.3 926.2,586.8 925.8,587.9 925.0,591.3 924.2,594.9 924.0,596.4 923.4,598.7 922.6,601.6 921.9,605.9 921.8,605.7 921.0,605.8 920.2,605.7 919.8,605.7 919.4,604.6 918.6,605.2 917.8,603.1 917.0,605.4 916.2,604.6 915.4,603.3 914.6,604.1 913.8,604.0 913.0,605.1 912.2,604.7 911.4,603.9 910.6,604.9 909.8,603.3 909.0,604.5 908.2,603.9 907.4,604.5 906.6,602.1 905.8,603.2 905.0,604.2 904.2,602.5 903.4,604.3 902.6,603.6 901.8,604.2 901.0,604.1 900.2,604.1 899.4,603.6 898.6,603.4 897.8,603.9 897.0,603.7 896.5,603.8 896.2,603.1 895.4,603.0 894.6,602.1 893.8,601.9 893.0,601.4 892.2,600.8 891.4,600.3 890.6,599.8 889.8,598.2 889.0,597.1 888.2,597.9 887.4,596.5 886.6,595.5 885.8,596.5 885.0,596.0 884.2,595.1 883.8,595.3 883.4,595.1 882.6,594.6 881.8,594.4 881.0,595.1 880.2,594.2 879.4,595.2 878.6,594.7 877.8,595.0 877.0,595.2 876.2,595.0 875.4,594.9 874.6,594.7 873.8,594.9 873.0,594.9 872.2,593.8 871.4,595.3 871.1,595.3 870.6,593.8 869.8,594.2 869.0,595.0 868.2,595.0 867.4,594.3 866.6,595.0 865.8,594.3 865.0,595.0 864.2,595.2 863.4,595.3 862.6,595.3 861.8,595.3 861.0,595.2 860.5,595.3 860.2,594.4 859.4,593.5 858.6,594.0 857.8,593.3 857.0,592.8 856.2,592.0 855.4,591.1 854.6,591.3 854.2,591.1 853.8,590.5 853.0,588.9 852.2,587.9 851.4,586.4 850.6,585.7 849.9,584.7 849.8,584.9 849.0,585.9 848.2,586.9 847.4,587.8 846.6,588.9 845.8,589.4 845.0,590.8 844.2,591.6 843.4,592.8 842.6,593.9 841.8,593.9 841.5,595.3 841.0,595.4 840.2,595.6 839.4,595.6 838.6,595.5 837.8,595.0 837.0,594.7 836.2,595.4 836.0,596.7 836.0,603.5 835.4,603.8 834.6,603.4 833.8,603.3 833.0,604.8 832.2,604.8 831.4,603.8 830.6,606.0 829.8,606.4 829.8,606.2 829.0,606.3 828.2,605.7 827.4,606.8 826.6,606.2 825.8,606.1 825.0,608.6 824.2,608.9 823.4,606.1 822.6,609.5 821.8,609.0 821.0,609.9 820.2,610.0 819.4,609.1 818.6,611.2 817.8,611.6 817.1,612.2 817.0,610.6 816.2,612.3 815.4,609.0 814.6,610.6 813.8,611.5 813.0,609.4 812.2,611.1 811.4,610.8 810.6,609.2 809.8,611.7 809.0,612.2 808.2,610.4 807.4,611.2 806.6,609.2 805.8,613.3 805.0,612.7 804.2,613.3 803.4,613.1 802.6,610.9 801.8,611.8 801.0,611.8 800.2,613.8 799.4,613.8 798.6,612.5 797.8,613.3 797.0,609.9 796.2,614.0 795.4,611.7 794.6,612.6 793.8,614.4 793.8,613.2 793.0,614.0 792.2,612.7 791.4,609.8 790.6,612.9 789.8,612.7 789.0,612.3 788.2,610.8 787.4,609.2 786.6,611.1 785.8,609.3 785.0,610.6 784.2,609.9 783.4,607.5 782.6,606.6 781.8,609.2 781.0,605.6 780.2,608.5 779.4,608.2 778.6,607.0 777.8,605.1 777.0,606.7 776.2,604.5 775.4,605.8 774.6,606.1 773.8,604.4 773.0,605.4 772.7,605.5 772.2,603.8 771.4,603.7 770.6,604.3 769.8,603.2 769.0,601.3 768.4,603.8 768.2,602.8 767.4,602.8 766.6,606.8 765.8,607.3 765.0,609.4 764.2,610.8 763.4,612.6 762.6,614.2 761.8,614.7 761.0,617.5 760.2,618.5 760.0,619.5 759.4,615.7 758.6,622.0 757.8,619.9 757.0,624.9 756.2,623.8 755.4,626.7 754.6,624.1 753.8,627.7 753.6,631.3 753.0,628.7 752.2,623.7 751.4,628.5 750.6,622.5 749.8,627.6 749.0,626.8 748.2,622.7 747.4,625.2 746.6,622.8 745.8,624.0 745.0,621.3 744.2,621.0 743.4,618.6 742.6,620.6 742.0,620.7 741.8,616.1 741.0,601.1 740.9,599.5 740.2,599.5 739.4,598.5 738.6,598.3 737.8,597.5 737.0,599.5 736.7,599.5 736.2,601.0 735.4,603.2 734.6,606.1 733.8,607.9 733.0,611.5 732.2,613.6 731.4,616.7 730.6,614.7 729.8,621.7 729.0,623.4 728.2,627.1 728.2,627.0 727.4,626.3 726.6,625.7 725.8,625.5 725.0,624.6 724.2,620.7 723.4,624.0 722.6,623.0 721.8,622.4 721.0,618.8 720.2,618.6 719.4,617.5 718.6,618.9 717.8,619.4 717.0,616.0 716.2,615.0 715.4,618.3 714.6,617.2 713.8,618.0 713.0,615.9 712.2,613.8 711.4,615.4 710.6,616.4 709.8,616.0 709.0,614.6 708.2,614.4 707.4,611.6 707.0,614.4 706.6,610.3 705.8,614.6 705.0,613.0 704.2,614.8 703.4,614.0 702.6,615.2 701.8,613.5 701.0,614.8 700.2,611.8 699.4,616.0 698.6,615.4 698.6,616.5 697.8,614.5 697.0,614.5 696.2,615.8 695.4,616.3 694.6,613.7 693.8,617.5 693.0,615.8 692.2,616.0 691.4,617.1 690.6,618.0 690.1,618.6 689.8,618.5 689.0,617.1 688.2,617.0 687.4,614.8 686.6,615.9 685.9,618.6 685.8,617.5 685.0,614.7 684.2,615.3 683.4,614.9 682.6,614.1 681.8,613.1 681.6,614.4 681.0,613.3 680.2,612.9 679.4,609.5 678.6,609.7 677.8,609.4 677.0,609.0 676.2,608.7 675.4,608.0 674.6,607.3 673.8,603.3 673.2,605.9 673.0,604.8 672.2,605.9 671.4,605.9 670.6,605.8 669.8,605.9 669.0,605.2 668.2,604.1 667.4,604.4 666.6,604.7 665.8,605.2 665.0,605.6 664.2,605.1 663.4,605.9 662.6,605.9 661.8,604.0 661.0,605.4 660.2,605.9 659.4,605.5 658.6,605.9 657.8,605.7 657.0,603.3 656.2,605.1 655.4,605.2 654.6,603.1 654.1,605.9 653.8,606.0 653.0,606.3 652.2,606.5 651.4,606.7 650.6,607.1 649.8,605.0 649.0,607.9 648.2,607.2 647.4,605.1 646.6,608.9 645.8,605.9 645.0,607.3 644.2,609.8 643.5,610.1 643.4,609.5 642.6,609.8 641.8,608.9 641.0,611.0 640.2,611.1 639.4,608.0 638.6,611.4 637.8,611.3 637.0,610.2 636.2,610.0 635.4,613.3 634.6,610.1 633.8,614.0 633.0,614.2 632.9,614.4 632.2,612.9 631.4,613.3 630.6,612.7 629.8,612.2 629.0,611.6 628.2,608.6 627.4,610.2 626.6,609.9 625.8,608.3 625.0,608.8 624.2,605.2 623.4,604.3 622.6,605.6 621.8,606.6 621.0,606.0 620.2,604.5 619.4,604.8 618.6,601.6 617.8,603.4 617.0,603.0 616.2,601.0 615.4,601.5 614.6,601.5 613.8,600.4 613.0,599.1 612.2,599.8 611.8,599.5 611.4,598.8 610.6,598.0 609.8,597.8 609.0,597.4 608.2,596.2 607.4,596.2 606.6,595.6 605.8,595.0 605.0,593.4 604.2,593.1 603.4,592.1 603.3,593.2 602.6,592.0 601.8,590.3 601.0,588.5 600.2,587.6 599.4,586.4 599.1,585.8 598.6,585.7 597.8,585.7 597.0,585.7 596.2,585.6 595.4,585.6 594.6,585.5 593.8,585.5 593.0,585.4 592.2,585.4 591.4,585.3 590.6,585.3 589.8,585.3 589.0,585.2 588.2,585.2 587.4,585.1 586.6,585.1 585.8,585.0 585.0,585.0 585.0,584.7 584.2,584.7 583.4,584.7 582.6,584.7 581.8,584.7 581.0,584.7 580.2,584.7 579.4,584.7 578.6,584.7 577.8,584.7 577.0,584.7 576.2,584.7 575.4,584.7 574.6,584.7 573.8,584.7 573.0,584.7 572.2,584.7 571.4,584.7 570.6,584.7 569.8,584.7 569.0,584.7 568.2,584.7 567.4,584.7 566.6,584.7 565.8,584.7 565.0,584.7 564.2,584.7 563.4,584.7 562.6,584.7 561.8,584.7 561.0,584.7 560.2,584.7 559.4,584.7 558.6,584.7 557.8,584.7 557.0,584.7 556.2,584.7 556.0,584.7 555.4,586.0 554.6,587.6 553.8,588.8 553.0,591.3 552.2,592.3 551.7,594.2 551.4,594.8 550.6,596.8 549.8,598.4 549.0,598.9 548.2,600.6 547.5,603.8 547.4,601.7 546.6,602.3 545.8,603.5 545.0,607.3 544.2,606.5 543.4,610.2 543.3,610.4 542.6,611.4 541.8,612.7 541.0,613.2 540.2,615.2 539.4,616.5 538.6,617.7 537.8,617.1 537.0,618.6 536.2,617.4 535.4,622.5 534.8,623.7 534.6,618.4 533.8,625.2 533.0,626.3 532.7,627.1 532.2,626.1 531.4,621.0 530.6,625.7 530.5,625.6 529.8,620.8 529.0,620.5 528.2,623.1 527.4,618.7 526.6,620.6 525.8,618.7 525.0,620.6 524.2,618.6 523.4,620.2 522.6,617.5 521.8,616.1 521.0,618.2 520.2,614.4 520.0,618.6 519.4,614.5 518.6,616.7 517.8,618.3 517.0,620.0 516.2,620.7 515.4,620.7 514.6,617.2 513.8,621.4 513.0,622.6 512.2,623.4 511.4,622.3 510.6,624.0 509.8,624.3 509.0,625.4 508.2,625.9 507.4,621.5 506.6,621.6 505.8,621.5 505.1,627.9 505.0,624.8 504.2,623.5 503.4,628.6 503.0,629.2 502.6,623.2 501.8,627.0 501.0,627.5 500.2,622.9 499.4,620.6 498.8,625.6 498.6,623.7 497.8,624.3 497.0,621.0 496.2,623.2 495.4,622.6 494.6,620.0 493.8,621.4 493.0,620.7 492.2,619.8 491.4,617.0 490.6,614.4 490.3,618.6 489.8,607.3 489.0,596.8 488.2,586.8 488.2,586.5 487.4,588.3 486.6,590.0 485.8,590.7 485.0,592.4 484.2,594.8 483.4,596.2 482.6,598.0 481.8,599.6 481.0,599.7 480.8,601.6 480.2,602.3 479.4,604.1 478.6,605.6 477.8,606.2 477.6,608.0 477.0,608.3 476.2,609.2 475.5,611.0 475.4,608.0 474.6,611.0 473.8,611.0 473.0,611.5 472.2,612.3 471.4,615.4 470.6,615.1 469.8,618.7 469.0,619.8 468.2,617.6 467.4,619.1 467.0,622.8 466.6,621.9 465.8,623.1 465.0,622.6 464.2,619.6 463.4,620.4 462.8,624.1 462.6,624.0 461.8,623.9 461.0,623.6 460.2,621.0 459.4,623.3 458.6,624.6 457.8,623.4 457.0,624.9 456.2,621.2 455.4,626.2 454.6,625.0 453.8,622.9 453.0,621.4 452.2,624.8 451.4,624.7 450.6,627.6 450.1,627.9 449.8,622.9 449.0,623.6 448.2,625.9 447.4,628.1 446.6,627.4 445.9,629.2 445.8,625.5 445.0,626.0 444.8,628.1 444.2,624.6 443.4,626.5 442.6,623.6 441.8,624.8 441.0,620.9 440.2,620.9 439.4,622.7 438.6,617.9 437.8,620.8 437.0,620.0 436.2,619.3 435.4,617.4 435.3,618.6 434.6,612.2 433.8,606.8 433.2,601.7 433.0,601.5 432.2,602.0 431.4,602.7 430.6,605.3 429.8,604.6 429.0,606.1 428.2,606.5 427.4,608.7 426.8,612.2 426.6,612.5 425.8,610.2 425.0,614.4 424.2,613.2 423.4,613.8 422.6,619.0 421.8,620.6 421.0,619.4 420.5,622.8 420.2,617.5 419.4,620.6 418.6,618.3 417.8,621.1 417.0,619.8 416.2,620.0 416.2,619.5 415.4,619.4 414.6,615.5 413.8,613.7 413.0,614.2 412.2,615.9 411.4,614.6 410.6,612.8 409.8,614.7 409.0,614.5 408.2,613.3 407.8,614.3 407.4,609.4 406.6,608.2 405.8,606.4 405.6,605.9 405.0,599.5 404.2,591.5 403.5,584.7 403.4,584.7 402.6,584.7 401.8,584.7 401.0,584.7 400.2,584.7 399.4,584.7 398.6,584.7 397.8,584.7 397.0,584.7 396.2,584.6 395.4,584.6 394.6,584.6 393.8,584.6 393.0,584.6 392.2,584.6 391.4,584.6 390.6,584.6 389.8,584.6 389.0,584.6 388.2,584.6 387.4,584.6 386.6,584.6 385.8,584.6 385.0,584.6 384.2,584.6 383.4,584.6 382.6,584.5 381.8,584.5 381.0,584.5 380.2,584.5 379.4,584.5 378.6,584.5 377.8,584.5 377.0,584.5 376.2,584.5 375.4,584.5 374.6,584.5 373.8,584.5 373.0,584.5 372.2,584.5 371.4,584.5 370.6,584.5 369.8,584.4 369.0,584.4 368.2,584.4 367.4,584.4 366.6,584.4 365.8,584.4 365.0,584.4 364.2,584.4 363.4,584.4 362.6,584.4 361.8,584.4 361.0,584.4 360.2,584.4 359.4,584.4 358.6,584.4 357.8,584.4 357.0,584.3 356.2,584.3 355.4,584.3 354.6,584.3 353.8,584.3 353.0,584.3 352.2,584.3 351.4,584.3 350.6,584.3 349.8,584.3 349.0,584.3Z" fill="#484652"/><path d="M349.0,583.0 349.8,583.0 350.6,583.0 351.4,583.0 352.2,583.0 353.0,583.0 353.8,583.0 354.6,583.0 355.4,583.0 356.2,583.0 357.0,582.9 357.8,582.9 358.6,582.9 359.4,582.9 360.2,582.9 361.0,582.9 361.8,582.9 362.6,582.9 363.4,582.9 364.2,582.9 365.0,582.9 365.8,582.9 366.6,582.9 367.4,582.9 368.2,582.9 369.0,582.9 369.8,582.8 370.6,582.8 371.4,582.8 372.2,582.8 373.0,582.8 373.8,582.8 374.6,582.8 375.4,582.8 376.2,582.8 377.0,582.8 377.8,582.8 378.6,582.8 379.4,582.8 380.2,582.8 381.0,582.8 381.8,582.8 382.6,582.7 383.4,582.7 384.2,582.7 385.0,582.7 385.8,582.7 386.6,582.7 387.4,582.7 388.2,582.7 389.0,582.7 389.8,582.7 390.6,582.7 391.4,582.7 392.2,582.7 393.0,582.7 393.8,582.7 394.6,582.7 395.4,582.7 396.2,582.6 397.0,582.6 397.8,582.6 398.6,582.6 399.4,582.6 400.2,582.6 401.0,582.6 401.8,582.6 402.6,582.6 403.4,582.6 403.5,582.6 404.2,575.8 405.0,567.8 405.6,561.4 405.8,563.0 406.6,558.8 407.4,556.7 407.8,553.0 408.2,553.4 409.0,554.7 409.8,555.1 410.6,554.5 411.4,557.2 412.0,555.1 412.2,558.3 413.0,558.2 413.8,558.0 414.6,559.2 415.4,560.2 416.2,562.9 416.2,561.4 417.0,562.2 417.8,563.1 418.6,565.5 419.4,565.4 420.2,565.5 421.0,568.0 421.8,567.4 422.6,569.5 423.4,569.3 424.2,569.8 424.7,569.9 425.0,570.8 425.8,572.0 426.6,574.3 427.4,574.5 428.2,575.7 429.0,577.8 429.8,578.7 430.6,579.9 431.0,580.5 431.4,580.8 432.2,581.6 433.0,582.4 433.2,582.6 433.8,573.2 434.6,562.8 435.3,550.8 435.4,555.0 436.2,552.3 437.0,553.1 437.8,552.3 438.6,555.0 439.4,554.8 439.5,552.9 440.2,555.6 441.0,557.5 441.8,555.4 442.6,559.2 443.4,559.8 444.2,557.9 445.0,561.4 445.8,560.7 445.9,559.3 446.6,558.8 447.4,561.7 448.2,559.8 449.0,557.6 449.8,558.9 450.6,556.6 451.4,555.8 452.2,557.6 453.0,554.4 453.8,557.4 454.3,552.9 454.6,555.1 455.4,554.1 456.2,556.6 457.0,557.3 457.8,558.2 458.6,557.2 458.6,557.4 459.4,557.8 460.2,558.1 461.0,560.7 461.8,558.9 462.6,560.7 463.4,560.6 464.2,562.0 465.0,562.0 465.8,562.9 466.6,563.0 467.0,561.4 467.4,562.2 468.2,563.4 469.0,564.4 469.8,564.5 470.6,567.2 471.4,565.8 472.2,568.5 473.0,568.3 473.8,568.2 474.6,569.4 475.4,570.5 475.5,569.9 476.2,571.9 477.0,574.5 477.8,575.7 478.6,578.2 479.4,579.6 479.7,580.5 480.2,581.0 481.0,580.8 481.8,581.0 482.6,581.2 483.4,581.4 484.2,581.6 485.0,581.8 485.8,582.0 486.6,582.2 487.4,582.4 488.2,582.6 488.2,582.6 489.0,571.1 489.8,560.3 490.3,548.7 490.6,549.5 491.4,553.0 492.2,551.6 493.0,552.8 493.8,554.2 494.6,555.1 494.6,557.4 495.4,557.4 496.2,557.2 497.0,559.1 497.8,560.2 498.6,559.2 499.4,562.8 500.2,561.1 500.9,561.4 501.0,561.4 501.8,561.3 502.6,560.9 503.4,559.6 504.2,560.4 505.0,561.9 505.8,558.3 506.6,557.6 507.4,559.3 508.2,557.2 509.0,556.2 509.4,555.1 509.8,556.6 510.6,554.4 511.4,555.8 512.2,554.8 513.0,554.9 513.8,553.0 514.6,552.3 515.4,551.7 516.2,551.0 517.0,550.7 517.8,550.6 518.6,552.1 519.4,549.9 520.0,548.7 520.2,549.0 521.0,552.0 521.8,551.2 522.6,556.5 523.4,553.7 524.2,556.4 525.0,556.6 525.8,558.4 526.3,557.2 526.6,560.5 527.4,558.3 528.2,559.4 529.0,560.3 529.8,561.9 530.5,561.4 530.6,561.5 531.4,562.7 532.2,563.8 533.0,564.6 533.8,567.1 534.6,565.8 534.8,565.6 535.4,567.8 536.2,567.7 537.0,567.3 537.8,567.9 538.6,568.5 539.4,569.6 540.2,571.0 541.0,570.3 541.8,571.9 542.6,571.5 543.3,572.0 543.4,572.7 544.2,573.8 545.0,574.3 545.8,575.2 546.6,575.5 547.4,575.4 548.2,576.7 549.0,577.1 549.8,576.9 550.6,578.2 551.4,578.2 551.7,578.4 552.2,579.0 553.0,580.0 553.8,580.7 554.6,580.9 555.4,581.7 556.0,582.2 556.2,582.2 557.0,582.2 557.8,582.2 558.6,582.2 559.4,582.2 560.2,582.2 561.0,582.2 561.8,582.2 562.6,582.2 563.4,582.2 564.2,582.3 565.0,582.3 565.8,582.3 566.6,582.3 567.4,582.3 568.2,582.3 569.0,582.3 569.8,582.3 570.6,582.3 571.4,582.3 572.2,582.3 573.0,582.4 573.8,582.4 574.6,582.4 575.4,582.4 576.2,582.4 577.0,582.4 577.8,582.4 578.6,582.4 579.4,582.4 580.2,582.4 581.0,582.4 581.8,582.5 582.6,582.5 583.4,582.5 584.2,582.5 585.0,582.5 585.0,582.3 585.8,582.3 586.6,582.2 587.4,582.2 588.2,582.1 589.0,582.1 589.8,582.0 590.6,582.0 591.4,582.0 592.2,581.9 593.0,581.9 593.8,581.8 594.6,581.8 595.4,581.7 596.2,581.7 597.0,581.6 597.8,581.6 598.6,581.6 599.1,581.5 599.4,580.8 600.2,579.0 601.0,577.2 601.8,575.4 602.6,574.6 603.3,572.0 603.4,572.3 604.2,573.2 605.0,571.6 605.8,572.3 606.6,571.6 607.4,572.1 608.2,572.4 609.0,572.0 609.8,570.4 610.6,571.2 611.4,570.0 611.8,569.9 612.2,571.5 613.0,570.8 613.8,570.3 614.6,570.0 615.4,571.3 616.2,571.7 617.0,569.9 617.8,571.4 618.6,570.0 619.4,570.0 620.2,570.6 621.0,570.9 621.8,570.2 622.4,569.9 622.6,569.7 623.4,568.6 624.2,568.3 625.0,566.4 625.8,565.4 626.6,564.4 627.4,565.2 628.2,564.8 628.7,561.4 629.0,561.3 629.8,559.5 630.6,558.4 630.8,557.2 631.4,559.5 632.2,558.6 633.0,562.3 633.8,562.1 634.6,561.0 635.4,564.6 636.2,563.4 637.0,563.4 637.2,563.5 637.8,563.6 638.6,564.5 639.4,563.7 640.2,563.5 641.0,564.0 641.8,563.7 642.6,564.1 643.4,563.6 644.2,563.7 645.0,563.6 645.8,566.1 646.6,563.5 647.4,563.8 648.2,564.3 649.0,563.9 649.8,564.4 649.9,563.5 650.6,564.1 651.4,564.1 652.2,565.2 653.0,565.1 653.8,565.5 654.6,565.7 655.4,567.9 656.2,567.1 656.2,565.6 657.0,566.5 657.8,566.9 658.6,567.7 659.4,567.8 660.2,567.1 661.0,567.2 661.8,567.6 662.6,567.2 663.4,567.8 664.2,569.2 664.7,567.8 665.0,569.3 665.8,568.9 666.6,569.3 667.4,569.3 668.2,570.6 669.0,570.0 669.8,571.7 670.6,572.5 671.4,571.3 672.2,572.6 673.0,573.2 673.2,572.0 673.8,573.2 674.6,572.8 675.4,573.8 676.2,573.7 677.0,574.7 677.8,574.6 678.6,575.4 679.4,575.6 680.2,576.5 681.0,576.4 681.6,576.2 681.8,576.1 682.6,570.5 683.4,565.3 684.2,559.7 685.0,556.1 685.8,552.6 685.9,548.7 686.6,553.3 687.4,554.6 688.2,557.3 689.0,559.8 689.8,562.8 690.1,563.5 690.6,565.6 691.4,564.1 692.2,564.4 693.0,565.6 693.8,565.7 694.6,566.6 695.4,566.5 696.2,565.5 697.0,565.3 697.8,566.5 698.6,565.6 698.6,567.0 699.4,565.2 700.2,567.3 701.0,564.5 701.8,565.1 702.6,563.7 703.4,563.6 704.2,565.3 705.0,565.4 705.8,562.2 706.6,561.7 707.0,561.4 707.4,562.6 708.2,563.9 709.0,565.5 709.8,565.3 710.6,566.5 711.4,566.6 712.2,566.3 713.0,565.5 713.4,565.6 713.8,566.0 714.6,566.5 715.4,568.3 716.2,567.5 717.0,569.5 717.8,568.8 718.6,569.8 719.4,571.6 719.7,569.9 720.2,570.4 721.0,571.8 721.8,571.9 722.6,570.6 723.4,570.8 724.2,571.1 725.0,571.5 725.8,571.8 726.6,571.6 727.4,571.8 728.2,572.1 728.2,572.0 729.0,573.1 729.8,573.8 730.6,574.4 731.4,575.3 732.2,576.6 733.0,577.0 733.8,577.7 734.6,579.0 735.4,579.3 736.2,580.3 736.7,580.5 737.0,579.0 737.8,574.1 738.6,569.9 739.4,565.8 740.2,560.8 741.0,555.9 741.8,550.4 742.0,546.6 742.6,550.5 743.4,553.2 744.2,557.5 745.0,558.1 745.8,561.1 746.6,565.9 747.3,565.6 747.4,566.6 748.2,566.6 749.0,566.1 749.8,566.5 750.6,568.4 751.4,568.0 752.2,567.9 753.0,567.7 753.8,567.5 754.6,567.6 755.4,569.0 755.7,567.8 756.2,568.8 757.0,569.1 757.8,569.8 758.6,569.8 759.4,570.2 760.2,571.4 761.0,570.6 761.8,571.5 762.6,571.5 763.4,571.7 764.2,572.0 765.0,572.8 765.8,574.3 766.6,574.6 767.4,576.3 768.2,576.1 768.4,576.2 769.0,575.7 769.8,572.5 770.6,569.8 771.4,567.5 772.2,565.2 772.7,563.5 773.0,563.4 773.8,563.1 774.6,562.6 775.4,562.3 776.2,563.3 777.0,564.3 777.8,561.4 778.6,561.0 779.0,560.4 779.4,560.9 780.2,560.7 781.0,560.9 781.8,561.0 782.6,560.9 783.4,563.2 784.2,562.9 785.0,561.3 785.8,562.0 786.6,562.6 787.4,562.6 788.2,564.1 789.0,562.6 789.6,561.4 789.8,561.8 790.6,563.0 791.4,564.0 792.2,566.6 793.0,567.9 793.8,567.9 794.6,568.8 795.4,569.3 796.0,569.9 796.2,570.9 797.0,571.2 797.8,570.1 798.6,569.6 799.4,569.0 800.2,569.8 801.0,568.6 801.8,569.0 802.6,568.2 803.4,568.9 804.2,568.4 804.4,567.8 805.0,567.6 805.8,568.9 806.6,566.2 807.4,565.8 808.2,565.8 809.0,566.3 809.8,565.0 810.6,564.0 811.4,564.0 812.2,562.5 812.9,561.4 813.0,563.5 813.8,561.9 814.6,562.7 815.4,562.9 816.2,563.3 817.0,563.5 817.8,565.3 818.6,564.7 819.4,564.7 820.2,565.2 821.0,565.8 821.4,565.6 821.8,566.2 822.6,568.0 823.4,567.3 824.2,569.7 825.0,568.6 825.8,569.1 826.6,571.1 827.4,570.7 828.2,570.8 829.0,571.4 829.8,572.3 829.8,572.0 830.6,572.8 831.4,573.5 832.2,574.9 833.0,574.6 833.8,575.6 834.6,576.2 835.4,576.6 836.0,577.1 836.0,577.6 836.2,577.6 837.0,577.4 837.8,577.3 838.6,577.0 839.4,576.8 840.2,576.7 841.0,576.9 841.5,576.2 841.8,576.5 842.6,577.4 843.4,578.3 844.2,578.6 845.0,579.0 845.8,579.5 846.6,580.1 847.4,580.7 848.2,581.3 849.0,581.9 849.8,582.5 849.9,582.6 850.6,581.6 851.4,580.5 852.2,579.7 853.0,578.0 853.8,576.8 854.2,576.2 854.6,576.1 855.4,575.5 856.2,575.3 857.0,574.4 857.8,574.1 858.6,573.9 859.4,573.4 860.2,572.4 860.5,572.0 861.0,573.6 861.8,573.5 862.6,572.4 863.4,572.6 864.2,572.8 865.0,573.7 865.8,574.0 866.6,573.3 867.4,573.7 868.2,574.4 869.0,574.3 869.8,574.5 870.6,574.1 871.1,574.1 871.4,574.5 872.2,573.9 873.0,573.8 873.8,573.9 874.6,573.8 875.4,573.9 876.2,574.2 877.0,573.3 877.8,574.3 878.6,574.0 879.4,573.7 880.2,572.6 881.0,573.1 881.8,573.7 882.6,573.7 883.4,573.4 883.8,572.0 884.2,572.7 885.0,571.5 885.8,572.1 886.6,570.2 887.4,570.8 888.2,568.8 889.0,568.2 889.8,568.4 890.6,567.5 891.4,566.8 892.2,566.8 892.3,565.6 893.0,567.6 893.8,567.8 894.6,565.3 895.4,565.2 896.2,566.9 897.0,565.0 897.8,565.7 898.6,566.9 899.4,565.2 900.2,565.1 901.0,565.0 901.8,564.9 902.6,564.2 903.4,565.0 904.2,566.3 905.0,565.1 905.8,565.3 906.6,564.4 907.1,563.5 907.4,565.3 908.2,566.1 909.0,566.2 909.8,566.0 910.6,566.3 911.4,566.1 912.2,566.7 913.0,567.5 913.8,569.3 914.6,568.1 915.4,568.5 916.2,569.1 917.0,569.6 917.7,569.9 917.8,571.3 918.6,571.5 919.4,573.1 920.2,575.3 921.0,575.6 921.8,576.8 921.9,576.9 922.6,578.3 923.4,579.5 924.0,580.5 924.2,580.3 925.0,579.3 925.8,577.8 926.2,577.3 926.6,577.4 927.4,576.3 928.2,574.2 928.3,574.1 929.0,573.4 929.8,572.6 930.6,572.3 931.4,571.1 932.2,570.4 933.0,569.6 933.8,570.6 934.6,569.6 934.6,567.8 935.4,568.2 936.2,569.6 937.0,568.5 937.8,567.6 938.6,567.1 939.4,568.0 940.2,566.4 941.0,567.6 941.8,566.5 942.6,567.9 943.1,565.6 943.4,567.6 944.2,566.1 945.0,565.9 945.8,566.3 946.6,566.4 947.4,566.3 948.2,565.1 949.0,567.4 949.8,564.9 950.6,565.6 951.4,565.6 952.2,567.0 953.0,564.5 953.8,565.8 954.6,564.7 955.4,564.1 956.2,566.5 957.0,564.1 957.8,564.1 958.6,563.8 959.4,565.3 960.0,563.5 960.2,564.5 961.0,564.8 961.8,566.2 962.6,564.6 963.4,565.8 964.2,567.3 965.0,565.5 965.8,566.1 966.6,565.9 967.4,566.1 968.2,567.1 969.0,568.9 969.8,567.0 970.6,567.1 971.4,569.0 972.2,568.7 972.7,567.8 973.0,569.1 973.8,569.2 974.6,570.0 975.4,571.0 976.2,573.4 977.0,574.1 977.8,574.7 978.6,575.1 979.4,576.5 980.2,577.1 981.0,577.8 981.8,578.8 982.6,579.6 983.3,580.5 983.4,580.5 984.2,580.7 985.0,580.9 985.8,581.1 986.6,581.3 987.4,581.5 988.2,581.7 989.0,581.9 989.8,582.1 990.6,582.3 991.4,582.5 991.8,582.6 992.2,582.6 993.0,582.5 993.8,582.5 994.6,582.5 995.4,582.5 996.2,582.4 997.0,582.4 997.8,582.4 998.6,582.4 999.4,582.3 1000.2,582.3 1001.0,582.3 1001.8,582.3 1002.6,582.2 1003.4,582.2 1004.2,582.2 1005.0,582.1 1005.8,582.1 1006.6,582.1 1007.4,582.1 1008.2,582.0 1009.0,582.0 1009.8,582.0 1010.6,582.0 1011.4,581.9 1012.2,581.9 1013.0,581.9 1013.8,581.9 1014.6,581.8 1015.4,581.8 1016.2,581.8 1017.0,581.7 1017.8,581.7 1018.6,581.7 1019.4,581.7 1020.2,581.6 1021.0,581.6 1021.8,581.6 1022.6,581.6 1023.4,581.5 1023.5,581.5 1024.2,581.5 1025.0,581.4 1025.8,581.4 1026.6,581.4 1027.4,581.3 1028.2,581.3 1029.0,581.2 1029.8,581.2 1030.6,581.1 1031.4,581.1 1032.2,581.0 1033.0,581.0 1033.8,581.0 1034.6,580.9 1035.4,580.9 1036.2,580.8 1037.0,580.8 1037.8,580.7 1038.6,580.7 1039.4,580.6 1040.2,580.6 1041.0,580.6 1041.8,580.8 1042.6,580.5 1042.6,580.5 1043.4,579.5 1044.2,578.5 1045.0,577.6 1045.8,576.2 1045.8,577.2 1046.6,572.4 1047.4,567.2 1048.2,562.3 1049.0,557.2 1049.0,557.8 1049.8,558.8 1050.6,561.6 1051.4,561.1 1052.2,561.6 1053.0,562.1 1053.2,561.4 1053.8,562.1 1054.6,562.5 1055.4,565.8 1056.2,566.3 1057.0,564.4 1057.8,565.7 1058.6,566.3 1059.4,566.5 1060.2,567.4 1061.0,569.5 1061.7,567.8 1061.8,569.5 1062.6,567.6 1063.4,567.9 1064.2,568.6 1065.0,567.2 1065.8,566.5 1066.6,566.4 1067.4,566.4 1068.2,566.7 1069.0,566.2 1069.8,566.5 1070.6,565.7 1071.4,565.6 1072.2,564.4 1073.0,564.0 1073.8,564.1 1074.4,563.5 1074.6,564.1 1075.4,562.8 1076.2,564.4 1077.0,562.6 1077.8,562.1 1078.6,560.5 1079.4,559.8 1080.2,559.2 1081.0,560.8 1081.8,558.2 1082.6,558.6 1082.8,557.2 1083.4,560.3 1084.2,559.9 1085.0,558.5 1085.8,560.8 1086.6,557.3 1087.4,557.5 1088.2,558.2 1089.0,557.8 1089.8,560.7 1090.6,557.7 1091.4,557.4 1092.2,557.3 1093.0,557.2 1093.0,610.1 1092.2,609.6 1091.4,608.4 1090.6,609.5 1089.8,608.4 1089.0,609.9 1088.2,610.0 1087.4,608.8 1086.6,608.5 1085.8,607.2 1085.0,609.6 1084.2,608.6 1083.4,609.9 1082.8,610.1 1082.6,609.5 1081.8,608.9 1081.0,609.5 1080.2,608.9 1079.4,609.2 1078.6,606.0 1077.8,608.8 1077.0,608.1 1076.2,608.1 1075.4,605.8 1074.6,606.1 1074.4,608.0 1073.8,607.6 1073.0,606.7 1072.2,607.7 1071.4,607.6 1070.6,605.7 1069.8,607.4 1069.0,606.6 1068.2,607.2 1067.4,607.3 1066.6,604.0 1065.8,607.1 1065.0,606.2 1064.2,604.1 1063.4,605.8 1062.6,606.7 1061.8,606.7 1061.7,606.7 1061.0,606.7 1060.2,606.4 1059.4,605.0 1058.6,606.2 1057.8,605.2 1057.0,605.6 1056.2,604.2 1055.4,603.9 1054.6,603.5 1053.8,605.7 1053.2,605.9 1053.0,605.8 1052.2,606.1 1051.4,604.4 1050.6,608.4 1049.8,608.4 1049.0,609.8 1049.0,610.1 1048.2,603.9 1047.4,599.5 1046.6,595.9 1045.8,591.0 1045.8,591.1 1045.0,590.0 1044.2,588.9 1043.4,587.9 1042.6,586.8 1042.6,586.6 1041.8,586.5 1041.0,586.6 1040.2,586.3 1039.4,586.6 1038.6,586.4 1037.8,586.6 1037.0,586.5 1036.2,586.5 1035.4,586.4 1034.6,586.4 1033.8,586.3 1033.0,586.3 1032.2,586.2 1031.4,586.2 1030.6,586.2 1029.8,586.1 1029.0,586.1 1028.2,586.0 1027.4,586.0 1026.6,585.9 1025.8,585.9 1025.0,585.8 1024.2,585.8 1023.5,585.8 1023.4,585.8 1022.6,585.7 1021.8,585.7 1021.0,585.7 1020.2,585.7 1019.4,585.6 1018.6,585.6 1017.8,585.6 1017.0,585.5 1016.2,585.5 1015.4,585.5 1014.6,585.5 1013.8,585.4 1013.0,585.4 1012.2,585.4 1011.4,585.4 1010.6,585.3 1009.8,585.3 1009.0,585.3 1008.2,585.3 1007.4,585.2 1006.6,585.2 1005.8,585.2 1005.0,585.1 1004.2,585.1 1003.4,585.1 1002.6,585.1 1001.8,585.0 1001.0,585.0 1000.2,585.0 999.4,585.0 998.6,584.9 997.8,584.9 997.0,584.9 996.2,584.9 995.4,584.8 994.6,584.8 993.8,584.8 993.0,584.7 992.2,584.7 991.8,584.7 991.4,584.8 990.6,585.0 989.8,585.2 989.0,585.4 988.2,585.6 987.4,585.8 986.6,586.0 985.8,586.2 985.0,586.4 984.2,586.6 983.4,586.7 983.3,586.8 982.6,587.3 981.8,589.0 981.0,590.0 980.2,590.8 979.4,592.1 978.6,592.6 977.8,594.4 977.0,595.1 976.2,595.0 975.4,596.3 974.6,599.0 973.8,597.9 973.0,599.5 972.7,601.6 972.2,601.4 971.4,601.9 970.6,602.2 969.8,602.4 969.0,600.4 968.2,602.8 967.4,602.8 966.6,603.3 965.8,601.1 965.0,602.3 964.2,604.4 963.4,602.8 962.6,604.2 961.8,602.6 961.0,604.6 960.2,604.2 960.0,605.9 959.4,603.6 958.6,605.5 957.8,605.3 957.0,605.0 956.2,604.8 955.4,602.7 954.6,601.9 953.8,602.4 953.0,604.0 952.2,603.8 951.4,603.5 950.6,600.9 949.8,603.1 949.0,601.8 948.2,602.5 947.4,602.6 946.6,601.9 945.8,602.3 945.0,602.1 944.2,600.6 943.4,601.5 943.1,601.6 942.6,600.7 941.8,600.9 941.0,599.2 940.2,600.2 939.4,599.8 938.6,598.4 937.8,598.8 937.0,598.1 936.2,597.1 935.4,597.5 934.6,597.4 934.6,596.6 933.8,596.3 933.0,594.1 932.2,594.0 931.4,593.3 930.6,592.1 929.8,591.1 929.0,590.0 928.3,589.5 928.2,589.4 927.4,588.2 926.6,587.3 926.2,586.8 925.8,587.2 925.0,589.7 924.2,591.5 924.0,592.1 923.4,593.4 922.6,594.1 921.9,597.4 921.8,597.5 921.0,596.1 920.2,597.1 919.4,598.4 918.6,598.8 917.8,598.0 917.7,599.2 917.0,598.1 916.2,599.7 915.4,600.0 914.6,600.4 913.8,600.1 913.0,600.6 912.2,599.1 911.4,601.7 910.6,602.3 909.8,602.3 909.0,602.6 908.2,601.2 907.4,603.4 907.1,603.8 906.6,603.0 905.8,602.4 905.0,601.5 904.2,600.2 903.4,600.1 902.6,602.5 901.8,601.2 901.0,602.0 900.2,601.4 899.4,599.7 898.6,599.2 897.8,600.1 897.0,600.9 896.2,600.1 895.4,599.1 894.6,598.2 893.8,599.2 893.0,599.4 892.3,599.5 892.2,598.4 891.4,597.6 890.6,597.5 889.8,596.9 889.0,596.8 888.2,597.4 887.4,596.7 886.6,596.3 885.8,595.0 885.0,595.8 884.2,595.0 883.8,595.3 883.4,594.9 882.6,595.2 881.8,593.7 881.0,593.7 880.2,595.0 879.4,594.6 878.6,595.2 877.8,594.4 877.0,593.9 876.2,594.7 875.4,594.5 874.6,595.3 873.8,595.2 873.0,594.3 872.2,594.9 871.4,594.0 871.1,595.3 870.6,594.0 869.8,595.3 869.0,595.3 868.2,595.3 867.4,593.7 866.6,594.4 865.8,594.3 865.0,595.0 864.2,595.0 863.4,595.1 862.6,594.1 861.8,594.4 861.0,595.1 860.5,595.3 860.2,595.0 859.4,593.9 858.6,592.6 857.8,592.9 857.0,592.3 856.2,592.1 855.4,591.0 854.6,591.3 854.2,591.1 853.8,590.2 853.0,588.6 852.2,587.5 851.4,586.9 850.6,585.7 849.9,584.7 849.8,584.8 849.0,585.4 848.2,586.0 847.4,586.2 846.6,587.0 845.8,587.4 845.0,588.2 844.2,588.3 843.4,589.1 842.6,590.2 841.8,589.8 841.5,591.1 841.0,590.9 840.2,590.5 839.4,590.5 838.6,590.3 837.8,590.0 837.0,589.7 836.2,589.7 836.0,589.7 836.0,590.2 835.4,590.5 834.6,591.2 833.8,591.3 833.0,592.1 832.2,593.1 831.4,592.9 830.6,594.6 829.8,595.3 829.8,595.1 829.0,595.7 828.2,595.4 827.4,595.8 826.6,597.3 825.8,597.5 825.0,598.2 824.2,596.8 823.4,599.0 822.6,598.8 821.8,599.9 821.4,600.6 821.0,600.5 820.2,601.3 819.4,600.7 818.6,602.2 817.8,600.8 817.0,601.1 816.2,603.7 815.4,604.3 814.6,604.7 813.8,605.3 813.0,605.8 812.9,605.9 812.2,602.6 811.4,603.9 810.6,603.5 809.8,604.3 809.0,603.9 808.2,603.1 807.4,600.4 806.6,602.6 805.8,601.8 805.0,601.9 804.4,601.6 804.2,601.2 803.4,601.1 802.6,598.4 801.8,599.8 801.0,598.4 800.2,597.8 799.4,599.1 798.6,598.7 797.8,598.3 797.0,597.5 796.2,597.0 796.0,597.4 795.4,597.7 794.6,596.2 793.8,597.2 793.0,597.8 792.2,597.5 791.4,598.1 790.6,600.1 789.8,598.6 789.6,600.6 789.0,600.7 788.2,599.3 787.4,601.4 786.6,600.1 785.8,602.3 785.0,601.8 784.2,602.4 783.4,601.2 782.6,604.0 781.8,604.2 781.0,602.9 780.2,605.1 779.4,603.8 779.0,605.9 778.6,605.3 777.8,603.2 777.0,602.5 776.2,600.1 775.4,600.8 774.6,599.6 773.8,598.1 773.0,597.2 772.7,597.0 772.2,594.9 771.4,594.4 770.6,593.3 769.8,592.1 769.0,591.0 768.4,591.1 768.2,590.8 767.4,590.9 766.6,592.4 765.8,593.1 765.0,593.9 764.2,594.6 763.4,595.2 762.6,595.7 761.8,596.4 761.0,595.4 760.2,597.2 759.4,598.5 758.6,598.7 757.8,599.8 757.0,599.6 756.2,601.2 755.7,601.7 755.4,601.4 754.6,602.5 753.8,602.9 753.0,604.0 752.2,603.9 751.4,607.6 750.6,607.0 749.8,608.5 749.0,609.5 748.2,611.2 747.4,610.6 747.3,613.4 746.6,612.4 745.8,615.2 745.0,614.0 744.2,615.8 743.4,616.9 742.6,619.5 742.0,620.7 741.8,614.6 741.0,611.7 740.2,606.5 739.4,603.4 738.6,599.1 737.8,592.7 737.0,588.7 736.7,586.8 736.2,587.3 735.4,588.6 734.6,589.5 733.8,591.0 733.0,592.3 732.2,592.3 731.4,594.1 730.6,595.9 729.8,596.6 729.0,597.4 728.2,599.5 728.2,599.5 727.4,600.9 726.6,600.1 725.8,603.7 725.0,605.1 724.2,604.3 723.4,606.8 722.6,609.3 721.8,610.5 721.0,611.9 720.2,610.2 719.7,614.4 719.4,613.6 718.6,613.6 717.8,609.6 717.0,610.8 716.2,611.9 715.4,610.7 714.6,608.4 713.8,610.2 713.4,610.1 713.0,607.5 712.2,607.0 711.4,605.8 710.6,608.1 709.8,607.4 709.0,605.3 708.2,605.0 707.4,606.1 707.0,605.9 706.6,605.7 705.8,604.8 705.0,602.7 704.2,604.6 703.4,604.1 702.6,604.1 701.8,604.0 701.0,603.4 700.2,604.1 699.4,602.3 698.6,603.0 698.6,603.8 697.8,604.1 697.0,604.7 696.2,605.4 695.4,607.4 694.6,608.3 693.8,609.3 693.0,610.0 692.2,611.1 691.4,612.0 690.6,613.1 690.1,613.6 689.8,613.7 689.0,612.2 688.2,615.8 687.4,616.1 686.6,613.2 685.9,618.6 685.8,617.8 685.0,611.8 684.2,607.3 683.4,602.4 682.6,596.4 681.8,592.2 681.6,591.1 681.0,590.5 680.2,592.0 679.4,592.7 678.6,592.9 677.8,593.8 677.0,594.3 676.2,593.8 675.4,595.7 674.6,596.3 673.8,596.0 673.2,597.4 673.0,597.4 672.2,597.3 671.4,596.8 670.6,596.6 669.8,596.5 669.0,597.5 668.2,598.4 667.4,598.1 666.6,597.8 665.8,599.4 665.0,599.6 664.7,599.7 664.2,599.5 663.4,599.8 662.6,598.0 661.8,599.9 661.0,600.1 660.2,600.8 659.4,599.7 658.6,599.1 657.8,600.0 657.0,601.6 656.2,602.0 656.2,601.7 655.4,600.3 654.6,601.7 653.8,602.6 653.0,602.2 652.2,603.0 651.4,602.0 650.6,602.8 649.9,603.8 649.8,602.9 649.0,603.4 648.2,604.1 647.4,603.5 646.6,602.2 645.8,601.9 645.0,604.8 644.2,604.4 643.4,605.0 642.6,604.5 641.8,604.1 641.0,605.7 640.2,604.2 639.4,605.5 638.6,606.3 637.8,604.2 637.2,606.6 637.0,604.5 636.2,605.3 635.4,606.9 634.6,606.4 633.8,607.2 633.0,606.7 632.2,606.1 631.4,607.9 630.8,608.0 630.6,606.4 629.8,606.7 629.0,603.3 628.7,605.4 628.2,602.9 627.4,603.5 626.6,602.2 625.8,601.7 625.0,600.0 624.2,597.6 623.4,598.3 622.6,597.7 622.4,597.4 621.8,596.8 621.0,597.1 620.2,596.0 619.4,596.5 618.6,595.8 617.8,595.9 617.0,595.1 616.2,595.8 615.4,595.2 614.6,595.3 613.8,595.5 613.0,595.3 612.2,593.8 611.8,595.1 611.4,593.6 610.6,594.2 609.8,594.1 609.0,594.4 608.2,594.1 607.4,594.0 606.6,593.2 605.8,593.4 605.0,593.6 604.2,592.5 603.4,592.3 603.3,593.2 602.6,592.0 601.8,590.5 601.0,588.5 600.2,587.8 599.4,586.4 599.1,585.8 598.6,585.7 597.8,585.7 597.0,585.7 596.2,585.6 595.4,585.6 594.6,585.5 593.8,585.5 593.0,585.4 592.2,585.4 591.4,585.3 590.6,585.3 589.8,585.3 589.0,585.2 588.2,585.2 587.4,585.1 586.6,585.1 585.8,585.0 585.0,585.0 585.0,584.7 584.2,584.7 583.4,584.7 582.6,584.7 581.8,584.7 581.0,584.7 580.2,584.7 579.4,584.7 578.6,584.7 577.8,584.7 577.0,584.7 576.2,584.7 575.4,584.7 574.6,584.7 573.8,584.7 573.0,584.7 572.2,584.7 571.4,584.7 570.6,584.7 569.8,584.7 569.0,584.7 568.2,584.7 567.4,584.7 566.6,584.7 565.8,584.7 565.0,584.7 564.2,584.7 563.4,584.7 562.6,584.7 561.8,584.7 561.0,584.7 560.2,584.7 559.4,584.7 558.6,584.7 557.8,584.7 557.0,584.7 556.2,584.7 556.0,584.7 555.4,585.2 554.6,585.8 553.8,586.5 553.0,586.9 552.2,587.8 551.7,588.2 551.4,587.9 550.6,588.8 549.8,589.8 549.0,590.5 548.2,590.8 547.4,590.9 546.6,592.5 545.8,592.7 545.0,593.8 544.2,593.6 543.4,593.9 543.3,595.3 542.6,595.2 541.8,595.1 541.0,596.4 540.2,598.2 539.4,597.4 538.6,599.7 537.8,599.4 537.0,599.2 536.2,602.2 535.4,602.7 534.8,603.8 534.6,602.7 533.8,604.6 533.0,605.3 532.2,605.8 531.4,606.2 530.6,607.9 530.5,608.0 529.8,608.5 529.0,607.0 528.2,610.0 527.4,610.2 526.6,609.5 526.3,612.2 525.8,612.1 525.0,609.7 524.2,613.4 523.4,614.0 522.6,614.9 521.8,612.5 521.0,614.9 520.2,615.3 520.0,618.6 519.4,615.7 518.6,615.5 517.8,617.3 517.0,616.8 516.2,611.7 515.4,615.8 514.6,611.7 513.8,614.9 513.0,611.4 512.2,610.6 511.4,612.6 510.6,612.7 509.8,611.0 509.4,612.2 509.0,608.0 508.2,609.3 507.4,610.2 506.6,610.0 505.8,609.5 505.0,606.2 504.2,605.9 503.4,606.3 502.6,605.6 501.8,606.5 501.0,604.9 500.9,605.9 500.2,606.6 499.4,607.7 498.6,605.7 497.8,608.2 497.0,608.5 496.2,608.2 495.4,610.9 494.6,612.8 494.6,613.5 493.8,613.6 493.0,611.4 492.2,616.0 491.4,614.2 490.6,614.3 490.3,618.6 489.8,607.4 489.0,597.3 488.2,584.7 488.2,584.7 487.4,584.7 486.6,584.7 485.8,584.7 485.0,584.7 484.2,584.7 483.4,584.7 482.6,584.7 481.8,584.7 481.0,584.7 480.2,584.7 479.7,584.7 479.4,585.7 478.6,588.1 477.8,590.4 477.0,592.8 476.2,594.7 475.5,597.4 475.4,597.5 474.6,598.3 473.8,597.3 473.0,599.5 472.2,599.0 471.4,599.7 470.6,601.9 469.8,601.9 469.0,603.6 468.2,603.7 467.4,605.0 467.0,605.9 466.6,605.9 465.8,606.5 465.0,605.6 464.2,605.2 463.4,606.7 462.6,605.0 461.8,607.6 461.0,605.8 460.2,609.1 459.4,608.8 458.6,609.9 458.6,610.1 457.8,608.6 457.0,610.9 456.2,611.1 455.4,611.5 454.6,612.1 454.3,612.2 453.8,611.5 453.0,611.3 452.2,609.3 451.4,608.9 450.6,609.8 449.8,609.2 449.0,609.5 448.2,610.1 447.4,608.9 446.6,606.9 445.9,610.1 445.8,610.0 445.0,610.7 444.2,610.2 443.4,610.2 442.6,612.7 441.8,610.2 441.0,613.1 440.2,614.2 439.5,615.2 439.4,613.1 438.6,614.8 437.8,616.3 437.0,615.9 436.2,613.3 435.4,617.5 435.3,618.6 434.6,607.7 433.8,594.3 433.2,584.7 433.0,584.7 432.2,584.7 431.4,584.7 431.0,584.7 430.6,585.6 429.8,586.7 429.0,588.8 428.2,590.3 427.4,590.9 426.6,592.3 425.8,594.9 425.0,596.1 424.7,597.4 424.2,597.5 423.4,598.2 422.6,599.2 421.8,599.9 421.0,601.1 420.2,601.8 419.4,600.6 418.6,602.1 417.8,603.0 417.0,603.8 416.2,605.9 416.2,604.0 415.4,604.0 414.6,604.2 413.8,608.2 413.0,608.5 412.2,606.3 412.0,610.1 411.4,610.3 410.6,609.5 409.8,611.4 409.0,613.0 408.2,612.6 407.8,614.3 407.4,612.4 406.6,608.6 405.8,605.2 405.6,605.9 405.0,598.6 404.2,590.8 403.5,584.7 403.4,584.7 402.6,584.7 401.8,584.7 401.0,584.7 400.2,584.7 399.4,584.7 398.6,584.7 397.8,584.7 397.0,584.7 396.2,584.6 395.4,584.6 394.6,584.6 393.8,584.6 393.0,584.6 392.2,584.6 391.4,584.6 390.6,584.6 389.8,584.6 389.0,584.6 388.2,584.6 387.4,584.6 386.6,584.6 385.8,584.6 385.0,584.6 384.2,584.6 383.4,584.6 382.6,584.5 381.8,584.5 381.0,584.5 380.2,584.5 379.4,584.5 378.6,584.5 377.8,584.5 377.0,584.5 376.2,584.5 375.4,584.5 374.6,584.5 373.8,584.5 373.0,584.5 372.2,584.5 371.4,584.5 370.6,584.5 369.8,584.4 369.0,584.4 368.2,584.4 367.4,584.4 366.6,584.4 365.8,584.4 365.0,584.4 364.2,584.4 363.4,584.4 362.6,584.4 361.8,584.4 361.0,584.4 360.2,584.4 359.4,584.4 358.6,584.4 357.8,584.4 357.0,584.3 356.2,584.3 355.4,584.3 354.6,584.3 353.8,584.3 353.0,584.3 352.2,584.3 351.4,584.3 350.6,584.3 349.8,584.3 349.0,584.3Z" fill="#7e69fd"/><path d="M349.0,583.6 351.0,583.6 353.0,583.6 355.0,583.6 357.0,583.6 359.0,583.6 361.0,583.6 363.0,583.6 365.0,583.6 367.0,583.6 369.0,583.6 371.0,583.6 373.0,583.6 375.0,583.6 377.0,583.6 379.0,583.6 381.0,583.6 383.0,583.6 385.0,583.6 387.0,583.6 389.0,583.6 391.0,583.6 393.0,583.6 395.0,583.6 397.0,583.6 399.0,583.6 401.0,583.6 403.0,583.6 403.5,583.6 405.0,583.2 406.7,582.6 407.0,579.0 408.8,557.2 409.0,559.1 411.0,558.9 413.0,563.2 414.1,560.4 415.0,562.6 417.0,562.6 419.0,563.8 421.0,565.2 423.0,568.9 424.7,567.8 425.0,569.7 427.0,574.5 428.9,578.4 429.0,578.8 431.0,581.8 432.1,583.6 433.0,583.6 435.0,583.6 435.3,583.6 437.0,558.4 437.4,551.9 439.0,553.8 441.0,554.7 443.0,554.7 443.8,555.1 445.0,558.2 447.0,559.3 449.0,560.5 450.1,561.4 451.0,562.4 453.0,564.9 454.3,565.6 455.0,565.2 457.0,565.6 458.6,561.4 459.0,561.2 461.0,561.0 462.8,557.7 463.0,560.7 465.0,556.6 467.0,554.5 467.0,554.0 469.0,556.4 471.0,562.6 473.0,561.9 473.4,561.4 475.0,566.9 477.0,572.7 477.6,574.1 479.0,576.2 481.0,579.5 481.9,580.5 483.0,580.9 485.0,581.5 487.0,582.2 488.2,582.6 489.0,572.9 491.0,549.1 491.4,543.5 493.0,546.0 495.0,551.4 496.7,550.8 497.0,551.5 499.0,555.6 501.0,559.7 503.0,560.2 505.0,564.4 505.1,561.4 507.0,560.7 509.0,562.2 511.0,560.2 513.0,559.8 513.6,557.2 515.0,555.8 517.0,554.2 519.0,547.5 521.0,544.2 521.0,543.4 523.0,551.0 525.0,552.2 526.3,555.1 527.0,559.9 529.0,563.0 531.0,565.2 533.0,565.2 534.8,567.8 535.0,569.3 537.0,571.0 539.0,570.0 541.0,570.9 543.0,571.9 543.3,572.0 545.0,573.6 547.0,576.0 549.0,577.2 551.0,578.8 551.7,579.4 553.0,580.7 555.0,582.7 556.0,583.6 557.0,583.6 559.0,583.6 561.0,583.6 563.0,583.6 565.0,583.6 567.0,583.6 569.0,583.6 571.0,583.6 573.0,583.6 575.0,583.6 577.0,583.6 579.0,583.6 581.0,583.6 583.0,583.6 585.0,583.6 585.0,583.3 587.0,583.2 589.0,583.1 591.0,583.0 593.0,582.8 595.0,582.7 596.9,582.6 597.0,582.5 599.0,579.9 600.1,578.4 601.0,577.2 603.0,573.6 605.0,570.4 606.5,567.8 607.0,569.1 609.0,572.9 609.6,573.1 611.0,573.2 613.0,571.8 615.0,571.2 617.0,569.9 617.0,569.9 619.0,572.7 621.0,572.4 622.4,573.1 623.0,574.4 625.0,572.2 627.0,573.0 628.7,570.9 629.0,570.8 631.0,556.7 631.9,546.6 633.0,552.9 635.0,549.1 637.0,550.7 637.2,550.8 639.0,555.9 641.0,556.0 643.0,555.0 645.0,555.8 647.0,556.2 647.8,552.9 649.0,555.0 651.0,557.7 653.0,561.7 655.0,562.1 656.2,563.5 657.0,560.9 659.0,554.3 661.0,547.7 662.6,542.4 663.0,543.8 665.0,549.4 667.0,552.7 668.9,557.2 669.0,557.6 671.0,560.9 673.0,565.0 675.0,568.7 677.0,571.4 677.4,572.0 679.0,575.0 681.0,579.1 681.6,579.4 683.0,579.4 685.0,579.3 685.9,578.4 687.0,562.7 688.0,546.6 689.0,544.2 691.0,544.3 692.2,535.0 693.0,539.1 695.0,550.4 696.5,552.9 697.0,553.5 699.0,554.4 701.0,552.9 703.0,553.8 705.0,554.6 707.0,555.3 707.0,552.9 709.0,554.3 711.0,555.9 713.0,561.1 713.4,557.2 715.0,552.4 717.0,546.9 717.6,544.5 719.0,546.2 721.0,542.7 723.0,541.1 725.0,545.2 726.1,539.2 727.0,553.5 728.2,572.0 729.0,573.1 731.0,574.9 733.0,577.2 734.6,578.4 735.0,578.9 737.0,581.4 738.8,583.6 739.0,582.0 741.0,565.9 743.0,553.9 745.0,533.8 745.1,531.8 747.0,543.3 749.0,556.2 749.4,557.2 751.0,557.8 753.0,558.0 755.0,558.3 757.0,558.9 759.0,560.2 760.0,559.3 761.0,566.2 763.0,570.7 765.0,577.9 766.3,582.6 767.0,579.5 769.0,570.3 771.0,563.1 772.7,552.9 773.0,555.0 775.0,556.4 777.0,555.9 779.0,558.5 779.0,557.2 781.0,557.6 783.0,555.4 785.0,554.4 787.0,554.9 787.5,552.9 789.0,556.9 791.0,562.0 791.7,563.5 793.0,568.2 795.0,569.6 797.0,572.1 798.1,572.0 799.0,570.9 801.0,569.7 803.0,565.5 804.4,563.5 805.0,563.9 807.0,558.5 808.7,555.1 809.0,556.2 811.0,558.7 813.0,561.3 815.0,561.9 817.0,564.5 817.1,563.5 819.0,563.7 821.0,565.2 823.0,563.6 825.0,564.3 827.0,563.7 829.0,565.6 829.8,563.5 831.0,565.8 833.0,565.0 835.0,565.7 836.0,566.1 836.0,565.8 837.0,567.3 839.0,568.7 841.0,570.5 841.5,569.9 843.0,573.4 845.0,575.7 847.0,578.9 849.0,581.2 849.9,582.6 851.0,582.9 853.0,583.4 854.2,583.6 855.0,580.8 857.0,573.2 858.4,567.8 859.0,568.8 861.0,568.9 863.0,566.8 865.0,568.2 866.9,565.7 867.0,566.2 869.0,569.9 869.0,572.2 871.0,575.0 871.1,574.1 873.0,575.4 875.0,575.6 877.0,576.1 877.5,576.2 879.0,575.8 881.0,574.8 883.0,572.3 885.0,570.6 885.9,569.9 887.0,567.6 889.0,564.5 890.2,559.3 891.0,559.4 892.3,559.3 893.0,559.6 895.0,562.7 896.5,559.3 897.0,560.5 899.0,560.7 901.0,558.8 903.0,561.2 905.0,558.2 905.0,560.3 907.0,559.1 909.0,559.8 911.0,563.6 913.0,563.7 915.0,562.0 917.0,564.7 917.7,561.4 919.0,567.3 921.0,574.9 921.9,578.4 923.0,579.8 925.0,582.2 926.2,583.6 927.0,582.4 929.0,579.7 931.0,576.8 932.5,574.1 933.0,575.2 935.0,576.8 936.8,578.3 937.0,577.3 939.0,570.3 941.0,559.3 941.0,559.7 943.0,561.1 945.0,561.3 947.0,562.4 948.4,562.5 949.0,565.7 951.0,567.1 951.6,567.6 953.0,570.1 953.7,570.9 955.0,570.5 957.0,566.9 959.0,564.2 961.0,562.6 962.1,559.9 963.0,558.8 964.3,557.2 965.0,557.8 967.0,558.4 969.0,560.7 971.0,560.6 972.7,559.3 973.0,561.8 975.0,564.8 977.0,567.1 979.0,571.7 981.0,573.8 981.2,574.1 983.0,576.5 983.3,576.2 985.0,577.9 987.0,579.9 989.0,581.9 989.7,582.6 991.0,582.6 993.0,582.5 995.0,582.5 997.0,582.4 999.0,582.4 1001.0,582.3 1003.0,582.3 1005.0,582.2 1007.0,582.2 1009.0,582.1 1011.0,582.1 1013.0,582.0 1015.0,582.0 1017.0,581.9 1019.0,581.9 1021.0,581.8 1023.0,581.8 1025.0,581.7 1027.0,581.7 1029.0,581.7 1031.0,581.6 1033.0,581.6 1034.1,581.5 1035.0,581.4 1037.0,581.2 1039.0,580.9 1041.0,580.7 1042.6,580.5 1043.0,581.1 1044.7,583.6 1045.0,582.6 1047.0,576.2 1049.0,567.5 1050.0,563.5 1051.0,550.8 1053.0,526.4 1053.2,522.3 1055.0,537.7 1056.4,548.7 1057.0,553.2 1059.0,566.3 1059.5,569.9 1061.0,571.8 1063.0,571.1 1065.0,570.6 1067.0,571.5 1069.0,569.9 1071.0,570.0 1073.0,571.6 1075.0,570.0 1076.5,569.9 1077.0,569.2 1078.6,559.3 1079.0,559.0 1081.0,560.9 1082.8,556.1 1083.0,557.8 1085.0,555.8 1087.0,554.6 1087.1,552.9 1089.0,556.3 1091.0,555.9 1093.0,552.9 1093.0,616.5 1091.0,613.8 1089.0,613.7 1087.1,612.8 1087.0,612.3 1085.0,610.9 1083.0,606.7 1082.8,610.1 1081.0,605.6 1079.0,600.9 1078.6,600.9 1077.0,596.9 1076.5,596.4 1075.0,594.8 1073.0,596.2 1071.0,594.6 1069.0,594.7 1067.0,595.9 1065.0,595.9 1063.0,595.8 1061.0,594.4 1059.5,596.4 1059.0,599.6 1057.0,612.1 1056.4,618.6 1055.0,630.3 1053.2,646.1 1053.0,642.6 1051.0,620.0 1050.0,610.1 1049.0,604.2 1047.0,594.5 1045.0,585.0 1044.7,583.7 1043.0,585.4 1042.6,585.8 1041.0,585.8 1039.0,585.8 1037.0,585.8 1035.0,585.8 1034.1,585.8 1033.0,585.7 1031.0,585.7 1029.0,585.6 1027.0,585.6 1025.0,585.5 1023.0,585.5 1021.0,585.5 1019.0,585.4 1017.0,585.4 1015.0,585.3 1013.0,585.3 1011.0,585.2 1009.0,585.2 1007.0,585.1 1005.0,585.1 1003.0,585.0 1001.0,585.0 999.0,584.9 997.0,584.9 995.0,584.8 993.0,584.8 991.0,584.7 989.7,584.7 989.0,584.9 987.0,585.6 985.0,586.3 983.3,586.8 983.0,587.4 981.2,590.6 981.0,590.0 979.0,594.6 977.0,596.9 975.0,601.4 973.0,602.7 972.7,605.9 971.0,606.5 969.0,607.3 967.0,606.7 965.0,608.8 964.3,609.3 963.0,609.7 962.1,610.1 961.0,607.5 959.0,605.5 957.0,606.7 955.0,606.3 953.7,606.7 953.0,604.8 951.6,605.9 951.0,604.4 949.0,604.6 948.4,606.5 947.0,606.7 945.0,605.1 943.0,605.4 941.0,608.0 941.0,608.0 939.0,597.4 937.0,590.0 936.8,589.0 935.0,590.6 933.0,591.8 932.5,593.2 931.0,590.8 929.0,587.8 927.0,584.9 926.2,583.6 925.0,585.1 923.0,587.6 921.9,588.9 921.0,592.6 919.0,598.1 917.7,605.9 917.0,605.3 915.0,606.8 913.0,607.1 911.0,607.8 909.0,607.8 907.0,606.6 905.0,609.7 905.0,610.1 903.0,609.8 901.0,608.7 899.0,607.5 897.0,605.3 896.5,608.7 895.0,608.4 893.0,604.9 892.3,608.0 891.0,603.9 890.2,605.2 889.0,603.3 887.0,600.2 885.9,599.5 885.0,597.8 883.0,596.6 881.0,594.8 879.0,593.7 877.5,593.2 877.0,592.5 875.0,595.2 873.0,596.8 871.1,599.5 871.0,599.5 869.0,600.0 869.0,601.6 867.0,600.5 866.9,601.2 865.0,600.5 863.0,599.7 861.0,599.5 859.0,599.4 858.4,599.5 857.0,593.9 855.0,586.7 854.2,583.6 853.0,583.9 851.0,584.4 849.9,584.7 849.0,586.1 847.0,589.0 845.0,591.7 843.0,595.1 841.5,597.4 841.0,595.6 839.0,599.1 837.0,600.7 836.0,601.5 836.0,601.2 835.0,600.6 833.0,601.5 831.0,602.0 829.8,603.8 829.0,603.1 827.0,601.0 825.0,603.7 823.0,603.2 821.0,603.4 819.0,603.5 817.1,603.8 817.0,602.9 815.0,602.1 813.0,605.4 811.0,608.2 809.0,609.5 808.7,610.1 807.0,607.6 805.0,604.5 804.4,603.8 803.0,601.8 801.0,599.2 799.0,594.6 798.1,595.3 797.0,596.0 795.0,601.1 793.0,603.4 791.7,608.0 791.0,609.1 789.0,611.3 787.5,614.4 787.0,612.7 785.0,610.6 783.0,612.0 781.0,607.6 779.0,610.1 779.0,607.8 777.0,607.4 775.0,612.8 773.0,610.2 772.7,614.3 771.0,603.7 769.0,595.1 767.0,587.8 766.3,584.7 765.0,589.1 763.0,596.9 761.0,604.2 760.0,608.0 759.0,606.1 757.0,608.3 755.0,607.4 753.0,609.4 751.0,606.9 749.4,610.1 749.0,612.3 747.0,624.4 745.1,635.5 745.0,633.4 743.0,615.0 741.0,601.0 739.0,585.3 738.8,583.7 737.0,585.9 735.0,588.1 734.6,588.9 733.0,590.1 731.0,591.4 729.0,594.5 728.2,595.3 727.0,611.5 726.1,627.1 725.0,621.9 723.0,619.6 721.0,623.4 719.0,620.2 717.6,622.8 717.0,619.9 715.0,611.5 713.4,610.1 713.0,609.3 711.0,611.1 709.0,613.0 707.0,614.4 707.0,613.0 705.0,613.0 703.0,613.5 701.0,609.4 699.0,614.4 697.0,613.3 696.5,614.4 695.0,619.2 693.0,623.8 692.2,631.3 691.0,622.6 689.0,617.6 688.0,620.7 687.0,606.0 685.9,588.9 685.0,588.3 683.0,587.8 681.6,587.9 681.0,589.0 679.0,591.2 677.4,595.3 677.0,595.9 675.0,599.2 673.0,600.3 671.0,605.8 669.0,609.2 668.9,610.1 667.0,614.6 665.0,618.5 663.0,623.9 662.6,624.9 661.0,616.5 659.0,613.0 657.0,606.3 656.2,603.8 655.0,603.4 653.0,607.7 651.0,609.9 649.0,612.7 647.8,614.4 647.0,611.6 645.0,610.2 643.0,612.5 641.0,614.8 639.0,611.2 637.2,616.5 637.0,615.7 635.0,618.0 633.0,618.5 631.9,620.7 631.0,613.8 629.0,598.2 628.7,596.4 627.0,595.5 625.0,595.1 623.0,593.4 622.4,594.2 621.0,594.3 619.0,596.1 617.0,597.4 617.0,595.9 615.0,595.4 613.0,593.9 611.0,594.7 609.6,594.2 609.0,593.7 607.0,598.6 606.5,599.5 605.0,596.3 603.0,593.5 601.0,590.3 600.1,588.9 599.0,587.2 597.0,584.8 596.9,584.7 595.0,584.6 593.0,584.5 591.0,584.3 589.0,584.2 587.0,584.1 585.0,584.0 585.0,583.6 583.0,583.6 581.0,583.6 579.0,583.6 577.0,583.6 575.0,583.6 573.0,583.6 571.0,583.6 569.0,583.6 567.0,583.6 565.0,583.6 563.0,583.6 561.0,583.6 559.0,583.6 557.0,583.6 556.0,583.6 555.0,584.6 553.0,586.6 551.7,587.9 551.0,587.8 549.0,589.0 547.0,590.1 545.0,591.4 543.3,593.2 543.0,593.4 541.0,594.9 539.0,596.0 537.0,597.7 535.0,599.3 534.8,599.5 533.0,601.1 531.0,605.1 529.0,605.6 527.0,608.9 526.3,612.2 525.0,615.1 523.0,614.8 521.0,623.9 521.0,620.6 519.0,618.2 517.0,615.0 515.0,610.9 513.6,610.1 513.0,606.2 511.0,606.5 509.0,603.9 507.0,604.2 505.1,603.8 505.0,602.3 503.0,606.9 501.0,610.0 499.0,613.0 497.0,615.2 496.7,616.5 495.0,616.3 493.0,619.6 491.4,622.8 491.0,617.4 489.0,593.3 488.2,584.7 487.0,585.1 485.0,585.8 483.0,586.4 481.9,586.8 481.0,587.7 479.0,590.6 477.6,593.2 477.0,594.6 475.0,600.1 473.4,605.9 473.0,605.4 471.0,608.7 469.0,611.7 467.0,614.3 467.0,613.9 465.0,612.3 463.0,610.1 462.8,610.1 461.0,606.1 459.0,607.1 458.6,606.9 457.0,605.1 455.0,601.8 454.3,603.8 453.0,602.2 451.0,605.4 450.1,605.9 449.0,606.0 447.0,607.9 445.0,605.7 443.8,610.1 443.0,610.7 441.0,612.9 439.0,612.2 437.4,616.4 437.0,610.4 435.3,583.7 435.0,583.6 433.0,583.6 432.1,583.6 431.0,585.5 429.0,588.8 428.9,588.9 427.0,593.7 425.0,596.6 424.7,599.5 423.0,600.8 421.0,601.3 419.0,604.0 417.0,605.6 415.0,604.8 414.1,608.0 413.0,606.1 411.0,608.2 409.0,609.4 408.8,610.1 407.0,588.2 406.7,584.7 405.0,584.1 403.5,583.6 403.0,583.6 401.0,583.6 399.0,583.6 397.0,583.6 395.0,583.6 393.0,583.6 391.0,583.6 389.0,583.6 387.0,583.6 385.0,583.6 383.0,583.6 381.0,583.6 379.0,583.6 377.0,583.6 375.0,583.6 373.0,583.6 371.0,583.6 369.0,583.6 367.0,583.6 365.0,583.6 363.0,583.6 361.0,583.6 359.0,583.6 357.0,583.6 355.0,583.6 353.0,583.6 351.0,583.6 349.0,583.6Z" fill="none" stroke="#f2d870" stroke-width="1.6" stroke-linejoin="round"/></g>
  <!-- playheads -->
  <rect x="588" y="121" width="3.5" height="188" fill="#6b5ce6"/>
  <rect x="606" y="310" width="3.5" height="188" fill="#6b5ce6"/>
</svg>

<div class="a fname" style="left:345px;top:124px">Male-Vocal-1-1.wav</div>
<div class="a fname" style="left:348px;top:315px">Male-Vocal-2-1.wav</div>

<div class="a tname" style="left:237px;top:152.3px;color:#f5dc72;letter-spacing:-0.5px">GUIDE</div>
<div class="a cap" style="left:237px;top:178px;background:#f7df79">Capture</div>
<div class="a tname" style="left:237px;top:332px;color:#ec9d55;letter-spacing:-0.6px">DUB</div>
<div class="a cap" style="left:237px;top:354px;background:#ea9c55">Capture</div>
<div class="a tname" style="left:237px;top:512px;color:#7e68f4;letter-spacing:-0.25px">OUTPUT</div>

<!-- track icon boxes -->
<div class="a ibox" style="left:1068px;top:121px"></div>
<div class="a ibox" style="left:1068px;top:310px"></div>
<div class="a ibox" style="left:1068px;top:499px"></div>

<div id="tb" class="a"></div>
<div class="a" style="left:223px;top:705px;width:871px;height:5px;background:#353242;border-radius:0 0 3px 3px"></div>
<div class="a" style="left:344px;top:683px;width:27px;height:21px;border-radius:4px;background:#45434f"></div>

<div id="ov" class="a"></div>
<div class="a" style="left:273px;top:723px;width:1px;height:71px;background:#55535f"></div>
<div class="a" style="left:1042px;top:723px;width:1px;height:71px;background:#55535f"></div>
<div class="a" style="left:274px;top:758px;width:768px;height:1px;background:#4d4b58"></div>

<svg class="a" style="left:0;top:0" width="1540" height="850" viewBox="0 0 1540 850">
  <path d="M275.0,740.7 276.0,740.7 277.0,740.7 278.0,740.7 279.0,740.7 280.0,740.7 281.0,740.7 282.0,740.7 283.0,740.7 284.0,740.7 285.0,740.7 286.0,740.7 287.0,740.7 288.0,740.7 289.0,740.7 290.0,740.7 291.0,740.7 292.0,740.7 293.0,740.7 294.0,740.7 295.0,740.7 296.0,740.7 297.0,740.7 298.0,740.7 299.0,740.7 300.0,740.7 301.0,740.7 302.0,740.7 303.0,740.7 304.0,740.7 305.0,740.7 306.0,740.7 307.0,740.7 308.0,740.7 309.0,740.7 310.0,740.7 311.0,740.7 312.0,740.7 313.0,740.7 314.0,740.7 315.0,740.7 316.0,740.7 317.0,740.7 318.0,740.7 319.0,740.7 320.0,740.7 321.0,740.7 322.0,740.7 323.0,740.7 324.0,740.7 325.0,740.7 326.0,740.7 327.0,740.7 328.0,740.7 329.0,738.9 330.0,738.0 331.0,736.9 332.0,736.3 333.0,735.7 334.0,735.4 335.0,735.8 336.0,736.0 337.0,735.7 338.0,736.2 339.0,736.2 340.0,735.7 341.0,736.0 342.0,736.6 343.0,736.4 344.0,736.7 345.0,737.1 346.0,737.4 347.0,737.6 348.0,738.1 349.0,738.4 350.0,738.7 351.0,738.9 352.0,739.1 353.0,740.1 354.0,740.3 355.0,740.4 356.0,740.4 357.0,740.4 358.0,736.4 359.0,735.0 360.0,735.2 361.0,734.9 362.0,735.0 363.0,735.6 364.0,734.9 365.0,735.5 366.0,735.5 367.0,735.6 368.0,735.5 369.0,735.8 370.0,735.7 371.0,735.9 372.0,735.9 373.0,735.8 374.0,735.6 375.0,736.0 376.0,735.9 377.0,736.0 378.0,735.6 379.0,735.9 380.0,735.8 381.0,735.4 382.0,735.7 383.0,735.1 384.0,735.5 385.0,735.5 386.0,735.0 387.0,735.1 388.0,734.8 389.0,735.4 390.0,735.4 391.0,735.0 392.0,735.3 393.0,735.0 394.0,735.6 395.0,735.7 396.0,735.4 397.0,735.8 398.0,735.6 399.0,736.5 400.0,737.5 401.0,738.4 402.0,740.1 403.0,740.1 404.0,740.2 405.0,740.2 406.0,740.2 407.0,740.2 408.0,740.3 409.0,740.3 410.0,740.3 411.0,740.4 412.0,739.1 413.0,735.2 414.0,733.2 415.0,733.9 416.0,733.3 417.0,733.5 418.0,733.8 419.0,734.4 420.0,734.5 421.0,734.7 422.0,734.6 423.0,735.0 424.0,735.3 425.0,735.7 426.0,735.7 427.0,735.0 428.0,735.0 429.0,734.9 430.0,734.9 431.0,734.8 432.0,734.8 433.0,735.1 434.0,734.7 435.0,735.0 436.0,734.6 437.0,734.6 438.0,734.1 439.0,734.2 440.0,733.7 441.0,734.4 442.0,733.7 443.0,733.4 444.0,733.3 445.0,734.2 446.0,734.3 447.0,734.5 448.0,734.7 449.0,734.8 450.0,734.8 451.0,735.2 452.0,735.8 453.0,735.8 454.0,736.0 455.0,736.4 456.0,736.3 457.0,736.7 458.0,737.1 459.0,737.1 460.0,737.3 461.0,737.5 462.0,737.4 463.0,737.7 464.0,738.0 465.0,738.2 466.0,738.1 467.0,738.3 468.0,738.6 469.0,738.7 470.0,739.0 471.0,738.9 472.0,739.3 473.0,740.1 474.0,740.2 475.0,740.3 476.0,740.4 477.0,740.5 478.0,740.5 479.0,740.6 480.0,740.7 481.0,740.7 482.0,740.7 483.0,740.7 484.0,740.7 485.0,740.7 486.0,740.7 487.0,740.7 488.0,740.7 489.0,740.7 490.0,740.7 491.0,740.7 492.0,740.7 493.0,740.7 494.0,740.7 495.0,740.7 496.0,740.7 497.0,740.7 498.0,740.7 499.0,740.7 500.0,740.7 501.0,740.7 502.0,740.7 503.0,740.7 504.0,740.7 505.0,740.7 506.0,740.7 507.0,740.7 508.0,740.7 509.0,740.7 510.0,740.7 511.0,740.7 512.0,740.7 513.0,740.7 514.0,740.7 515.0,740.7 516.0,740.7 517.0,740.7 518.0,740.5 519.0,740.4 520.0,740.2 521.0,740.1 522.0,739.1 523.0,738.9 524.0,738.8 525.0,738.3 526.0,738.0 527.0,737.8 528.0,737.6 529.0,737.8 530.0,737.6 531.0,737.5 532.0,737.6 533.0,737.6 534.0,737.5 535.0,738.0 536.0,737.6 537.0,737.7 538.0,738.0 539.0,737.7 540.0,737.8 541.0,738.0 542.0,738.0 543.0,738.2 544.0,738.2 545.0,738.1 546.0,738.2 547.0,738.4 548.0,738.5 549.0,738.2 550.0,738.2 551.0,736.5 552.0,733.9 553.0,733.9 554.0,733.7 555.0,733.9 556.0,733.4 557.0,733.5 558.0,734.1 559.0,733.3 560.0,733.9 561.0,733.5 562.0,733.3 563.0,734.0 564.0,733.5 565.0,734.2 566.0,733.8 567.0,734.1 568.0,733.5 569.0,733.6 570.0,733.8 571.0,734.1 572.0,734.1 573.0,733.7 574.0,734.3 575.0,734.2 576.0,734.3 577.0,734.1 578.0,734.4 579.0,734.2 580.0,733.9 581.0,733.3 582.0,733.3 583.0,733.2 584.0,733.3 585.0,733.3 586.0,733.7 587.0,733.7 588.0,734.1 589.0,733.6 590.0,734.0 591.0,734.8 592.0,734.5 593.0,735.1 594.0,735.0 595.0,735.5 596.0,736.2 597.0,736.5 598.0,736.3 599.0,737.0 600.0,737.6 601.0,738.0 602.0,738.4 603.0,739.0 604.0,740.2 605.0,740.4 606.0,740.4 607.0,740.4 608.0,735.7 609.0,731.4 610.0,732.1 611.0,732.2 612.0,732.5 613.0,731.7 614.0,732.0 615.0,732.0 616.0,731.9 617.0,732.8 618.0,732.9 619.0,733.1 620.0,733.6 621.0,733.8 622.0,734.2 623.0,734.5 624.0,734.0 625.0,734.4 626.0,734.5 627.0,734.5 628.0,733.8 629.0,734.3 630.0,734.4 631.0,734.3 632.0,733.9 633.0,734.1 634.0,733.9 635.0,734.0 636.0,735.0 637.0,735.7 638.0,736.0 639.0,734.0 640.0,732.9 641.0,733.0 642.0,732.7 643.0,733.2 644.0,732.9 645.0,732.6 646.0,733.0 647.0,732.7 648.0,732.4 649.0,732.2 650.0,732.7 651.0,734.7 652.0,736.3 653.0,736.6 654.0,737.1 655.0,737.4 656.0,737.7 657.0,738.2 658.0,738.4 659.0,738.8 660.0,739.1 661.0,740.2 662.0,740.4 663.0,740.4 664.0,740.4 665.0,740.4 666.0,735.1 667.0,730.9 668.0,731.0 669.0,731.9 670.0,733.5 671.0,734.5 672.0,735.2 673.0,735.4 674.0,735.5 675.0,735.2 676.0,735.8 677.0,735.6 678.0,735.9 679.0,735.9 680.0,735.7 681.0,735.3 682.0,735.7 683.0,736.0 684.0,736.6 685.0,737.4 686.0,738.4 687.0,738.9 688.0,738.8 689.0,738.3 690.0,737.6 691.0,737.0 692.0,736.5 693.0,735.9 694.0,735.0 695.0,734.9 696.0,734.8 697.0,735.0 698.0,734.7 699.0,735.4 700.0,735.2 701.0,735.2 702.0,735.3 703.0,735.0 704.0,735.2 705.0,735.2 706.0,735.0 707.0,735.4 708.0,735.2 709.0,735.2 710.0,735.4 711.0,735.5 712.0,735.3 713.0,735.5 714.0,736.2 715.0,736.3 716.0,736.8 717.0,737.2 718.0,737.6 719.0,738.0 720.0,737.8 721.0,737.6 722.0,737.0 723.0,736.5 724.0,736.2 725.0,735.6 726.0,735.5 727.0,735.2 728.0,735.2 729.0,735.3 730.0,735.5 731.0,735.2 732.0,735.0 733.0,735.4 734.0,735.6 735.0,735.2 736.0,735.2 737.0,734.9 738.0,735.6 739.0,735.5 740.0,735.4 741.0,735.3 742.0,735.5 743.0,735.7 744.0,736.2 745.0,736.2 746.0,736.4 747.0,736.4 748.0,736.6 749.0,736.8 750.0,736.5 751.0,736.7 752.0,737.1 753.0,737.1 754.0,737.0 755.0,737.2 756.0,737.6 757.0,737.6 758.0,737.4 759.0,737.6 760.0,737.6 761.0,737.8 762.0,737.5 763.0,737.8 764.0,737.7 765.0,737.8 766.0,738.3 767.0,738.4 768.0,738.8 769.0,738.9 770.0,739.4 771.0,740.2 772.0,740.4 773.0,740.4 774.0,740.4 775.0,740.4 776.0,740.4 777.0,740.4 778.0,739.1 779.0,738.5 780.0,737.7 781.0,737.4 782.0,737.6 783.0,737.3 784.0,737.3 785.0,737.4 786.0,737.4 787.0,737.3 788.0,737.2 789.0,737.4 790.0,737.8 791.0,738.4 792.0,738.7 793.0,739.1 794.0,740.2 795.0,740.4 796.0,740.5 797.0,740.5 798.0,740.5 799.0,740.5 800.0,740.5 801.0,740.5 802.0,740.4 803.0,740.4 804.0,740.4 805.0,740.4 806.0,740.2 807.0,738.8 808.0,738.0 809.0,737.3 810.0,736.3 811.0,736.2 812.0,736.2 813.0,736.0 814.0,736.0 815.0,735.9 816.0,735.6 817.0,735.9 818.0,735.5 819.0,736.1 820.0,735.7 821.0,735.7 822.0,736.0 823.0,735.4 824.0,735.5 825.0,735.7 826.0,735.7 827.0,735.2 828.0,735.5 829.0,735.8 830.0,736.0 831.0,736.0 832.0,735.8 833.0,735.5 834.0,735.7 835.0,735.8 836.0,736.0 837.0,735.7 838.0,735.8 839.0,735.7 840.0,735.7 841.0,736.1 842.0,735.7 843.0,736.5 844.0,737.7 845.0,738.7 846.0,740.5 847.0,740.6 848.0,740.4 849.0,740.3 850.0,740.2 851.0,739.3 852.0,738.9 853.0,738.8 854.0,739.1 855.0,739.2 856.0,740.2 857.0,740.3 858.0,740.4 859.0,739.0 860.0,738.2 861.0,737.4 862.0,736.7 863.0,736.0 864.0,736.2 865.0,736.3 866.0,736.6 867.0,736.7 868.0,736.7 869.0,736.8 870.0,736.9 871.0,737.1 872.0,737.4 873.0,737.6 874.0,737.3 875.0,737.0 876.0,737.2 877.0,736.9 878.0,736.9 879.0,736.8 880.0,736.7 881.0,736.3 882.0,736.5 883.0,736.0 884.0,736.1 885.0,735.8 886.0,735.4 887.0,735.7 888.0,736.1 889.0,736.1 890.0,736.0 891.0,736.1 892.0,736.2 893.0,736.9 894.0,736.9 895.0,737.2 896.0,737.1 897.0,737.4 898.0,737.6 899.0,737.8 900.0,737.8 901.0,737.8 902.0,738.0 903.0,738.4 904.0,738.5 905.0,738.8 906.0,739.2 907.0,740.1 908.0,740.3 909.0,740.4 910.0,740.6 911.0,740.6 912.0,740.6 913.0,740.6 914.0,740.6 915.0,740.6 916.0,740.6 917.0,740.6 918.0,740.6 919.0,740.6 920.0,740.6 921.0,740.6 922.0,740.6 923.0,740.6 924.0,740.6 925.0,740.6 926.0,740.6 927.0,740.6 928.0,740.6 929.0,740.6 930.0,740.6 931.0,740.6 932.0,740.6 933.0,740.6 934.0,740.6 935.0,740.6 936.0,740.6 937.0,740.6 938.0,740.6 939.0,740.6 940.0,740.6 941.0,740.6 942.0,740.6 943.0,740.6 944.0,740.6 945.0,740.6 946.0,740.6 947.0,740.5 948.0,740.5 949.0,740.5 950.0,740.5 951.0,740.5 952.0,740.5 953.0,740.5 954.0,740.5 955.0,740.5 956.0,740.5 957.0,740.5 958.0,740.5 959.0,740.5 960.0,740.5 961.0,740.4 962.0,740.4 963.0,740.4 964.0,740.4 965.0,740.4 966.0,740.4 967.0,740.4 968.0,740.4 969.0,740.4 970.0,740.4 971.0,738.7 972.0,737.8 973.0,735.7 974.0,731.7 975.0,730.0 976.0,731.2 977.0,732.9 978.0,733.9 979.0,735.5 980.0,736.8 981.0,737.2 982.0,737.9 983.0,738.4 984.0,738.4 985.0,738.4 986.0,738.4 987.0,738.3 988.0,738.0 989.0,738.3 990.0,738.2 991.0,738.3 992.0,738.2 993.0,738.2 994.0,738.0 995.0,737.9 996.0,738.0 997.0,737.8 998.0,737.8 999.0,737.2 1000.0,736.7 1001.0,735.7 1002.0,735.5 1003.0,735.8 1004.0,735.2 1005.0,735.4 1006.0,735.0 1007.0,735.3 1008.0,735.5 1009.0,734.9 1010.0,734.7 1011.0,734.8 1012.0,734.7 1013.0,734.5 1014.0,734.4 1015.0,734.5 1016.0,735.0 1017.0,734.7 1018.0,734.8 1019.0,734.9 1020.0,734.5 1021.0,735.0 1022.0,735.1 1023.0,735.1 1024.0,735.0 1025.0,735.0 1026.0,735.2 1027.0,736.6 1028.0,738.2 1029.0,737.4 1030.0,735.8 1031.0,735.0 1032.0,734.2 1033.0,734.6 1034.0,734.3 1035.0,734.8 1036.0,734.3 1037.0,734.6 1038.0,734.6 1039.0,734.6 1040.0,734.9 1041.0,735.1 1042.0,735.5 1042.0,747.1 1041.0,747.2 1040.0,747.6 1039.0,747.4 1038.0,747.5 1037.0,747.6 1036.0,747.6 1035.0,747.9 1034.0,747.9 1033.0,747.6 1032.0,748.0 1031.0,748.0 1030.0,746.7 1029.0,745.0 1028.0,744.0 1027.0,746.1 1026.0,747.6 1025.0,747.4 1024.0,747.1 1023.0,747.5 1022.0,747.8 1021.0,747.5 1020.0,748.0 1019.0,747.8 1018.0,747.7 1017.0,747.6 1016.0,747.9 1015.0,747.7 1014.0,747.4 1013.0,747.4 1012.0,747.7 1011.0,747.1 1010.0,747.6 1009.0,747.1 1008.0,747.0 1007.0,747.5 1006.0,746.8 1005.0,747.0 1004.0,747.4 1003.0,747.2 1002.0,747.0 1001.0,746.5 1000.0,745.6 999.0,745.1 998.0,744.6 997.0,744.4 996.0,744.3 995.0,744.4 994.0,744.2 993.0,744.4 992.0,744.2 991.0,744.4 990.0,744.1 989.0,744.3 988.0,744.3 987.0,744.3 986.0,744.3 985.0,744.2 984.0,744.2 983.0,744.1 982.0,744.4 981.0,745.0 980.0,745.6 979.0,746.3 978.0,748.0 977.0,749.4 976.0,751.1 975.0,752.6 974.0,751.4 973.0,746.9 972.0,744.3 971.0,743.5 970.0,742.0 969.0,742.0 968.0,742.0 967.0,742.0 966.0,742.0 965.0,742.0 964.0,742.0 963.0,742.0 962.0,742.0 961.0,742.0 960.0,741.9 959.0,741.9 958.0,741.9 957.0,741.9 956.0,741.9 955.0,741.9 954.0,741.9 953.0,741.9 952.0,741.9 951.0,741.9 950.0,741.9 949.0,741.9 948.0,741.9 947.0,741.9 946.0,741.8 945.0,741.8 944.0,741.8 943.0,741.8 942.0,741.8 941.0,741.8 940.0,741.8 939.0,741.8 938.0,741.8 937.0,741.8 936.0,741.8 935.0,741.8 934.0,741.8 933.0,741.8 932.0,741.8 931.0,741.8 930.0,741.8 929.0,741.8 928.0,741.8 927.0,741.8 926.0,741.8 925.0,741.8 924.0,741.8 923.0,741.8 922.0,741.8 921.0,741.8 920.0,741.8 919.0,741.8 918.0,741.8 917.0,741.8 916.0,741.8 915.0,741.8 914.0,741.8 913.0,741.8 912.0,741.8 911.0,741.8 910.0,741.8 909.0,742.0 908.0,742.1 907.0,742.3 906.0,743.4 905.0,743.6 904.0,743.9 903.0,744.3 902.0,744.4 901.0,744.5 900.0,744.7 899.0,744.6 898.0,745.0 897.0,745.3 896.0,745.1 895.0,745.4 894.0,745.6 893.0,746.0 892.0,745.9 891.0,745.9 890.0,746.5 889.0,746.1 888.0,746.6 887.0,746.5 886.0,746.9 885.0,746.3 884.0,746.6 883.0,746.1 882.0,746.4 881.0,745.8 880.0,746.0 879.0,745.5 878.0,745.7 877.0,745.6 876.0,745.5 875.0,745.1 874.0,745.0 873.0,744.8 872.0,745.0 871.0,745.2 870.0,745.6 869.0,745.5 868.0,745.8 867.0,745.5 866.0,746.0 865.0,746.4 864.0,746.0 863.0,746.3 862.0,745.8 861.0,745.0 860.0,744.1 859.0,743.3 858.0,742.0 857.0,742.1 856.0,742.2 855.0,743.0 854.0,743.4 853.0,743.5 852.0,743.5 851.0,743.2 850.0,742.2 849.0,742.1 848.0,742.0 847.0,741.8 846.0,741.9 845.0,743.7 844.0,744.8 843.0,746.1 842.0,746.1 841.0,746.3 840.0,746.4 839.0,746.3 838.0,746.3 837.0,746.7 836.0,746.2 835.0,746.9 834.0,746.7 833.0,746.7 832.0,746.4 831.0,746.7 830.0,746.6 829.0,746.4 828.0,747.0 827.0,747.0 826.0,746.9 825.0,747.0 824.0,746.7 823.0,746.8 822.0,746.5 821.0,746.7 820.0,746.6 819.0,746.9 818.0,746.8 817.0,746.5 816.0,746.3 815.0,746.7 814.0,746.6 813.0,746.7 812.0,746.8 811.0,746.5 810.0,745.8 809.0,745.0 808.0,744.3 807.0,743.6 806.0,742.2 805.0,742.0 804.0,742.0 803.0,742.0 802.0,742.0 801.0,741.9 800.0,741.9 799.0,741.9 798.0,741.9 797.0,741.9 796.0,741.9 795.0,742.0 794.0,742.2 793.0,743.4 792.0,743.6 791.0,744.0 790.0,744.6 789.0,745.0 788.0,745.2 787.0,744.9 786.0,744.9 785.0,745.0 784.0,744.9 783.0,744.7 782.0,745.0 781.0,745.0 780.0,744.6 779.0,744.0 778.0,743.3 777.0,742.0 776.0,742.0 775.0,742.0 774.0,742.0 773.0,742.0 772.0,742.0 771.0,742.2 770.0,743.2 769.0,743.3 768.0,743.6 767.0,744.1 766.0,744.4 765.0,744.4 764.0,744.5 763.0,744.4 762.0,744.6 761.0,744.6 760.0,744.6 759.0,745.0 758.0,744.9 757.0,744.8 756.0,745.3 755.0,745.0 754.0,745.4 753.0,745.5 752.0,745.4 751.0,745.4 750.0,745.9 749.0,745.9 748.0,746.2 747.0,746.3 746.0,746.0 745.0,746.3 744.0,746.6 743.0,746.8 742.0,746.7 741.0,746.9 740.0,746.7 739.0,746.7 738.0,747.2 737.0,747.3 736.0,747.0 735.0,747.4 734.0,747.4 733.0,746.9 732.0,747.2 731.0,746.9 730.0,747.1 729.0,747.0 728.0,746.9 727.0,746.8 726.0,746.7 725.0,746.8 724.0,746.3 723.0,746.0 722.0,745.3 721.0,745.0 720.0,744.7 719.0,744.7 718.0,744.8 717.0,745.1 716.0,745.5 715.0,745.8 714.0,746.5 713.0,746.7 712.0,746.6 711.0,747.4 710.0,747.5 709.0,746.9 708.0,747.1 707.0,747.6 706.0,747.0 705.0,747.3 704.0,747.1 703.0,747.5 702.0,747.3 701.0,747.3 700.0,747.5 699.0,747.4 698.0,747.5 697.0,747.5 696.0,747.0 695.0,747.4 694.0,747.2 693.0,746.7 692.0,746.0 691.0,745.2 690.0,744.5 689.0,744.2 688.0,743.4 687.0,743.4 686.0,744.0 685.0,744.9 684.0,745.7 683.0,746.1 682.0,746.7 681.0,747.0 680.0,746.8 679.0,746.6 678.0,747.1 677.0,747.1 676.0,746.6 675.0,746.8 674.0,746.6 673.0,746.5 672.0,747.0 671.0,747.8 670.0,748.6 669.0,750.3 668.0,750.9 667.0,752.1 666.0,746.9 665.0,742.0 664.0,742.0 663.0,742.0 662.0,742.0 661.0,742.2 660.0,743.2 659.0,743.7 658.0,744.1 657.0,744.1 656.0,744.7 655.0,745.1 654.0,745.3 653.0,745.4 652.0,745.9 651.0,747.7 650.0,750.0 649.0,749.5 648.0,749.3 647.0,749.6 646.0,749.5 645.0,749.8 644.0,749.5 643.0,749.8 642.0,749.7 641.0,749.6 640.0,750.2 639.0,747.8 638.0,746.6 637.0,746.7 636.0,747.6 635.0,748.1 634.0,748.1 633.0,748.1 632.0,748.5 631.0,748.4 630.0,748.5 629.0,748.6 628.0,748.4 627.0,747.9 626.0,748.5 625.0,748.0 624.0,748.5 623.0,748.0 622.0,748.1 621.0,748.3 620.0,748.8 619.0,748.8 618.0,750.0 617.0,749.5 616.0,750.5 615.0,749.9 614.0,750.5 613.0,751.1 612.0,750.7 611.0,750.2 610.0,750.1 609.0,750.0 608.0,746.7 607.0,742.0 606.0,742.0 605.0,742.0 604.0,742.2 603.0,743.5 602.0,744.0 601.0,744.5 600.0,744.8 599.0,745.3 598.0,746.1 597.0,746.2 596.0,746.4 595.0,747.0 594.0,746.9 593.0,747.2 592.0,747.9 591.0,748.0 590.0,748.1 589.0,748.5 588.0,748.8 587.0,748.7 586.0,749.2 585.0,749.8 584.0,749.5 583.0,749.7 582.0,748.9 581.0,748.9 580.0,749.3 579.0,748.2 578.0,748.5 577.0,748.0 576.0,748.0 575.0,748.7 574.0,748.0 573.0,748.1 572.0,748.5 571.0,748.8 570.0,748.5 569.0,748.9 568.0,748.2 567.0,748.5 566.0,748.4 565.0,748.5 564.0,749.0 563.0,748.5 562.0,748.6 561.0,749.1 560.0,749.0 559.0,748.7 558.0,749.1 557.0,748.6 556.0,748.9 555.0,748.9 554.0,748.8 553.0,748.7 552.0,748.6 551.0,745.9 550.0,743.9 549.0,744.0 548.0,744.0 547.0,744.0 546.0,744.3 545.0,744.3 544.0,744.4 543.0,744.2 542.0,744.5 541.0,744.2 540.0,744.5 539.0,744.4 538.0,744.6 537.0,744.5 536.0,744.6 535.0,744.5 534.0,744.5 533.0,744.5 532.0,744.8 531.0,744.9 530.0,744.8 529.0,744.9 528.0,744.8 527.0,744.4 526.0,744.2 525.0,743.9 524.0,743.8 523.0,743.6 522.0,743.3 521.0,742.3 520.0,742.2 519.0,742.0 518.0,741.9 517.0,741.8 516.0,741.8 515.0,741.8 514.0,741.8 513.0,741.8 512.0,741.8 511.0,741.8 510.0,741.8 509.0,741.8 508.0,741.8 507.0,741.8 506.0,741.8 505.0,741.8 504.0,741.8 503.0,741.8 502.0,741.8 501.0,741.8 500.0,741.8 499.0,741.8 498.0,741.8 497.0,741.8 496.0,741.8 495.0,741.8 494.0,741.8 493.0,741.8 492.0,741.8 491.0,741.8 490.0,741.8 489.0,741.8 488.0,741.8 487.0,741.8 486.0,741.8 485.0,741.8 484.0,741.8 483.0,741.8 482.0,741.8 481.0,741.8 480.0,741.8 479.0,741.8 478.0,741.9 477.0,741.9 476.0,742.0 475.0,742.1 474.0,742.2 473.0,742.3 472.0,743.3 471.0,743.2 470.0,743.5 469.0,743.5 468.0,744.0 467.0,744.1 466.0,744.3 465.0,744.5 464.0,744.3 463.0,744.6 462.0,744.7 461.0,744.9 460.0,745.0 459.0,745.2 458.0,745.4 457.0,745.6 456.0,745.9 455.0,745.8 454.0,746.3 453.0,746.7 452.0,746.6 451.0,746.9 450.0,747.3 449.0,747.7 448.0,747.8 447.0,748.0 446.0,748.6 445.0,748.5 444.0,748.4 443.0,749.0 442.0,748.1 441.0,748.6 440.0,748.0 439.0,748.2 438.0,747.9 437.0,747.6 436.0,747.9 435.0,748.2 434.0,747.7 433.0,747.8 432.0,747.7 431.0,747.8 430.0,747.2 429.0,747.1 428.0,746.9 427.0,747.0 426.0,746.7 425.0,746.6 424.0,747.4 423.0,747.1 422.0,747.8 421.0,747.9 420.0,748.0 419.0,748.4 418.0,748.0 417.0,748.5 416.0,749.1 415.0,749.3 414.0,748.6 413.0,747.4 412.0,743.3 411.0,742.0 410.0,742.1 409.0,742.1 408.0,742.1 407.0,742.2 406.0,742.2 405.0,742.2 404.0,742.2 403.0,742.3 402.0,742.3 401.0,743.8 400.0,744.7 399.0,746.4 398.0,747.0 397.0,747.0 396.0,746.9 395.0,746.9 394.0,746.8 393.0,747.3 392.0,747.0 391.0,746.8 390.0,747.2 389.0,746.9 388.0,747.4 387.0,747.5 386.0,747.3 385.0,747.5 384.0,747.1 383.0,746.8 382.0,747.2 381.0,747.1 380.0,746.9 379.0,746.7 378.0,746.4 377.0,746.4 376.0,746.5 375.0,746.7 374.0,746.3 373.0,746.7 372.0,746.3 371.0,746.1 370.0,746.7 369.0,746.5 368.0,746.6 367.0,746.6 366.0,746.9 365.0,746.7 364.0,747.4 363.0,747.3 362.0,747.4 361.0,747.5 360.0,747.2 359.0,747.9 358.0,745.8 357.0,742.0 356.0,742.0 355.0,742.0 354.0,742.1 353.0,742.3 352.0,743.2 351.0,743.5 350.0,743.7 349.0,744.2 348.0,744.5 347.0,744.9 346.0,745.0 345.0,745.2 344.0,745.3 343.0,745.6 342.0,746.2 341.0,746.6 340.0,746.5 339.0,746.4 338.0,746.3 337.0,746.9 336.0,746.8 335.0,746.9 334.0,746.8 333.0,746.9 332.0,746.3 331.0,745.2 330.0,744.5 329.0,743.3 328.0,741.8 327.0,741.8 326.0,741.8 325.0,741.8 324.0,741.8 323.0,741.8 322.0,741.8 321.0,741.8 320.0,741.8 319.0,741.8 318.0,741.8 317.0,741.8 316.0,741.8 315.0,741.8 314.0,741.8 313.0,741.8 312.0,741.8 311.0,741.8 310.0,741.8 309.0,741.8 308.0,741.8 307.0,741.8 306.0,741.8 305.0,741.8 304.0,741.8 303.0,741.8 302.0,741.8 301.0,741.8 300.0,741.8 299.0,741.8 298.0,741.8 297.0,741.8 296.0,741.8 295.0,741.8 294.0,741.8 293.0,741.8 292.0,741.8 291.0,741.8 290.0,741.8 289.0,741.8 288.0,741.8 287.0,741.8 286.0,741.8 285.0,741.8 284.0,741.8 283.0,741.8 282.0,741.8 281.0,741.8 280.0,741.8 279.0,741.8 278.0,741.8 277.0,741.8 276.0,741.8 275.0,741.8Z" fill="#f9e27a"/>
  <path d="M280.0,775.1 281.0,775.1 282.0,775.1 283.0,775.1 284.0,775.1 285.0,775.1 286.0,775.1 287.0,775.1 288.0,775.1 289.0,775.1 290.0,775.1 291.0,775.1 292.0,775.1 293.0,775.1 294.0,775.1 295.0,775.1 296.0,775.1 297.0,775.1 298.0,775.1 299.0,775.1 300.0,775.1 301.0,775.1 302.0,775.1 303.0,775.1 304.0,775.1 305.0,775.1 306.0,775.1 307.0,775.1 308.0,775.1 309.0,775.1 310.0,775.1 311.0,775.1 312.0,775.1 313.0,775.1 314.0,775.1 315.0,775.1 316.0,775.1 317.0,775.1 318.0,775.1 319.0,775.1 320.0,775.1 321.0,775.1 322.0,775.1 323.0,775.1 324.0,775.1 325.0,775.1 326.0,775.1 327.0,775.1 328.0,775.1 329.0,775.1 330.0,775.1 331.0,775.1 332.0,775.1 333.0,775.1 334.0,773.3 335.0,771.9 336.0,771.1 337.0,770.5 338.0,769.9 339.0,769.1 340.0,768.0 341.0,767.4 342.0,767.8 343.0,768.3 344.0,768.1 345.0,769.0 346.0,769.4 347.0,769.8 348.0,769.9 349.0,770.0 350.0,770.4 351.0,771.2 352.0,771.1 353.0,771.8 354.0,771.9 355.0,772.3 356.0,772.8 357.0,773.2 358.0,773.7 359.0,774.7 360.0,774.8 361.0,774.8 362.0,774.8 363.0,774.8 364.0,770.8 365.0,767.3 366.0,766.4 367.0,766.9 368.0,766.5 369.0,767.1 370.0,767.5 371.0,768.3 372.0,768.1 373.0,768.9 374.0,768.8 375.0,768.8 376.0,768.6 377.0,768.8 378.0,768.8 379.0,768.7 380.0,768.3 381.0,768.7 382.0,768.5 383.0,768.1 384.0,768.4 385.0,767.8 386.0,767.8 387.0,768.0 388.0,767.9 389.0,767.5 390.0,768.3 391.0,768.0 392.0,768.4 393.0,768.2 394.0,768.6 395.0,768.7 396.0,769.4 397.0,769.1 398.0,769.4 399.0,769.4 400.0,770.0 401.0,769.5 402.0,770.6 403.0,771.5 404.0,772.9 405.0,774.8 406.0,774.8 407.0,774.8 408.0,774.8 409.0,774.8 410.0,774.8 411.0,774.8 412.0,774.8 413.0,774.8 414.0,774.8 415.0,774.8 416.0,774.8 417.0,774.8 418.0,774.8 419.0,772.5 420.0,767.8 421.0,766.6 422.0,767.4 423.0,767.9 424.0,767.4 425.0,768.3 426.0,768.5 427.0,769.1 428.0,769.3 429.0,769.8 430.0,769.9 431.0,769.8 432.0,770.0 433.0,769.6 434.0,769.3 435.0,769.7 436.0,769.2 437.0,769.2 438.0,768.9 439.0,769.2 440.0,769.0 441.0,769.1 442.0,768.5 443.0,768.7 444.0,768.5 445.0,767.9 446.0,768.0 447.0,768.0 448.0,767.5 449.0,768.1 450.0,767.6 451.0,767.0 452.0,767.6 453.0,767.6 454.0,766.7 455.0,767.6 456.0,768.4 457.0,768.5 458.0,768.7 459.0,769.6 460.0,769.9 461.0,770.2 462.0,770.3 463.0,770.6 464.0,771.2 465.0,771.5 466.0,771.8 467.0,771.9 468.0,772.2 469.0,772.6 470.0,772.8 471.0,773.1 472.0,773.1 473.0,773.5 474.0,773.6 475.0,774.6 476.0,774.8 477.0,774.8 478.0,774.8 479.0,774.8 480.0,774.8 481.0,774.8 482.0,774.8 483.0,774.8 484.0,774.8 485.0,774.8 486.0,774.8 487.0,774.8 488.0,774.8 489.0,774.8 490.0,774.9 491.0,774.9 492.0,774.9 493.0,774.9 494.0,774.9 495.0,774.9 496.0,774.9 497.0,774.9 498.0,774.9 499.0,774.9 500.0,774.9 501.0,774.9 502.0,774.9 503.0,774.9 504.0,774.9 505.0,774.9 506.0,774.9 507.0,774.9 508.0,774.9 509.0,775.0 510.0,775.0 511.0,775.0 512.0,775.0 513.0,775.0 514.0,775.0 515.0,775.0 516.0,775.0 517.0,775.0 518.0,775.0 519.0,775.0 520.0,775.0 521.0,775.0 522.0,775.0 523.0,775.0 524.0,775.0 525.0,775.0 526.0,775.0 527.0,775.1 528.0,774.6 529.0,773.0 530.0,772.1 531.0,772.1 532.0,772.0 533.0,772.0 534.0,771.9 535.0,772.2 536.0,772.0 537.0,771.8 538.0,772.2 539.0,772.0 540.0,771.9 541.0,771.9 542.0,772.2 543.0,772.1 544.0,772.2 545.0,772.4 546.0,772.1 547.0,772.3 548.0,772.1 549.0,772.3 550.0,772.2 551.0,772.3 552.0,772.2 553.0,772.4 554.0,772.3 555.0,771.8 556.0,771.1 557.0,770.6 558.0,770.1 559.0,769.7 560.0,769.1 561.0,769.0 562.0,768.9 563.0,769.1 564.0,769.1 565.0,768.7 566.0,768.9 567.0,768.9 568.0,769.1 569.0,768.9 570.0,769.2 571.0,768.9 572.0,769.3 573.0,769.0 574.0,769.2 575.0,769.4 576.0,769.6 577.0,769.3 578.0,769.3 579.0,769.4 580.0,769.8 581.0,769.9 582.0,769.8 583.0,769.7 584.0,769.9 585.0,769.9 586.0,769.9 587.0,770.6 588.0,770.7 589.0,770.6 590.0,771.0 591.0,770.8 592.0,770.7 593.0,771.2 594.0,771.0 595.0,771.4 596.0,771.3 597.0,771.3 598.0,771.5 599.0,771.7 600.0,771.6 601.0,771.9 602.0,772.2 603.0,772.1 604.0,772.4 605.0,772.3 606.0,772.4 607.0,772.6 608.0,772.9 609.0,773.4 610.0,774.6 611.0,774.9 612.0,775.0 613.0,774.9 614.0,774.8 615.0,770.6 616.0,768.0 617.0,766.7 618.0,766.1 619.0,766.8 620.0,767.8 621.0,767.7 622.0,768.0 623.0,768.6 624.0,769.2 625.0,769.8 626.0,769.9 627.0,770.3 628.0,770.5 629.0,770.6 630.0,770.6 631.0,770.4 632.0,770.3 633.0,770.5 634.0,769.9 635.0,769.8 636.0,770.6 637.0,770.4 638.0,771.0 639.0,771.3 640.0,771.4 641.0,772.1 642.0,772.2 643.0,771.5 644.0,770.8 645.0,770.0 646.0,769.1 647.0,768.8 648.0,768.1 649.0,767.5 650.0,768.3 651.0,768.8 652.0,769.1 653.0,769.3 654.0,769.8 655.0,770.2 656.0,770.5 657.0,771.1 658.0,771.5 659.0,772.0 660.0,772.1 661.0,772.6 662.0,772.7 663.0,773.0 664.0,773.3 665.0,773.7 666.0,774.6 667.0,774.8 668.0,774.9 669.0,775.0 670.0,774.9 671.0,774.9 672.0,774.8 673.0,769.7 674.0,766.8 675.0,766.7 676.0,767.6 677.0,767.9 678.0,768.7 679.0,769.0 680.0,769.5 681.0,770.2 682.0,770.9 683.0,771.0 684.0,771.4 685.0,772.0 686.0,772.1 687.0,772.4 688.0,772.8 689.0,773.0 690.0,773.5 691.0,773.8 692.0,774.7 693.0,774.7 694.0,774.6 695.0,774.5 696.0,773.1 697.0,772.2 698.0,771.1 699.0,770.7 700.0,770.6 701.0,770.6 702.0,770.4 703.0,770.4 704.0,770.1 705.0,770.2 706.0,770.4 707.0,770.2 708.0,770.6 709.0,770.6 710.0,770.2 711.0,770.2 712.0,770.4 713.0,770.3 714.0,770.3 715.0,770.6 716.0,770.7 717.0,770.6 718.0,771.1 719.0,771.3 720.0,771.6 721.0,772.0 722.0,772.4 723.0,772.6 724.0,773.0 725.0,773.1 726.0,772.9 727.0,772.8 728.0,772.7 729.0,772.1 730.0,772.1 731.0,771.9 732.0,771.6 733.0,771.6 734.0,771.0 735.0,771.0 736.0,770.5 737.0,770.6 738.0,770.1 739.0,769.8 740.0,770.3 741.0,770.5 742.0,770.4 743.0,770.6 744.0,770.7 745.0,771.2 746.0,771.1 747.0,771.1 748.0,771.6 749.0,771.8 750.0,771.8 751.0,772.3 752.0,772.1 753.0,772.5 754.0,772.7 755.0,773.0 756.0,772.8 757.0,773.1 758.0,772.9 759.0,773.0 760.0,773.1 761.0,773.1 762.0,773.1 763.0,773.3 764.0,773.4 765.0,773.5 766.0,773.4 767.0,773.5 768.0,773.6 769.0,773.6 770.0,773.6 771.0,773.7 772.0,774.5 773.0,774.5 774.0,774.6 775.0,774.6 776.0,774.6 777.0,774.6 778.0,774.7 779.0,774.7 780.0,774.7 781.0,774.7 782.0,774.8 783.0,773.6 784.0,773.1 785.0,772.6 786.0,772.5 787.0,772.6 788.0,772.5 789.0,772.5 790.0,772.7 791.0,772.7 792.0,772.4 793.0,772.7 794.0,772.6 795.0,772.7 796.0,772.5 797.0,772.9 798.0,772.7 799.0,772.7 800.0,772.7 801.0,772.7 802.0,772.5 803.0,772.6 804.0,772.4 805.0,772.4 806.0,772.4 807.0,772.0 808.0,772.0 809.0,771.8 810.0,772.1 811.0,771.8 812.0,771.9 813.0,771.5 814.0,771.8 815.0,771.4 816.0,771.3 817.0,771.4 818.0,771.4 819.0,771.4 820.0,771.3 821.0,771.2 822.0,770.8 823.0,770.6 824.0,771.1 825.0,770.7 826.0,770.5 827.0,771.0 828.0,770.5 829.0,770.9 830.0,770.9 831.0,770.9 832.0,770.8 833.0,770.3 834.0,770.6 835.0,770.3 836.0,770.8 837.0,770.2 838.0,770.3 839.0,770.4 840.0,770.3 841.0,770.8 842.0,771.3 843.0,771.5 844.0,771.7 845.0,772.1 846.0,772.5 847.0,773.0 848.0,773.3 849.0,773.5 850.0,774.6 851.0,774.7 852.0,774.9 853.0,775.1 854.0,774.8 855.0,774.6 856.0,773.6 857.0,773.1 858.0,772.7 859.0,772.7 860.0,773.0 861.0,772.9 862.0,773.0 863.0,773.0 864.0,773.3 865.0,773.3 866.0,773.1 867.0,772.7 868.0,772.5 869.0,772.2 870.0,772.0 871.0,771.4 872.0,771.4 873.0,770.8 874.0,771.0 875.0,770.6 876.0,770.8 877.0,770.8 878.0,770.7 879.0,770.8 880.0,770.2 881.0,770.2 882.0,770.5 883.0,770.0 884.0,770.1 885.0,770.2 886.0,770.4 887.0,770.1 888.0,769.9 889.0,769.8 890.0,769.9 891.0,770.1 892.0,769.7 893.0,769.4 894.0,769.8 895.0,769.5 896.0,770.0 897.0,769.2 898.0,769.8 899.0,769.8 900.0,770.2 901.0,770.7 902.0,770.7 903.0,771.1 904.0,771.4 905.0,772.0 906.0,772.1 907.0,772.6 908.0,772.7 909.0,773.4 910.0,773.6 911.0,774.6 912.0,774.8 913.0,774.9 914.0,775.1 915.0,775.1 916.0,775.1 917.0,775.1 918.0,775.1 919.0,775.1 920.0,775.1 921.0,775.1 922.0,775.1 923.0,775.1 924.0,775.1 925.0,775.1 926.0,775.1 927.0,775.1 928.0,775.1 929.0,775.1 930.0,775.1 931.0,775.1 932.0,775.1 933.0,775.1 934.0,775.1 935.0,775.1 936.0,775.1 937.0,775.1 938.0,775.1 939.0,775.1 940.0,775.1 941.0,775.1 942.0,775.1 943.0,775.1 944.0,775.1 945.0,775.1 946.0,775.1 947.0,775.1 948.0,775.1 949.0,775.1 950.0,775.1 951.0,775.0 952.0,775.0 953.0,775.0 954.0,775.0 955.0,775.0 956.0,775.0 957.0,775.0 958.0,775.0 959.0,774.9 960.0,774.9 961.0,774.9 962.0,774.9 963.0,774.9 964.0,774.9 965.0,774.9 966.0,774.9 967.0,774.8 968.0,774.8 969.0,774.8 970.0,774.8 971.0,774.8 972.0,774.8 973.0,774.5 974.0,773.4 975.0,772.9 976.0,771.1 977.0,769.8 978.0,768.2 979.0,768.1 980.0,769.2 981.0,768.7 982.0,769.6 983.0,769.3 984.0,770.0 985.0,770.3 986.0,770.6 987.0,770.6 988.0,771.0 989.0,771.2 990.0,770.6 991.0,771.0 992.0,770.8 993.0,770.9 994.0,770.9 995.0,771.1 996.0,770.9 997.0,771.0 998.0,770.9 999.0,771.0 1000.0,771.0 1001.0,770.4 1002.0,770.4 1003.0,770.1 1004.0,769.7 1005.0,770.0 1006.0,769.7 1007.0,769.0 1008.0,768.9 1009.0,769.2 1010.0,769.4 1011.0,769.8 1012.0,769.6 1013.0,769.6 1014.0,770.1 1015.0,770.1 1016.0,769.7 1017.0,769.8 1018.0,769.7 1019.0,769.4 1020.0,769.1 1021.0,768.6 1022.0,768.7 1023.0,768.3 1024.0,767.9 1025.0,767.9 1026.0,768.2 1027.0,768.2 1028.0,768.3 1029.0,768.3 1030.0,768.5 1031.0,768.5 1032.0,768.7 1033.0,768.8 1034.0,769.3 1035.0,768.8 1036.0,768.8 1037.0,768.6 1038.0,768.4 1039.0,768.7 1040.0,768.7 1041.0,768.2 1042.0,768.1 1042.0,783.1 1041.0,782.8 1040.0,783.2 1039.0,782.4 1038.0,782.1 1037.0,782.7 1036.0,782.3 1035.0,782.3 1034.0,782.2 1033.0,782.5 1032.0,782.3 1031.0,782.2 1030.0,782.3 1029.0,783.0 1028.0,783.1 1027.0,783.0 1026.0,782.6 1025.0,783.6 1024.0,783.0 1023.0,783.1 1022.0,782.9 1021.0,782.0 1020.0,782.5 1019.0,781.9 1018.0,781.8 1017.0,781.3 1016.0,781.5 1015.0,781.5 1014.0,781.6 1013.0,781.3 1012.0,781.6 1011.0,782.2 1010.0,781.6 1009.0,782.2 1008.0,782.3 1007.0,782.0 1006.0,781.6 1005.0,781.2 1004.0,781.1 1003.0,780.9 1002.0,780.6 1001.0,780.4 1000.0,780.4 999.0,780.1 998.0,780.1 997.0,780.5 996.0,780.1 995.0,780.6 994.0,780.5 993.0,780.5 992.0,780.6 991.0,780.1 990.0,780.3 989.0,780.2 988.0,780.1 987.0,780.5 986.0,781.0 985.0,781.1 984.0,781.5 983.0,781.5 982.0,781.9 981.0,782.0 980.0,782.7 979.0,782.6 978.0,782.9 977.0,781.5 976.0,779.7 975.0,778.6 974.0,778.0 973.0,776.7 972.0,776.4 971.0,776.4 970.0,776.4 969.0,776.4 968.0,776.4 967.0,776.4 966.0,776.4 965.0,776.3 964.0,776.3 963.0,776.3 962.0,776.3 961.0,776.3 960.0,776.3 959.0,776.3 958.0,776.2 957.0,776.2 956.0,776.2 955.0,776.2 954.0,776.2 953.0,776.2 952.0,776.2 951.0,776.2 950.0,776.1 949.0,776.1 948.0,776.1 947.0,776.1 946.0,776.1 945.0,776.1 944.0,776.1 943.0,776.1 942.0,776.1 941.0,776.1 940.0,776.1 939.0,776.1 938.0,776.1 937.0,776.1 936.0,776.1 935.0,776.1 934.0,776.1 933.0,776.1 932.0,776.1 931.0,776.1 930.0,776.1 929.0,776.1 928.0,776.1 927.0,776.1 926.0,776.1 925.0,776.1 924.0,776.1 923.0,776.1 922.0,776.1 921.0,776.1 920.0,776.1 919.0,776.1 918.0,776.1 917.0,776.1 916.0,776.1 915.0,776.1 914.0,776.1 913.0,776.3 912.0,776.4 911.0,776.6 910.0,777.5 909.0,778.0 908.0,778.2 907.0,778.6 906.0,779.2 905.0,779.6 904.0,779.8 903.0,780.3 902.0,780.6 901.0,781.1 900.0,781.3 899.0,781.5 898.0,782.1 897.0,781.7 896.0,781.6 895.0,781.3 894.0,781.1 893.0,781.3 892.0,781.2 891.0,781.6 890.0,781.5 889.0,781.0 888.0,781.0 887.0,781.2 886.0,781.2 885.0,781.0 884.0,780.9 883.0,780.8 882.0,780.7 881.0,780.7 880.0,780.6 879.0,780.5 878.0,780.5 877.0,780.7 876.0,780.6 875.0,780.4 874.0,780.6 873.0,780.1 872.0,779.7 871.0,779.6 870.0,779.3 869.0,779.0 868.0,778.9 867.0,778.6 866.0,778.4 865.0,778.0 864.0,777.9 863.0,778.2 862.0,778.3 861.0,778.2 860.0,778.4 859.0,778.4 858.0,778.5 857.0,778.0 856.0,777.7 855.0,776.6 854.0,776.4 853.0,776.1 852.0,776.3 851.0,776.5 850.0,776.6 849.0,777.6 848.0,777.8 847.0,778.4 846.0,778.4 845.0,778.8 844.0,779.4 843.0,779.6 842.0,780.0 841.0,780.3 840.0,780.4 839.0,780.6 838.0,780.5 837.0,780.6 836.0,781.0 835.0,780.4 834.0,780.8 833.0,780.5 832.0,780.5 831.0,780.4 830.0,780.2 829.0,780.7 828.0,780.2 827.0,780.2 826.0,780.3 825.0,780.4 824.0,780.6 823.0,780.2 822.0,780.6 821.0,780.0 820.0,780.3 819.0,779.9 818.0,780.0 817.0,780.0 816.0,780.0 815.0,779.8 814.0,779.7 813.0,779.5 812.0,779.3 811.0,779.5 810.0,779.3 809.0,779.0 808.0,779.2 807.0,779.0 806.0,778.8 805.0,778.7 804.0,778.8 803.0,778.7 802.0,778.6 801.0,778.7 800.0,778.4 799.0,778.5 798.0,778.4 797.0,778.5 796.0,778.6 795.0,778.5 794.0,778.5 793.0,778.8 792.0,778.6 791.0,778.5 790.0,778.7 789.0,778.5 788.0,778.8 787.0,778.6 786.0,778.6 785.0,778.4 784.0,778.1 783.0,777.5 782.0,776.4 781.0,776.5 780.0,776.5 779.0,776.5 778.0,776.5 777.0,776.6 776.0,776.6 775.0,776.6 774.0,776.6 773.0,776.7 772.0,776.7 771.0,777.6 770.0,777.6 769.0,777.8 768.0,777.7 767.0,777.8 766.0,777.9 765.0,778.0 764.0,777.8 763.0,778.0 762.0,778.0 761.0,778.0 760.0,778.2 759.0,778.3 758.0,778.2 757.0,778.4 756.0,778.5 755.0,778.5 754.0,778.4 753.0,778.7 752.0,778.9 751.0,779.1 750.0,779.3 749.0,779.4 748.0,779.7 747.0,779.9 746.0,780.1 745.0,780.2 744.0,780.7 743.0,780.4 742.0,780.9 741.0,780.8 740.0,781.2 739.0,781.2 738.0,781.1 737.0,780.6 736.0,780.4 735.0,780.1 734.0,780.3 733.0,779.8 732.0,779.5 731.0,779.5 730.0,779.0 729.0,778.9 728.0,778.6 727.0,778.4 726.0,778.2 725.0,778.1 724.0,778.2 723.0,778.5 722.0,778.9 721.0,779.0 720.0,779.6 719.0,779.7 718.0,780.0 717.0,780.4 716.0,780.6 715.0,780.5 714.0,780.5 713.0,780.5 712.0,780.5 711.0,781.0 710.0,780.6 709.0,780.8 708.0,780.5 707.0,781.0 706.0,781.1 705.0,781.0 704.0,781.0 703.0,780.8 702.0,780.5 701.0,780.9 700.0,781.1 699.0,780.5 698.0,779.7 697.0,779.1 696.0,778.2 695.0,776.7 694.0,776.6 693.0,776.5 692.0,776.5 691.0,777.4 690.0,777.9 689.0,778.2 688.0,778.4 687.0,778.6 686.0,779.0 685.0,779.3 684.0,779.7 683.0,780.1 682.0,780.7 681.0,781.0 680.0,781.3 679.0,782.5 678.0,782.9 677.0,782.8 676.0,783.6 675.0,784.1 674.0,784.6 673.0,781.0 672.0,776.4 671.0,776.3 670.0,776.3 669.0,776.2 668.0,776.3 667.0,776.4 666.0,776.6 665.0,777.7 664.0,777.8 663.0,778.3 662.0,778.5 661.0,778.6 660.0,779.0 659.0,779.5 658.0,779.8 657.0,779.9 656.0,780.7 655.0,780.7 654.0,781.6 653.0,781.5 652.0,782.6 651.0,782.6 650.0,782.8 649.0,783.8 648.0,783.2 647.0,782.7 646.0,782.1 645.0,781.4 644.0,780.6 643.0,779.9 642.0,779.0 641.0,779.0 640.0,779.4 639.0,779.7 638.0,780.4 637.0,780.6 636.0,781.1 635.0,780.9 634.0,781.3 633.0,781.2 632.0,780.9 631.0,781.0 630.0,780.4 629.0,780.3 628.0,780.6 627.0,781.0 626.0,781.1 625.0,781.7 624.0,782.3 623.0,782.8 622.0,783.0 621.0,783.7 620.0,784.1 619.0,783.8 618.0,785.0 617.0,785.0 616.0,783.5 615.0,780.0 614.0,776.4 613.0,776.3 612.0,776.2 611.0,776.3 610.0,776.6 609.0,777.8 608.0,778.5 607.0,778.7 606.0,778.8 605.0,778.8 604.0,778.9 603.0,778.9 602.0,779.1 601.0,779.1 600.0,779.5 599.0,779.6 598.0,779.4 597.0,779.5 596.0,779.7 595.0,780.1 594.0,780.0 593.0,780.2 592.0,780.2 591.0,780.5 590.0,780.3 589.0,780.8 588.0,780.6 587.0,780.9 586.0,780.7 585.0,781.1 584.0,781.6 583.0,781.1 582.0,781.2 581.0,781.5 580.0,781.2 579.0,781.3 578.0,781.9 577.0,781.3 576.0,781.9 575.0,781.6 574.0,781.8 573.0,781.8 572.0,782.1 571.0,782.0 570.0,782.3 569.0,781.7 568.0,781.8 567.0,782.6 566.0,782.1 565.0,782.6 564.0,782.1 563.0,782.7 562.0,782.6 561.0,782.8 560.0,782.3 559.0,781.7 558.0,780.7 557.0,780.3 556.0,779.9 555.0,779.4 554.0,778.8 553.0,779.0 552.0,778.8 551.0,778.8 550.0,778.8 549.0,779.1 548.0,779.0 547.0,778.8 546.0,779.1 545.0,779.0 544.0,779.3 543.0,779.0 542.0,779.2 541.0,779.1 540.0,779.3 539.0,779.2 538.0,779.1 537.0,779.1 536.0,779.1 535.0,779.2 534.0,779.3 533.0,779.4 532.0,779.1 531.0,779.4 530.0,778.7 529.0,778.3 528.0,776.6 527.0,776.1 526.0,776.2 525.0,776.2 524.0,776.2 523.0,776.2 522.0,776.2 521.0,776.2 520.0,776.2 519.0,776.2 518.0,776.2 517.0,776.2 516.0,776.2 515.0,776.2 514.0,776.2 513.0,776.2 512.0,776.2 511.0,776.2 510.0,776.2 509.0,776.2 508.0,776.3 507.0,776.3 506.0,776.3 505.0,776.3 504.0,776.3 503.0,776.3 502.0,776.3 501.0,776.3 500.0,776.3 499.0,776.3 498.0,776.3 497.0,776.3 496.0,776.3 495.0,776.3 494.0,776.3 493.0,776.3 492.0,776.3 491.0,776.3 490.0,776.3 489.0,776.4 488.0,776.4 487.0,776.4 486.0,776.4 485.0,776.4 484.0,776.4 483.0,776.4 482.0,776.4 481.0,776.4 480.0,776.4 479.0,776.4 478.0,776.4 477.0,776.4 476.0,776.4 475.0,776.6 474.0,777.6 473.0,777.8 472.0,777.8 471.0,778.2 470.0,778.3 469.0,778.8 468.0,779.0 467.0,779.2 466.0,779.5 465.0,779.8 464.0,780.2 463.0,780.1 462.0,780.9 461.0,781.3 460.0,781.3 459.0,781.8 458.0,782.0 457.0,782.6 456.0,783.3 455.0,783.2 454.0,784.4 453.0,784.4 452.0,783.5 451.0,783.2 450.0,783.3 449.0,783.4 448.0,783.3 447.0,782.8 446.0,783.4 445.0,783.4 444.0,783.1 443.0,782.8 442.0,782.3 441.0,782.8 440.0,782.1 439.0,782.3 438.0,782.4 437.0,782.3 436.0,781.6 435.0,781.7 434.0,781.4 433.0,781.4 432.0,781.8 431.0,781.0 430.0,781.6 429.0,781.9 428.0,781.6 427.0,782.8 426.0,783.1 425.0,783.4 424.0,783.3 423.0,783.5 422.0,784.3 421.0,784.8 420.0,783.5 419.0,778.8 418.0,776.4 417.0,776.4 416.0,776.4 415.0,776.4 414.0,776.4 413.0,776.4 412.0,776.4 411.0,776.4 410.0,776.4 409.0,776.4 408.0,776.4 407.0,776.4 406.0,776.4 405.0,776.4 404.0,778.2 403.0,779.6 402.0,781.2 401.0,781.4 400.0,781.3 399.0,781.5 398.0,782.0 397.0,782.3 396.0,782.4 395.0,782.5 394.0,782.8 393.0,782.2 392.0,783.0 391.0,782.7 390.0,783.2 389.0,783.2 388.0,782.9 387.0,783.2 386.0,783.7 385.0,783.2 384.0,783.1 383.0,783.1 382.0,783.1 381.0,783.0 380.0,782.5 379.0,783.1 378.0,782.8 377.0,782.2 376.0,782.7 375.0,782.3 374.0,782.5 373.0,783.0 372.0,783.4 371.0,783.3 370.0,783.2 369.0,784.0 368.0,783.7 367.0,784.5 366.0,784.9 365.0,783.6 364.0,780.3 363.0,776.4 362.0,776.4 361.0,776.4 360.0,776.4 359.0,776.5 358.0,777.6 357.0,777.9 356.0,778.4 355.0,778.6 354.0,779.1 353.0,779.7 352.0,779.7 351.0,780.2 350.0,780.5 349.0,780.7 348.0,781.3 347.0,781.7 346.0,781.9 345.0,782.5 344.0,783.2 343.0,783.2 342.0,784.1 341.0,783.6 340.0,782.9 339.0,782.6 338.0,781.8 337.0,780.9 336.0,780.1 335.0,778.9 334.0,778.1 333.0,776.1 332.0,776.1 331.0,776.1 330.0,776.1 329.0,776.1 328.0,776.1 327.0,776.1 326.0,776.1 325.0,776.1 324.0,776.1 323.0,776.1 322.0,776.1 321.0,776.1 320.0,776.1 319.0,776.1 318.0,776.1 317.0,776.1 316.0,776.1 315.0,776.1 314.0,776.1 313.0,776.1 312.0,776.1 311.0,776.1 310.0,776.1 309.0,776.1 308.0,776.1 307.0,776.1 306.0,776.1 305.0,776.1 304.0,776.1 303.0,776.1 302.0,776.1 301.0,776.1 300.0,776.1 299.0,776.1 298.0,776.1 297.0,776.1 296.0,776.1 295.0,776.1 294.0,776.1 293.0,776.1 292.0,776.1 291.0,776.1 290.0,776.1 289.0,776.1 288.0,776.1 287.0,776.1 286.0,776.1 285.0,776.1 284.0,776.1 283.0,776.1 282.0,776.1 281.0,776.1 280.0,776.1Z" fill="#e99b52"/>
  <!-- trash -->
  <g fill="#8c8a95">
    <rect x="238.5" y="750" width="18" height="3" rx="1"/>
    <rect x="244.5" y="747.8" width="6" height="3" rx="1"/>
    <path d="M240.3,754 L254.7,754 L253.3,769 L241.7,769 Z"/>
  </g>
  <!-- toolbar icons -->
  <g fill="#c4c2cb">
    <path d="M352,694 L353.2,692 L354,688.2 L355,690.5 L356,689.2 L357.3,692 L363,694 L357.3,695.8 L356,698.5 L355,697.2 L354,699.8 L353.2,696.5 Z"/>
  </g>
  <g fill="#8d8b96">
    <path d="M378.9,698.7 L378.9,692 L380,690.7 L381.4,696.5 L383.5,692 L385.6,696.5 L387.7,689.2 L389.9,698.7 Z"/>
  </g>
</svg>

<!-- right panel -->
<div class="a" style="left:1113px;top:124px;font-size:14px;font-weight:bold;color:#f3f2f5;letter-spacing:-0.35px">MATCH TIMING</div>
<div class="a" style="left:1251.5px;top:125px;width:20px;height:13.5px;border-radius:7px;background:#735ff2"></div>
<div class="a" style="left:1261.5px;top:128.5px;width:6.5px;height:6.5px;border-radius:50%;background:#d9d7e0"></div>
<div class="a lbl" style="left:1113px;top:164px">MAX DIFFERENCE</div>
<div class="a" style="left:1113px;top:186px;width:160px;height:72px;background:#322f40;border-radius:2px"></div>
<svg class="a" style="left:0;top:0" width="1540" height="850" viewBox="0 0 1540 850">
  <path d="M1182.6,228.5 A19,19 0 1 1 1207.4,228.5" fill="none" stroke="#4a4857" stroke-width="1.3"/>
  <path d="M1176.5,210 A19,19 0 0 0 1182.6,228.5" fill="none" stroke="#e8954a" stroke-width="1.6"/>
  <circle cx="1195" cy="213.9" r="13" fill="#d9d8dd"/>
  <rect x="1182" y="213.2" width="9.5" height="1.5" fill="#6a6870"/>
  <!-- clock -->
  <circle cx="1308.9" cy="119" r="9.7" fill="none" stroke="#f4f3f6" stroke-width="2.2"/>
  <path d="M1310.8,114.6 L1308.1,118.1 L1313.4,121.2" fill="none" stroke="#f4f3f6" stroke-width="2" stroke-linecap="round" stroke-linejoin="round"/>
  <!-- sliders -->
  <g stroke="#8e8c96" stroke-width="1.7" fill="none">
    <line x1="1302.4" y1="146.8" x2="1302.4" y2="168"/>
    <line x1="1308.7" y1="146.8" x2="1308.7" y2="168"/>
    <line x1="1315.4" y1="146.8" x2="1315.4" y2="168"/>
    <circle cx="1302.4" cy="152.1" r="2.5" fill="#22202b"/>
    <circle cx="1308.7" cy="160.5" r="2.5" fill="#22202b"/>
    <circle cx="1315.4" cy="155.2" r="2.5" fill="#22202b"/>
  </g>
  </svg>
<div class="a" style="left:1142px;top:222px;font-size:8px;font-weight:bold;color:#e8954a;letter-spacing:-0.2px">LOOSE</div>
<div class="a" style="left:1216px;top:222px;font-size:8px;font-weight:bold;color:#e3d266">TIGHT</div>
<div class="a" style="left:1174px;top:234px;font-size:11px;font-weight:bold;color:#f3f2f5">100 MS</div>

<div class="a" style="left:1113px;top:275px;width:160px;height:1px;background:#302e3b"></div>
<div class="a lbl" style="left:1113px;top:297px">ALIGNMENT RULE</div>
<div class="a dd" style="left:1113px;top:321px"></div>
<div class="a ddt" style="left:1121px;top:329px">NORMAL FLEXIBILITY</div>
<div class="a" style="left:1113px;top:359.5px;width:11.5px;height:11.5px;border:1px solid #34323e;border-radius:2px"></div>
<div class="a" style="left:1134px;top:360px;font-size:9.5px;font-weight:bold;color:#5e5c69;letter-spacing:0.55px">SMART ALIGN</div>
<div class="a" style="left:1113px;top:392px;width:160px;height:1px;background:#302e3b"></div>
<div class="a lbl" style="left:1113px;top:414px;letter-spacing:0.35px">MAXIMUM SHIFT</div>
<div class="a dd" style="left:1113px;top:438px"></div>
<div class="a ddt" style="left:1121px;top:446px">10 MS</div>
<div class="a" style="left:1112.3px;top:475.5px;width:13.6px;height:13.6px;border:1.7px solid #d2d0d8;background:#2a2835;border-radius:2.5px"></div>
<div class="a" style="left:1115.2px;top:478.4px;width:7.8px;height:7.8px;background:#dddbe3;border-radius:1px"></div>
<div class="a" style="left:1134px;top:477px;font-size:9.5px;font-weight:bold;color:#f0eff3;letter-spacing:0.45px">HIGH RESOLUTION</div>
<svg class="a" style="left:0;top:0" width="1540" height="850" viewBox="0 0 1540 850">
  <!-- dropdown chevrons -->
  <path d="M1254.5,331 L1258,334.5 L1261.5,331" fill="none" stroke="#f0eff3" stroke-width="1.6" stroke-linecap="round" stroke-linejoin="round"/>
  <path d="M1254.5,448 L1258,451.5 L1261.5,448" fill="none" stroke="#f0eff3" stroke-width="1.6" stroke-linecap="round" stroke-linejoin="round"/>

  <defs>
    <g id="spk">
      <path d="M0,5.5 L1,3.5 L1.6,6 L2.4,1 L3.2,6 L4,0 L4.8,5.5 L5.6,2.5 L6.4,6 L7.2,4 L8.4,6.5 L7.2,8 L6.4,7.5 L5.6,10 L4.8,8 L4,12 L3.2,7.5 L2.4,11 L1.6,7.5 L1,9 L0,7 Z"/>
      <path d="M11.3,0.6 L13,2.6 L11.3,4.6 L9.6,2.6 Z"/>
      <path d="M11.3,6.8 L13.2,9 L11.3,11.2 L9.4,9 Z"/>
    </g>
  </defs>
  <g fill="#8a8893">
    <use href="#spk" x="1074" y="127.8"/>
    <use href="#spk" x="1074" y="316.8"/>
    <use href="#spk" x="1074" y="505.8"/>
  </g>
  <g fill="#8d8b96" transform="translate(1061.8,738.2) scale(0.95)"><use href="#spk"/></g>
  <g stroke="#7c7a85" fill="none" stroke-width="1.5">
    <circle cx="1068" cy="772.3" r="3.2"/>
    <path d="M1070.4,774.7 L1073.3,777.6" stroke-linecap="round"/>
  </g>
  <g fill="#7c7a85">
    <path d="M1058,772.3 L1061,770 L1061,774.6Z"/>
    <path d="M1078.5,772.3 L1075.5,770 L1075.5,774.6Z"/>
  </g>
</svg>
</body></html>
